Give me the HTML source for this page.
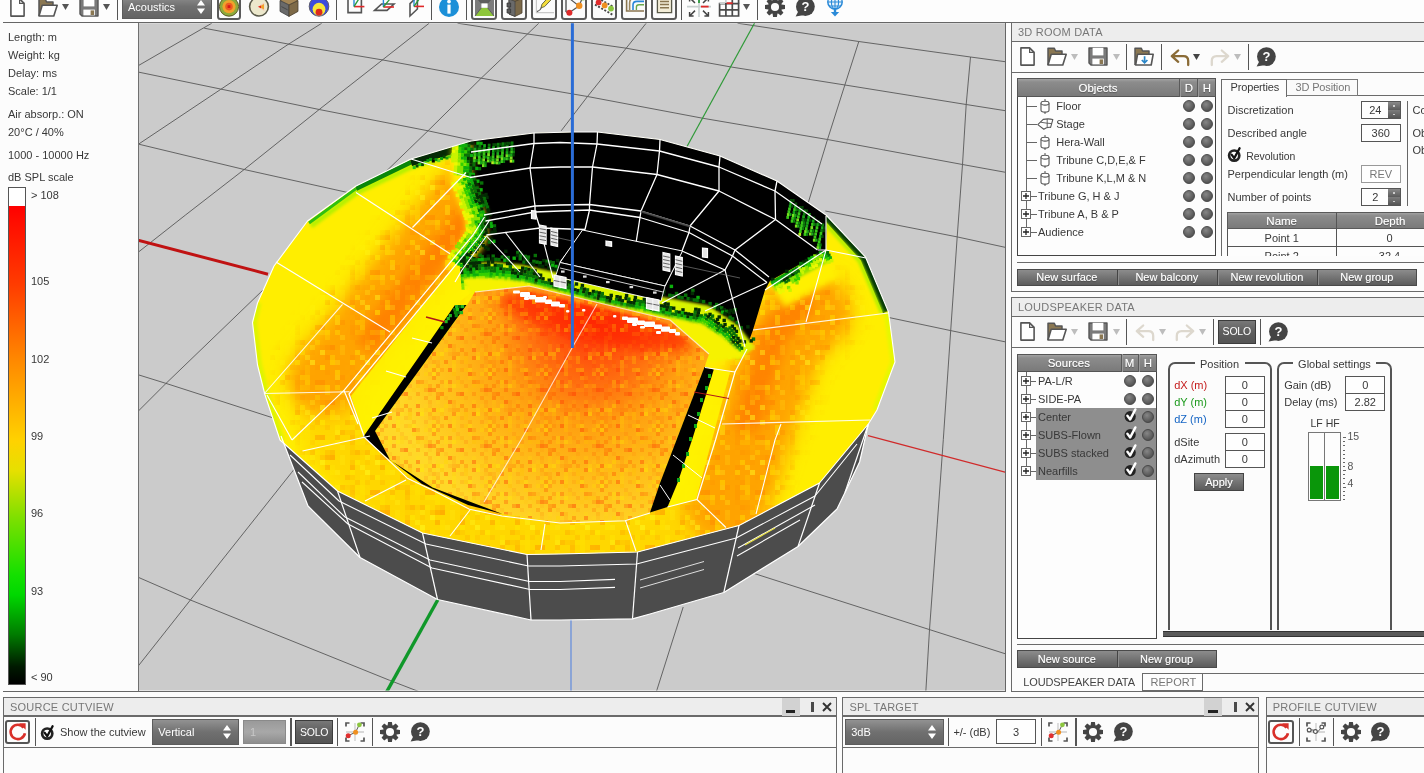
<!DOCTYPE html>
<html><head><meta charset="utf-8"><title>Acoustics</title>
<style>
html,body{margin:0;padding:0;}
body{width:1424px;height:773px;overflow:hidden;background:#fcfcfc;font-family:"Liberation Sans",sans-serif;}
#root{position:relative;width:1424px;height:773px;overflow:hidden;background:#fcfcfc;}
.t{position:absolute;white-space:nowrap;font-family:"Liberation Sans",sans-serif;}
.hd{background:linear-gradient(#a2a2a2,#8c8c8c 18%,#7a7a7a);}
.btn{background:linear-gradient(#8c8c8c,#767676 45%,#5c5c5c);}
.sh{text-shadow:0 0 1px rgba(255,255,255,.6),0 1px 1px rgba(0,0,0,.45);}
.inp{background:#fff;border:1px solid #555;box-sizing:border-box;}
svg{position:absolute;overflow:visible;}
#ui{position:absolute;left:0;top:0;width:1424px;height:773px;will-change:transform;}
</style></head>
<body>
<div id="root">
<svg style="left:0;top:0" width="1424" height="773" viewBox="0 0 1424 773"><defs>
<pattern id="nz" width="56" height="56" patternUnits="userSpaceOnUse"><rect x="0" y="8" width="4" height="4" fill="#ff3000" fill-opacity="0.47"/><rect x="0" y="16" width="4" height="4" fill="#ff7000" fill-opacity="0.18"/><rect x="0" y="32" width="4" height="4" fill="#ff3000" fill-opacity="0.47"/><rect x="0" y="44" width="4" height="4" fill="#ff3000" fill-opacity="0.35"/><rect x="0" y="52" width="4" height="4" fill="#ff3000" fill-opacity="0.34"/><rect x="4" y="8" width="4" height="4" fill="#ff7000" fill-opacity="0.22"/><rect x="4" y="12" width="4" height="4" fill="#ff5a00" fill-opacity="0.13"/><rect x="4" y="16" width="4" height="4" fill="#ff5a00" fill-opacity="0.26"/><rect x="4" y="20" width="4" height="4" fill="#ff3000" fill-opacity="0.35"/><rect x="4" y="24" width="4" height="4" fill="#ffd800" fill-opacity="0.40"/><rect x="4" y="28" width="4" height="4" fill="#ffee00" fill-opacity="0.30"/><rect x="4" y="32" width="4" height="4" fill="#ffee00" fill-opacity="0.22"/><rect x="4" y="36" width="4" height="4" fill="#ffc000" fill-opacity="0.45"/><rect x="4" y="48" width="4" height="4" fill="#ffee00" fill-opacity="0.42"/><rect x="8" y="0" width="4" height="4" fill="#ff3000" fill-opacity="0.32"/><rect x="8" y="12" width="4" height="4" fill="#ffd800" fill-opacity="0.10"/><rect x="8" y="16" width="4" height="4" fill="#ff7000" fill-opacity="0.35"/><rect x="8" y="20" width="4" height="4" fill="#ffee00" fill-opacity="0.24"/><rect x="8" y="28" width="4" height="4" fill="#ffd800" fill-opacity="0.11"/><rect x="8" y="40" width="4" height="4" fill="#ff3000" fill-opacity="0.11"/><rect x="8" y="44" width="4" height="4" fill="#ffc000" fill-opacity="0.35"/><rect x="8" y="48" width="4" height="4" fill="#ffd800" fill-opacity="0.21"/><rect x="12" y="0" width="4" height="4" fill="#ff3000" fill-opacity="0.52"/><rect x="12" y="8" width="4" height="4" fill="#ffd800" fill-opacity="0.11"/><rect x="12" y="12" width="4" height="4" fill="#ff5a00" fill-opacity="0.43"/><rect x="12" y="20" width="4" height="4" fill="#ffd800" fill-opacity="0.12"/><rect x="12" y="24" width="4" height="4" fill="#ff7000" fill-opacity="0.21"/><rect x="12" y="32" width="4" height="4" fill="#ff7000" fill-opacity="0.21"/><rect x="12" y="44" width="4" height="4" fill="#ff5a00" fill-opacity="0.15"/><rect x="16" y="4" width="4" height="4" fill="#ff7000" fill-opacity="0.17"/><rect x="16" y="16" width="4" height="4" fill="#ff7000" fill-opacity="0.35"/><rect x="16" y="20" width="4" height="4" fill="#ffc000" fill-opacity="0.48"/><rect x="16" y="24" width="4" height="4" fill="#ffc000" fill-opacity="0.40"/><rect x="16" y="32" width="4" height="4" fill="#ffc000" fill-opacity="0.46"/><rect x="16" y="48" width="4" height="4" fill="#ff3000" fill-opacity="0.17"/><rect x="16" y="52" width="4" height="4" fill="#ffd800" fill-opacity="0.16"/><rect x="20" y="28" width="4" height="4" fill="#ff7000" fill-opacity="0.26"/><rect x="20" y="32" width="4" height="4" fill="#ffee00" fill-opacity="0.36"/><rect x="20" y="36" width="4" height="4" fill="#ff3000" fill-opacity="0.48"/><rect x="20" y="40" width="4" height="4" fill="#ffd800" fill-opacity="0.31"/><rect x="20" y="52" width="4" height="4" fill="#ffc000" fill-opacity="0.20"/><rect x="24" y="0" width="4" height="4" fill="#ff5a00" fill-opacity="0.32"/><rect x="24" y="8" width="4" height="4" fill="#ffee00" fill-opacity="0.15"/><rect x="24" y="12" width="4" height="4" fill="#ff3000" fill-opacity="0.44"/><rect x="24" y="20" width="4" height="4" fill="#ff3000" fill-opacity="0.41"/><rect x="24" y="36" width="4" height="4" fill="#ff7000" fill-opacity="0.33"/><rect x="24" y="40" width="4" height="4" fill="#ffc000" fill-opacity="0.18"/><rect x="24" y="44" width="4" height="4" fill="#ff5a00" fill-opacity="0.46"/><rect x="24" y="48" width="4" height="4" fill="#ffc000" fill-opacity="0.46"/><rect x="28" y="0" width="4" height="4" fill="#ffc000" fill-opacity="0.09"/><rect x="28" y="16" width="4" height="4" fill="#ffee00" fill-opacity="0.29"/><rect x="28" y="20" width="4" height="4" fill="#ffee00" fill-opacity="0.53"/><rect x="28" y="44" width="4" height="4" fill="#ff7000" fill-opacity="0.48"/><rect x="28" y="48" width="4" height="4" fill="#ffc000" fill-opacity="0.24"/><rect x="28" y="52" width="4" height="4" fill="#ffc000" fill-opacity="0.14"/><rect x="32" y="4" width="4" height="4" fill="#ff5a00" fill-opacity="0.30"/><rect x="32" y="12" width="4" height="4" fill="#ffee00" fill-opacity="0.12"/><rect x="32" y="16" width="4" height="4" fill="#ffc000" fill-opacity="0.27"/><rect x="32" y="24" width="4" height="4" fill="#ffc000" fill-opacity="0.15"/><rect x="32" y="28" width="4" height="4" fill="#ff3000" fill-opacity="0.15"/><rect x="32" y="32" width="4" height="4" fill="#ffc000" fill-opacity="0.15"/><rect x="32" y="36" width="4" height="4" fill="#ffd800" fill-opacity="0.39"/><rect x="32" y="44" width="4" height="4" fill="#ff5a00" fill-opacity="0.09"/><rect x="32" y="48" width="4" height="4" fill="#ffc000" fill-opacity="0.39"/><rect x="32" y="52" width="4" height="4" fill="#ff5a00" fill-opacity="0.28"/><rect x="36" y="0" width="4" height="4" fill="#ff5a00" fill-opacity="0.09"/><rect x="36" y="8" width="4" height="4" fill="#ff7000" fill-opacity="0.23"/><rect x="36" y="12" width="4" height="4" fill="#ff5a00" fill-opacity="0.11"/><rect x="36" y="16" width="4" height="4" fill="#ffd800" fill-opacity="0.39"/><rect x="36" y="20" width="4" height="4" fill="#ff7000" fill-opacity="0.28"/><rect x="36" y="24" width="4" height="4" fill="#ff7000" fill-opacity="0.14"/><rect x="36" y="32" width="4" height="4" fill="#ffd800" fill-opacity="0.44"/><rect x="36" y="36" width="4" height="4" fill="#ff5a00" fill-opacity="0.16"/><rect x="36" y="40" width="4" height="4" fill="#ffc000" fill-opacity="0.14"/><rect x="36" y="48" width="4" height="4" fill="#ff7000" fill-opacity="0.34"/><rect x="36" y="52" width="4" height="4" fill="#ff3000" fill-opacity="0.50"/><rect x="40" y="16" width="4" height="4" fill="#ff3000" fill-opacity="0.44"/><rect x="40" y="20" width="4" height="4" fill="#ffd800" fill-opacity="0.23"/><rect x="40" y="24" width="4" height="4" fill="#ff7000" fill-opacity="0.32"/><rect x="40" y="28" width="4" height="4" fill="#ffd800" fill-opacity="0.32"/><rect x="40" y="32" width="4" height="4" fill="#ff7000" fill-opacity="0.52"/><rect x="40" y="36" width="4" height="4" fill="#ffee00" fill-opacity="0.51"/><rect x="40" y="40" width="4" height="4" fill="#ff5a00" fill-opacity="0.47"/><rect x="40" y="52" width="4" height="4" fill="#ff3000" fill-opacity="0.40"/><rect x="44" y="0" width="4" height="4" fill="#ff5a00" fill-opacity="0.39"/><rect x="44" y="4" width="4" height="4" fill="#ff5a00" fill-opacity="0.52"/><rect x="44" y="8" width="4" height="4" fill="#ffee00" fill-opacity="0.15"/><rect x="44" y="12" width="4" height="4" fill="#ffd800" fill-opacity="0.18"/><rect x="44" y="16" width="4" height="4" fill="#ffd800" fill-opacity="0.50"/><rect x="44" y="24" width="4" height="4" fill="#ff5a00" fill-opacity="0.16"/><rect x="44" y="28" width="4" height="4" fill="#ff7000" fill-opacity="0.27"/><rect x="44" y="32" width="4" height="4" fill="#ffee00" fill-opacity="0.23"/><rect x="44" y="36" width="4" height="4" fill="#ff3000" fill-opacity="0.24"/><rect x="44" y="40" width="4" height="4" fill="#ffc000" fill-opacity="0.09"/><rect x="44" y="48" width="4" height="4" fill="#ff7000" fill-opacity="0.53"/><rect x="48" y="0" width="4" height="4" fill="#ff5a00" fill-opacity="0.54"/><rect x="48" y="16" width="4" height="4" fill="#ffee00" fill-opacity="0.44"/><rect x="48" y="20" width="4" height="4" fill="#ffc000" fill-opacity="0.46"/><rect x="48" y="32" width="4" height="4" fill="#ff7000" fill-opacity="0.31"/><rect x="48" y="44" width="4" height="4" fill="#ff5a00" fill-opacity="0.28"/><rect x="48" y="52" width="4" height="4" fill="#ffc000" fill-opacity="0.12"/><rect x="52" y="4" width="4" height="4" fill="#ff5a00" fill-opacity="0.11"/><rect x="52" y="8" width="4" height="4" fill="#ffd800" fill-opacity="0.09"/><rect x="52" y="12" width="4" height="4" fill="#ffd800" fill-opacity="0.52"/><rect x="52" y="24" width="4" height="4" fill="#ff5a00" fill-opacity="0.52"/><rect x="52" y="28" width="4" height="4" fill="#ffee00" fill-opacity="0.10"/><rect x="52" y="44" width="4" height="4" fill="#ffee00" fill-opacity="0.29"/><rect x="52" y="48" width="4" height="4" fill="#ffee00" fill-opacity="0.24"/></pattern>
<pattern id="nz2" width="55" height="55" patternUnits="userSpaceOnUse"><rect x="0" y="10" width="5" height="5" fill="#ffa800" fill-opacity="0.59"/><rect x="0" y="15" width="5" height="5" fill="#ff8000" fill-opacity="0.57"/><rect x="0" y="25" width="5" height="5" fill="#ffe800" fill-opacity="0.42"/><rect x="0" y="30" width="5" height="5" fill="#ffe800" fill-opacity="0.58"/><rect x="5" y="0" width="5" height="5" fill="#fff000" fill-opacity="0.41"/><rect x="5" y="30" width="5" height="5" fill="#ffff20" fill-opacity="0.30"/><rect x="5" y="40" width="5" height="5" fill="#ffe800" fill-opacity="0.53"/><rect x="5" y="45" width="5" height="5" fill="#ffff20" fill-opacity="0.39"/><rect x="5" y="50" width="5" height="5" fill="#ff9000" fill-opacity="0.32"/><rect x="10" y="5" width="5" height="5" fill="#ffff20" fill-opacity="0.27"/><rect x="10" y="15" width="5" height="5" fill="#ffff20" fill-opacity="0.21"/><rect x="10" y="20" width="5" height="5" fill="#ffff20" fill-opacity="0.19"/><rect x="10" y="45" width="5" height="5" fill="#ff8000" fill-opacity="0.34"/><rect x="15" y="35" width="5" height="5" fill="#ffa800" fill-opacity="0.52"/><rect x="15" y="45" width="5" height="5" fill="#ffa800" fill-opacity="0.28"/><rect x="20" y="0" width="5" height="5" fill="#ff8000" fill-opacity="0.23"/><rect x="20" y="5" width="5" height="5" fill="#ff8000" fill-opacity="0.10"/><rect x="20" y="10" width="5" height="5" fill="#ffa800" fill-opacity="0.41"/><rect x="20" y="15" width="5" height="5" fill="#ffa800" fill-opacity="0.15"/><rect x="20" y="20" width="5" height="5" fill="#ffa800" fill-opacity="0.38"/><rect x="20" y="25" width="5" height="5" fill="#ff9000" fill-opacity="0.51"/><rect x="20" y="30" width="5" height="5" fill="#fff000" fill-opacity="0.44"/><rect x="20" y="35" width="5" height="5" fill="#ff8000" fill-opacity="0.12"/><rect x="20" y="45" width="5" height="5" fill="#ff9000" fill-opacity="0.28"/><rect x="20" y="50" width="5" height="5" fill="#ff9000" fill-opacity="0.41"/><rect x="25" y="0" width="5" height="5" fill="#fff000" fill-opacity="0.21"/><rect x="25" y="10" width="5" height="5" fill="#ff9000" fill-opacity="0.47"/><rect x="25" y="15" width="5" height="5" fill="#ffa800" fill-opacity="0.13"/><rect x="25" y="20" width="5" height="5" fill="#fff000" fill-opacity="0.46"/><rect x="25" y="40" width="5" height="5" fill="#ff8000" fill-opacity="0.20"/><rect x="25" y="45" width="5" height="5" fill="#ffe800" fill-opacity="0.34"/><rect x="30" y="0" width="5" height="5" fill="#fff000" fill-opacity="0.23"/><rect x="30" y="10" width="5" height="5" fill="#ff8000" fill-opacity="0.12"/><rect x="30" y="25" width="5" height="5" fill="#ffff20" fill-opacity="0.40"/><rect x="30" y="35" width="5" height="5" fill="#ffe800" fill-opacity="0.22"/><rect x="30" y="40" width="5" height="5" fill="#fff000" fill-opacity="0.19"/><rect x="30" y="45" width="5" height="5" fill="#fff000" fill-opacity="0.35"/><rect x="30" y="50" width="5" height="5" fill="#ffe800" fill-opacity="0.48"/><rect x="35" y="0" width="5" height="5" fill="#ffa800" fill-opacity="0.18"/><rect x="35" y="5" width="5" height="5" fill="#ffe800" fill-opacity="0.09"/><rect x="35" y="10" width="5" height="5" fill="#ffa800" fill-opacity="0.58"/><rect x="35" y="15" width="5" height="5" fill="#ffff20" fill-opacity="0.28"/><rect x="35" y="20" width="5" height="5" fill="#ff8000" fill-opacity="0.12"/><rect x="35" y="30" width="5" height="5" fill="#ffff20" fill-opacity="0.58"/><rect x="35" y="40" width="5" height="5" fill="#ffa800" fill-opacity="0.23"/><rect x="40" y="0" width="5" height="5" fill="#ffe800" fill-opacity="0.28"/><rect x="40" y="10" width="5" height="5" fill="#fff000" fill-opacity="0.31"/><rect x="40" y="35" width="5" height="5" fill="#ff9000" fill-opacity="0.25"/><rect x="40" y="50" width="5" height="5" fill="#ff8000" fill-opacity="0.45"/><rect x="45" y="0" width="5" height="5" fill="#ffff20" fill-opacity="0.21"/><rect x="45" y="15" width="5" height="5" fill="#ff9000" fill-opacity="0.27"/><rect x="45" y="20" width="5" height="5" fill="#ffff20" fill-opacity="0.52"/><rect x="45" y="35" width="5" height="5" fill="#fff000" fill-opacity="0.57"/><rect x="45" y="50" width="5" height="5" fill="#ff8000" fill-opacity="0.48"/><rect x="50" y="0" width="5" height="5" fill="#ffe800" fill-opacity="0.54"/><rect x="50" y="5" width="5" height="5" fill="#fff000" fill-opacity="0.29"/><rect x="50" y="10" width="5" height="5" fill="#ffa800" fill-opacity="0.37"/><rect x="50" y="15" width="5" height="5" fill="#ff9000" fill-opacity="0.57"/><rect x="50" y="25" width="5" height="5" fill="#ff8000" fill-opacity="0.42"/><rect x="50" y="40" width="5" height="5" fill="#ff8000" fill-opacity="0.17"/></pattern>

<radialGradient id="gfloor" gradientUnits="userSpaceOnUse" cx="0" cy="0" r="100" gradientTransform="translate(594 322) rotate(13) scale(2.1 2.2)">
 <stop offset="0" stop-color="#ff3808"/><stop offset="0.12" stop-color="#ff4a0c"/><stop offset="0.3" stop-color="#ff7210"/><stop offset="0.46" stop-color="#ff9e10"/><stop offset="0.7" stop-color="#ffbc18"/><stop offset="1" stop-color="#ffd828"/></radialGradient>
<radialGradient id="gL" gradientUnits="userSpaceOnUse" cx="0" cy="0" r="100" gradientTransform="translate(408 272) rotate(-52) scale(1.35 0.42)">
 <stop offset="0" stop-color="#ff7a00"/><stop offset="0.45" stop-color="#ff9800" stop-opacity=".85"/><stop offset="1" stop-color="#ffd000" stop-opacity="0"/></radialGradient>
<radialGradient id="gR" gradientUnits="userSpaceOnUse" cx="0" cy="0" r="100" gradientTransform="translate(800 318) rotate(58) scale(1.25 0.45)">
 <stop offset="0" stop-color="#ff7a00"/><stop offset="0.45" stop-color="#ff9800" stop-opacity=".85"/><stop offset="1" stop-color="#ffd000" stop-opacity="0"/></radialGradient>
<radialGradient id="gB" gradientUnits="userSpaceOnUse" cx="0" cy="0" r="100" gradientTransform="translate(560 505) scale(2.6 0.75)">
 <stop offset="0" stop-color="#ffb000" stop-opacity=".85"/><stop offset="0.7" stop-color="#ffc400" stop-opacity=".6"/><stop offset="1" stop-color="#ffd800" stop-opacity="0"/></radialGradient>
<filter id="bl3" filterUnits="userSpaceOnUse" x="200" y="100" width="760" height="520"><feGaussianBlur stdDeviation="3"/></filter>
<filter id="bl8" filterUnits="userSpaceOnUse" x="200" y="100" width="760" height="520"><feGaussianBlur stdDeviation="9"/></filter>
<filter id="bl5" filterUnits="userSpaceOnUse" x="200" y="100" width="760" height="520"><feGaussianBlur stdDeviation="6"/></filter>
<filter id="bl2" filterUnits="userSpaceOnUse" x="200" y="100" width="760" height="520"><feGaussianBlur stdDeviation="1.6"/></filter>
<clipPath id="cview"><rect x="138" y="23.3" width="867.3" height="667.3"/></clipPath>

<clipPath id="crim"><polygon points="574.0,132.0 597.5,132.0 660.0,139.5 720.0,156.0 777.0,181.0 826.0,215.0 865.5,257.0 888.5,312.0 895.0,362.0 877.0,410.0 868.4,424.0 819.5,483.0 739.0,525.5 637.5,552.0 560.0,554.0 527.0,554.5 422.5,533.0 337.5,491.0 280.0,440.0 265.0,395.0 257.5,365.0 252.5,322.5 257.5,303.0 274.0,266.0 307.5,221.0 356.0,186.0 411.0,159.0 471.0,141.0 534.0,133.0"/></clipPath>
<clipPath id="cfloor"><polygon points="475.0,292.0 529.0,286.0 670.0,320.0 709.0,354.0 704.5,367.0 660.0,483.0 650.0,512.5 625.0,520.0 560.0,522.5 502.5,514.0 432.5,487.5 390.0,460.0 375.0,431.0 467.0,305.0"/></clipPath>
<clipPath id="cblack"><polygon points="471.0,141.0 534.0,133.0 574.0,132.0 597.5,132.0 660.0,139.5 720.0,156.0 777.0,181.0 826.0,215.0 826.5,232.0 826.0,250.0 770.0,281.0 765.0,290.0 753.0,330.0 746.0,349.0 709.0,354.0 670.0,320.0 529.0,286.0 475.0,292.0 462.0,270.0 486.5,235.0 484.0,215.0 470.0,177.5"/></clipPath>
</defs>
<g clip-path="url(#cview)">
<rect x="138" y="23" width="868" height="668" fill="#cbcbcb"/>
<polyline points="737.5,23.2 858.8,41.5 970.5,57.0 1006.0,61.8" fill="none" stroke="#585858" stroke-width="0.9"/>
<polyline points="457.5,23.2 527.5,34.0 626.2,48.2 731.2,67.0 845.0,85.0 966.2,104.5 1006.0,110.8" fill="none" stroke="#585858" stroke-width="0.9"/>
<polyline points="204.2,28.2 288.0,44.0 383.0,60.0 481.2,78.2 587.5,96.5 702.5,118.2 827.5,139.5 962.5,164.5 1006.0,172.4" fill="none" stroke="#585858" stroke-width="0.9"/>
<polyline points="138.0,72.0 220.5,89.0 319.2,109.5 428.0,130.8 480.0,142.0" fill="none" stroke="#585858" stroke-width="0.9"/>
<polyline points="825.3,211.0 957.2,236.9 1006.0,247.5" fill="none" stroke="#585858" stroke-width="0.9"/>
<polyline points="138.0,144.0 244.2,169.5 345.5,192.0 380.0,200.0" fill="none" stroke="#585858" stroke-width="0.9"/>
<polyline points="885.0,316.7 950.7,330.6 1006.0,342.0" fill="none" stroke="#585858" stroke-width="0.9"/>
<polyline points="138.0,374.7 166.0,383.4 269.0,416.6 290.0,423.0" fill="none" stroke="#585858" stroke-width="0.9"/>
<polyline points="138.0,577.2 190.4,600.0 389.6,680.3 420.0,692.0" fill="none" stroke="#585858" stroke-width="0.9"/>
<polyline points="754.8,573.7 929.5,629.6 1006.0,654.0" fill="none" stroke="#585858" stroke-width="0.9"/>
<polyline points="138.0,65.8 211.8,23.2" fill="none" stroke="#585858" stroke-width="0.9"/>
<polyline points="138.0,144.5 220.5,89.5 288.0,44.5 321.8,23.2" fill="none" stroke="#585858" stroke-width="0.9"/>
<polyline points="138.0,252.4 185.5,215.0 244.2,169.5 319.2,109.5 383.0,59.5 429.2,23.2" fill="none" stroke="#585858" stroke-width="0.9"/>
<polyline points="138.0,411.4 166.0,383.4 260.3,292.6 388.0,169.5 428.0,130.8 481.2,78.2 527.5,34.0 538.8,23.2" fill="none" stroke="#585858" stroke-width="0.9"/>
<polyline points="138.0,666.3 190.4,600.0 291.7,472.4 330.0,424.0" fill="none" stroke="#585858" stroke-width="0.9"/>
<polyline points="561.2,130.8 587.5,96.5 626.2,48.2 646.2,23.2" fill="none" stroke="#585858" stroke-width="0.9"/>
<polyline points="858.8,41.5 845.0,84.5 827.5,139.5 806.0,210.0" fill="none" stroke="#585858" stroke-width="0.9"/>
<polyline points="683.2,607.0 657.0,689.7 656.0,693.0" fill="none" stroke="#585858" stroke-width="0.9"/>
<polyline points="970.5,57.0 966.2,104.5 962.5,164.5 957.2,236.9 950.7,330.6 943.3,439.6 937.2,524.8 929.5,629.6 925.8,692.0" fill="none" stroke="#585858" stroke-width="0.9"/>
<line x1="138" y1="240.2" x2="268" y2="274.2" stroke="#c01212" stroke-width="3"/>
<line x1="868" y1="435.6" x2="1006" y2="472.4" stroke="#d02a2a" stroke-width="1.2"/>
<line x1="754.6" y1="23" x2="687" y2="146.5" stroke="#2f9a38" stroke-width="1.2"/>
<line x1="438" y1="599.5" x2="386.6" y2="692" stroke="#10982a" stroke-width="3.4"/>
<line x1="571" y1="619" x2="571" y2="692" stroke="#7a9ad8" stroke-width="1.6"/>
<polygon points="868.4,424.0 859.6,462.0 845.0,492.5 837.0,509.0 798.0,546.5 723.8,592.5 650.0,614.0 632.5,618.8 560.0,620.0 531.0,620.0 437.5,599.5 360.0,557.5 308.0,506.0 281.0,436.0 280.0,440.0 337.5,491.0 422.5,533.0 527.0,554.5 560.0,554.0 637.5,552.0 739.0,525.5 819.5,483.0" fill="#4c4c4c"/>
<polygon points="574.0,132.0 597.5,132.0 660.0,139.5 720.0,156.0 777.0,181.0 826.0,215.0 865.5,257.0 888.5,312.0 895.0,362.0 877.0,410.0 868.4,424.0 819.5,483.0 739.0,525.5 637.5,552.0 560.0,554.0 527.0,554.5 422.5,533.0 337.5,491.0 280.0,440.0 265.0,395.0 257.5,365.0 252.5,322.5 257.5,303.0 274.0,266.0 307.5,221.0 356.0,186.0 411.0,159.0 471.0,141.0 534.0,133.0" fill="#ffee00"/>
<g clip-path="url(#crim)">
<polyline points="326.0,390.0 338.0,444.0 392.0,496.0 470.0,532.0 560.0,548.0 640.0,545.0 716.0,520.0 745.0,482.0" fill="none" stroke="#ffd400" stroke-width="66" stroke-opacity="0.85" stroke-linecap="round" stroke-linejoin="round" filter="url(#bl8)"/>
<polyline points="470.0,199.0 440.0,236.0 400.0,286.0 362.0,334.0 326.0,378.0" fill="none" stroke="#ffa000" stroke-width="74" stroke-opacity="0.95" stroke-linecap="round" stroke-linejoin="round" filter="url(#bl8)"/>
<polyline points="478.0,206.0 446.0,244.0 408.0,292.0 372.0,338.0" fill="none" stroke="#ff7c00" stroke-width="26" stroke-opacity="0.85" stroke-linecap="round" stroke-linejoin="round" filter="url(#bl5)"/>
<polyline points="812.0,312.0 786.0,336.0 764.0,395.0 745.0,455.0 726.0,505.0" fill="none" stroke="#ffa000" stroke-width="80" stroke-opacity="0.95" stroke-linecap="round" stroke-linejoin="round" filter="url(#bl8)"/>
<polyline points="800.0,306.0 775.0,332.0 762.0,372.0 748.0,420.0" fill="none" stroke="#ff7c00" stroke-width="28" stroke-opacity="0.8" stroke-linecap="round" stroke-linejoin="round" filter="url(#bl5)"/>
<mask id="mring" maskUnits="userSpaceOnUse" x="240" y="120" width="670" height="450"><rect x="240" y="120" width="670" height="450" fill="#000"/><polyline points="326.0,390.0 338.0,444.0 392.0,496.0 470.0,532.0 560.0,548.0 640.0,545.0 716.0,520.0 745.0,482.0" fill="none" stroke="#fff" stroke-width="74" stroke-opacity="1" stroke-linecap="round" stroke-linejoin="round" filter="url(#bl8)"/><polyline points="470.0,199.0 440.0,236.0 400.0,286.0 362.0,334.0 326.0,378.0" fill="none" stroke="#fff" stroke-width="98" stroke-opacity="1" stroke-linecap="round" stroke-linejoin="round" filter="url(#bl8)"/><polyline points="812.0,312.0 786.0,336.0 764.0,395.0 745.0,455.0 726.0,505.0" fill="none" stroke="#fff" stroke-width="96" stroke-opacity="1" stroke-linecap="round" stroke-linejoin="round" filter="url(#bl8)"/></mask>
<rect x="240" y="120" width="670" height="450" fill="url(#nz2)" mask="url(#mring)" opacity=".8"/>
<polygon points="483.0,219.0 489.0,222.0 351.0,396.0 364.0,436.0 455.0,305.0 472.0,292.0 462.0,270.0" fill="#fff200" opacity=".92"/>
<polygon points="713.8,369.5 730.0,372.0 696.0,500.0 667.5,507.0 677.5,483.0 692.0,440.0" fill="#fff200" opacity=".95"/>
<polyline points="471.0,149.0 411.0,167.0 356.0,193.0 311.0,226.0" fill="none" stroke="#b4f000" stroke-width="5" filter="url(#bl2)"/>
<polyline points="356.0,188.5 309.0,223.0" fill="none" stroke="#30c010" stroke-width="3"/>
<polyline points="411.0,162.0 356.0,188.5" fill="none" stroke="#0a860a" stroke-width="5"/>
<polyline points="472.0,144.5 411.0,162.5" fill="none" stroke="#042a04" stroke-width="7.5"/>
<rect x="470.0" y="146.2" width="3" height="3" fill="#064806"/>
<rect x="467.3" y="148.9" width="3" height="3" fill="#064806"/>
<rect x="464.5" y="150.5" width="3" height="3" fill="#064806"/>
<rect x="461.8" y="151.2" width="3" height="3" fill="#58d820"/>
<rect x="459.1" y="149.5" width="3" height="3" fill="#58d820"/>
<rect x="456.4" y="150.5" width="3" height="3" fill="#0c9c0c"/>
<rect x="453.6" y="150.5" width="3" height="3" fill="#58d820"/>
<rect x="450.9" y="152.9" width="3" height="3" fill="#28c418"/>
<rect x="448.2" y="155.2" width="3" height="3" fill="#28c418"/>
<rect x="445.5" y="156.5" width="3" height="3" fill="#0c9c0c"/>
<rect x="442.7" y="155.4" width="3" height="3" fill="#064806"/>
<rect x="440.0" y="157.0" width="3" height="3" fill="#0c9c0c"/>
<rect x="437.3" y="159.1" width="3" height="3" fill="#58d820"/>
<rect x="434.5" y="158.1" width="3" height="3" fill="#0c9c0c"/>
<rect x="431.8" y="159.5" width="3" height="3" fill="#000"/>
<rect x="429.1" y="157.9" width="3" height="3" fill="#0c9c0c"/>
<rect x="426.4" y="159.1" width="3" height="3" fill="#0c9c0c"/>
<rect x="423.6" y="161.2" width="3" height="3" fill="#58d820"/>
<rect x="420.9" y="163.1" width="3" height="3" fill="#064806"/>
<rect x="418.2" y="163.0" width="3" height="3" fill="#28c418"/>
<rect x="415.5" y="164.5" width="3" height="3" fill="#064806"/>
<rect x="412.7" y="166.1" width="3" height="3" fill="#28c418"/>
<polyline points="826.0,217.0 863.5,258.5 886.0,312.0" fill="none" stroke="#063a06" stroke-width="6.5"/>
<polyline points="822.0,220.0 859.5,261.0 882.0,313.0" fill="none" stroke="#a8f000" stroke-width="3.4" filter="url(#bl2)"/>
<polyline points="259.0,303.0 254.5,322.5 259.5,365.0 267.0,395.0 282.0,440.0" fill="none" stroke="#dcf400" stroke-width="5" filter="url(#bl2)"/>
<polyline points="886.5,312.0 893.0,362.0 875.0,410.0" fill="none" stroke="#e4f800" stroke-width="5" filter="url(#bl2)"/>
</g>
<polygon points="471.0,141.0 534.0,133.0 574.0,132.0 597.5,132.0 660.0,139.5 720.0,156.0 777.0,181.0 826.0,215.0 826.5,232.0 826.0,250.0 770.0,281.0 765.0,290.0 753.0,330.0 746.0,349.0 709.0,354.0 670.0,320.0 529.0,286.0 475.0,292.0 462.0,270.0 486.5,235.0 484.0,215.0 470.0,177.5" fill="#000"/>
<g clip-path="url(#crim)">
<polyline points="462.0,270.0 492.0,268.0 522.0,271.0 553.0,278.0 600.0,290.0 662.0,303.0 705.0,311.0 730.0,328.0 746.0,349.0" fill="none" stroke="#d8f400" stroke-width="22" filter="url(#bl2)" stroke-linejoin="round" transform="translate(0 5)"/>
<polyline points="463.0,144.0 461.0,178.5 475.0,216.0 477.5,237.0 453.0,271.0" fill="none" stroke="#fff000" stroke-width="20" filter="url(#bl3)" stroke-linejoin="round"/>
<polyline points="835.0,266.0 807.0,281.0 779.0,297.0" fill="none" stroke="#fff000" stroke-width="24" filter="url(#bl3)" stroke-linejoin="round"/>
<polyline points="829.5,256.0 801.5,271.0 773.5,287.0" fill="none" stroke="#8ce000" stroke-width="9" filter="url(#bl2)"/>
<polyline points="827.2,252.4 799.2,267.4 771.2,283.4" fill="none" stroke="#0ca00c" stroke-width="4.5"/>
<rect x="479.3" y="141.8" width="3.4" height="3.4" fill="#0cb00c"/><rect x="476.3" y="141.6" width="3.4" height="3.4" fill="#0cb00c"/><rect x="470.3" y="141.3" width="3.4" height="3.4" fill="#042c04"/><rect x="467.3" y="141.1" width="3.4" height="3.4" fill="#042c04"/><rect x="464.3" y="141.0" width="3.4" height="3.4" fill="#087008"/><rect x="461.3" y="140.8" width="3.4" height="3.4" fill="#34d000"/><rect x="458.3" y="140.6" width="3.4" height="3.4" fill="#34d000"/><rect x="455.3" y="140.4" width="3.4" height="3.4" fill="#c8f400"/><rect x="452.3" y="140.3" width="3.4" height="3.4" fill="#c8f400"/><rect x="476.1" y="144.8" width="3.4" height="3.4" fill="#042c04"/><rect x="467.1" y="144.3" width="3.4" height="3.4" fill="#087008"/><rect x="464.1" y="144.1" width="3.4" height="3.4" fill="#0cb00c"/><rect x="461.1" y="143.9" width="3.4" height="3.4" fill="#0cb00c"/><rect x="458.1" y="143.7" width="3.4" height="3.4" fill="#0cb00c"/><rect x="455.1" y="143.6" width="3.4" height="3.4" fill="#c8f400"/><rect x="452.1" y="143.4" width="3.4" height="3.4" fill="#c8f400"/><rect x="475.9" y="147.9" width="3.4" height="3.4" fill="#0cb00c"/><rect x="469.9" y="147.6" width="3.4" height="3.4" fill="#087008"/><rect x="466.9" y="147.4" width="3.4" height="3.4" fill="#0cb00c"/><rect x="463.9" y="147.2" width="3.4" height="3.4" fill="#087008"/><rect x="461.0" y="147.1" width="3.4" height="3.4" fill="#0cb00c"/><rect x="458.0" y="146.9" width="3.4" height="3.4" fill="#34d000"/><rect x="455.0" y="146.7" width="3.4" height="3.4" fill="#ecf800"/><rect x="452.0" y="146.5" width="3.4" height="3.4" fill="#c8f400"/><rect x="475.7" y="151.1" width="3.4" height="3.4" fill="#0cb00c"/><rect x="469.8" y="150.7" width="3.4" height="3.4" fill="#042c04"/><rect x="466.8" y="150.5" width="3.4" height="3.4" fill="#087008"/><rect x="463.8" y="150.4" width="3.4" height="3.4" fill="#34d000"/><rect x="460.8" y="150.2" width="3.4" height="3.4" fill="#0cb00c"/><rect x="457.8" y="150.0" width="3.4" height="3.4" fill="#34d000"/><rect x="454.8" y="149.8" width="3.4" height="3.4" fill="#c8f400"/><rect x="451.8" y="149.7" width="3.4" height="3.4" fill="#ecf800"/><rect x="475.6" y="154.2" width="3.4" height="3.4" fill="#042c04"/><rect x="472.6" y="154.0" width="3.4" height="3.4" fill="#042c04"/><rect x="469.6" y="153.8" width="3.4" height="3.4" fill="#0cb00c"/><rect x="466.6" y="153.7" width="3.4" height="3.4" fill="#087008"/><rect x="463.6" y="153.5" width="3.4" height="3.4" fill="#087008"/><rect x="460.6" y="153.3" width="3.4" height="3.4" fill="#34d000"/><rect x="457.6" y="153.2" width="3.4" height="3.4" fill="#86e400"/><rect x="454.6" y="153.0" width="3.4" height="3.4" fill="#c8f400"/><rect x="451.6" y="152.8" width="3.4" height="3.4" fill="#c8f400"/><rect x="478.4" y="157.5" width="3.4" height="3.4" fill="#087008"/><rect x="469.4" y="157.0" width="3.4" height="3.4" fill="#042c04"/><rect x="466.4" y="156.8" width="3.4" height="3.4" fill="#042c04"/><rect x="463.4" y="156.6" width="3.4" height="3.4" fill="#0cb00c"/><rect x="460.4" y="156.5" width="3.4" height="3.4" fill="#0cb00c"/><rect x="457.4" y="156.3" width="3.4" height="3.4" fill="#86e400"/><rect x="454.4" y="156.1" width="3.4" height="3.4" fill="#c8f400"/><rect x="451.4" y="155.9" width="3.4" height="3.4" fill="#c8f400"/><rect x="478.2" y="160.6" width="3.4" height="3.4" fill="#0cb00c"/><rect x="472.2" y="160.3" width="3.4" height="3.4" fill="#087008"/><rect x="469.2" y="160.1" width="3.4" height="3.4" fill="#042c04"/><rect x="466.2" y="159.9" width="3.4" height="3.4" fill="#087008"/><rect x="463.2" y="159.8" width="3.4" height="3.4" fill="#34d000"/><rect x="460.2" y="159.6" width="3.4" height="3.4" fill="#86e400"/><rect x="457.2" y="159.4" width="3.4" height="3.4" fill="#86e400"/><rect x="454.2" y="159.3" width="3.4" height="3.4" fill="#c8f400"/><rect x="451.2" y="159.1" width="3.4" height="3.4" fill="#c8f400"/><rect x="472.0" y="163.4" width="3.4" height="3.4" fill="#087008"/><rect x="469.0" y="163.3" width="3.4" height="3.4" fill="#042c04"/><rect x="466.0" y="163.1" width="3.4" height="3.4" fill="#34d000"/><rect x="463.0" y="162.9" width="3.4" height="3.4" fill="#86e400"/><rect x="460.0" y="162.7" width="3.4" height="3.4" fill="#34d000"/><rect x="457.0" y="162.6" width="3.4" height="3.4" fill="#c8f400"/><rect x="454.1" y="162.4" width="3.4" height="3.4" fill="#ecf800"/><rect x="477.8" y="166.9" width="3.4" height="3.4" fill="#087008"/><rect x="474.8" y="166.7" width="3.4" height="3.4" fill="#0cb00c"/><rect x="471.8" y="166.6" width="3.4" height="3.4" fill="#042c04"/><rect x="468.8" y="166.4" width="3.4" height="3.4" fill="#087008"/><rect x="465.9" y="166.2" width="3.4" height="3.4" fill="#0cb00c"/><rect x="462.9" y="166.0" width="3.4" height="3.4" fill="#0cb00c"/><rect x="459.9" y="165.9" width="3.4" height="3.4" fill="#86e400"/><rect x="456.9" y="165.7" width="3.4" height="3.4" fill="#86e400"/><rect x="453.9" y="165.5" width="3.4" height="3.4" fill="#c8f400"/><rect x="468.7" y="169.5" width="3.4" height="3.4" fill="#087008"/><rect x="465.7" y="169.4" width="3.4" height="3.4" fill="#0cb00c"/><rect x="462.7" y="169.2" width="3.4" height="3.4" fill="#0cb00c"/><rect x="459.7" y="169.0" width="3.4" height="3.4" fill="#86e400"/><rect x="456.7" y="168.8" width="3.4" height="3.4" fill="#86e400"/><rect x="453.7" y="168.7" width="3.4" height="3.4" fill="#c8f400"/><rect x="471.5" y="172.8" width="3.4" height="3.4" fill="#0cb00c"/><rect x="468.5" y="172.7" width="3.4" height="3.4" fill="#0cb00c"/><rect x="465.5" y="172.5" width="3.4" height="3.4" fill="#087008"/><rect x="462.5" y="172.3" width="3.4" height="3.4" fill="#34d000"/><rect x="459.5" y="172.1" width="3.4" height="3.4" fill="#86e400"/><rect x="456.5" y="172.0" width="3.4" height="3.4" fill="#86e400"/><rect x="453.5" y="171.8" width="3.4" height="3.4" fill="#c8f400"/><rect x="471.1" y="174.8" width="3.4" height="3.4" fill="#042c04"/><rect x="468.3" y="175.8" width="3.4" height="3.4" fill="#0cb00c"/><rect x="465.5" y="176.8" width="3.4" height="3.4" fill="#34d000"/><rect x="462.7" y="177.9" width="3.4" height="3.4" fill="#0cb00c"/><rect x="459.9" y="178.9" width="3.4" height="3.4" fill="#86e400"/><rect x="457.1" y="180.0" width="3.4" height="3.4" fill="#86e400"/><rect x="454.2" y="181.0" width="3.4" height="3.4" fill="#ecf800"/><rect x="451.4" y="182.1" width="3.4" height="3.4" fill="#ecf800"/><rect x="472.2" y="177.6" width="3.4" height="3.4" fill="#087008"/><rect x="469.4" y="178.7" width="3.4" height="3.4" fill="#0cb00c"/><rect x="466.6" y="179.7" width="3.4" height="3.4" fill="#0cb00c"/><rect x="463.8" y="180.8" width="3.4" height="3.4" fill="#86e400"/><rect x="460.9" y="181.8" width="3.4" height="3.4" fill="#34d000"/><rect x="458.1" y="182.9" width="3.4" height="3.4" fill="#c8f400"/><rect x="455.3" y="183.9" width="3.4" height="3.4" fill="#ecf800"/><rect x="452.5" y="185.0" width="3.4" height="3.4" fill="#ecf800"/><rect x="476.1" y="179.5" width="3.4" height="3.4" fill="#0cb00c"/><rect x="473.3" y="180.5" width="3.4" height="3.4" fill="#042c04"/><rect x="470.5" y="181.6" width="3.4" height="3.4" fill="#0cb00c"/><rect x="467.6" y="182.6" width="3.4" height="3.4" fill="#087008"/><rect x="464.8" y="183.7" width="3.4" height="3.4" fill="#0cb00c"/><rect x="462.0" y="184.7" width="3.4" height="3.4" fill="#c8f400"/><rect x="459.2" y="185.8" width="3.4" height="3.4" fill="#ecf800"/><rect x="453.6" y="187.9" width="3.4" height="3.4" fill="#ecf800"/><rect x="480.0" y="181.3" width="3.4" height="3.4" fill="#087008"/><rect x="474.3" y="183.4" width="3.4" height="3.4" fill="#042c04"/><rect x="471.5" y="184.5" width="3.4" height="3.4" fill="#087008"/><rect x="468.7" y="185.5" width="3.4" height="3.4" fill="#0cb00c"/><rect x="465.9" y="186.6" width="3.4" height="3.4" fill="#0cb00c"/><rect x="463.1" y="187.6" width="3.4" height="3.4" fill="#34d000"/><rect x="460.3" y="188.7" width="3.4" height="3.4" fill="#c8f400"/><rect x="457.5" y="189.7" width="3.4" height="3.4" fill="#c8f400"/><rect x="475.4" y="186.3" width="3.4" height="3.4" fill="#087008"/><rect x="472.6" y="187.3" width="3.4" height="3.4" fill="#087008"/><rect x="469.8" y="188.4" width="3.4" height="3.4" fill="#087008"/><rect x="467.0" y="189.4" width="3.4" height="3.4" fill="#34d000"/><rect x="464.2" y="190.5" width="3.4" height="3.4" fill="#34d000"/><rect x="461.4" y="191.5" width="3.4" height="3.4" fill="#86e400"/><rect x="458.6" y="192.6" width="3.4" height="3.4" fill="#c8f400"/><rect x="455.7" y="193.6" width="3.4" height="3.4" fill="#ecf800"/><rect x="479.3" y="188.1" width="3.4" height="3.4" fill="#0cb00c"/><rect x="476.5" y="189.2" width="3.4" height="3.4" fill="#042c04"/><rect x="473.7" y="190.2" width="3.4" height="3.4" fill="#087008"/><rect x="470.9" y="191.3" width="3.4" height="3.4" fill="#087008"/><rect x="468.1" y="192.3" width="3.4" height="3.4" fill="#0cb00c"/><rect x="465.3" y="193.4" width="3.4" height="3.4" fill="#34d000"/><rect x="462.4" y="194.4" width="3.4" height="3.4" fill="#c8f400"/><rect x="459.6" y="195.5" width="3.4" height="3.4" fill="#86e400"/><rect x="477.6" y="192.1" width="3.4" height="3.4" fill="#087008"/><rect x="474.8" y="193.1" width="3.4" height="3.4" fill="#042c04"/><rect x="472.0" y="194.2" width="3.4" height="3.4" fill="#0cb00c"/><rect x="469.1" y="195.2" width="3.4" height="3.4" fill="#0cb00c"/><rect x="466.3" y="196.3" width="3.4" height="3.4" fill="#86e400"/><rect x="463.5" y="197.3" width="3.4" height="3.4" fill="#86e400"/><rect x="460.7" y="198.4" width="3.4" height="3.4" fill="#c8f400"/><rect x="484.3" y="192.8" width="3.4" height="3.4" fill="#042c04"/><rect x="481.5" y="193.9" width="3.4" height="3.4" fill="#042c04"/><rect x="478.6" y="194.9" width="3.4" height="3.4" fill="#042c04"/><rect x="475.8" y="196.0" width="3.4" height="3.4" fill="#042c04"/><rect x="473.0" y="197.0" width="3.4" height="3.4" fill="#087008"/><rect x="470.2" y="198.1" width="3.4" height="3.4" fill="#0cb00c"/><rect x="467.4" y="199.1" width="3.4" height="3.4" fill="#34d000"/><rect x="464.6" y="200.2" width="3.4" height="3.4" fill="#86e400"/><rect x="461.8" y="201.2" width="3.4" height="3.4" fill="#c8f400"/><rect x="459.0" y="202.3" width="3.4" height="3.4" fill="#ecf800"/><rect x="485.3" y="195.7" width="3.4" height="3.4" fill="#042c04"/><rect x="482.5" y="196.8" width="3.4" height="3.4" fill="#087008"/><rect x="479.7" y="197.8" width="3.4" height="3.4" fill="#042c04"/><rect x="476.9" y="198.9" width="3.4" height="3.4" fill="#087008"/><rect x="474.1" y="199.9" width="3.4" height="3.4" fill="#042c04"/><rect x="471.3" y="201.0" width="3.4" height="3.4" fill="#0cb00c"/><rect x="468.5" y="202.0" width="3.4" height="3.4" fill="#34d000"/><rect x="465.7" y="203.1" width="3.4" height="3.4" fill="#86e400"/><rect x="462.9" y="204.1" width="3.4" height="3.4" fill="#c8f400"/><rect x="460.1" y="205.2" width="3.4" height="3.4" fill="#c8f400"/><rect x="483.6" y="199.7" width="3.4" height="3.4" fill="#087008"/><rect x="480.8" y="200.7" width="3.4" height="3.4" fill="#042c04"/><rect x="478.0" y="201.8" width="3.4" height="3.4" fill="#042c04"/><rect x="475.2" y="202.8" width="3.4" height="3.4" fill="#0cb00c"/><rect x="472.4" y="203.9" width="3.4" height="3.4" fill="#34d000"/><rect x="469.6" y="204.9" width="3.4" height="3.4" fill="#0cb00c"/><rect x="466.8" y="206.0" width="3.4" height="3.4" fill="#86e400"/><rect x="463.9" y="207.0" width="3.4" height="3.4" fill="#c8f400"/><rect x="484.7" y="202.5" width="3.4" height="3.4" fill="#087008"/><rect x="481.9" y="203.6" width="3.4" height="3.4" fill="#087008"/><rect x="479.1" y="204.6" width="3.4" height="3.4" fill="#0cb00c"/><rect x="476.3" y="205.7" width="3.4" height="3.4" fill="#34d000"/><rect x="473.4" y="206.7" width="3.4" height="3.4" fill="#86e400"/><rect x="470.6" y="207.8" width="3.4" height="3.4" fill="#86e400"/><rect x="467.8" y="208.8" width="3.4" height="3.4" fill="#c8f400"/><rect x="465.0" y="209.9" width="3.4" height="3.4" fill="#c8f400"/><rect x="462.2" y="210.9" width="3.4" height="3.4" fill="#ecf800"/><rect x="485.8" y="205.4" width="3.4" height="3.4" fill="#087008"/><rect x="480.1" y="207.5" width="3.4" height="3.4" fill="#042c04"/><rect x="477.3" y="208.6" width="3.4" height="3.4" fill="#087008"/><rect x="474.5" y="209.6" width="3.4" height="3.4" fill="#86e400"/><rect x="471.7" y="210.7" width="3.4" height="3.4" fill="#34d000"/><rect x="468.9" y="211.7" width="3.4" height="3.4" fill="#86e400"/><rect x="466.1" y="212.8" width="3.4" height="3.4" fill="#ecf800"/><rect x="463.3" y="213.8" width="3.4" height="3.4" fill="#ecf800"/><rect x="486.8" y="208.3" width="3.4" height="3.4" fill="#042c04"/><rect x="481.2" y="210.4" width="3.4" height="3.4" fill="#0cb00c"/><rect x="478.4" y="211.5" width="3.4" height="3.4" fill="#0cb00c"/><rect x="475.6" y="212.5" width="3.4" height="3.4" fill="#86e400"/><rect x="472.8" y="213.6" width="3.4" height="3.4" fill="#34d000"/><rect x="470.0" y="214.6" width="3.4" height="3.4" fill="#c8f400"/><rect x="464.4" y="216.7" width="3.4" height="3.4" fill="#ecf800"/><rect x="488.3" y="212.6" width="3.4" height="3.4" fill="#042c04"/><rect x="485.3" y="212.9" width="3.4" height="3.4" fill="#042c04"/><rect x="482.3" y="213.3" width="3.4" height="3.4" fill="#0cb00c"/><rect x="479.3" y="213.7" width="3.4" height="3.4" fill="#34d000"/><rect x="476.3" y="214.0" width="3.4" height="3.4" fill="#0cb00c"/><rect x="473.4" y="214.4" width="3.4" height="3.4" fill="#86e400"/><rect x="470.4" y="214.7" width="3.4" height="3.4" fill="#ecf800"/><rect x="467.4" y="215.1" width="3.4" height="3.4" fill="#ecf800"/><rect x="485.6" y="215.9" width="3.4" height="3.4" fill="#042c04"/><rect x="482.7" y="216.3" width="3.4" height="3.4" fill="#087008"/><rect x="479.7" y="216.7" width="3.4" height="3.4" fill="#0cb00c"/><rect x="476.7" y="217.0" width="3.4" height="3.4" fill="#86e400"/><rect x="473.7" y="217.4" width="3.4" height="3.4" fill="#86e400"/><rect x="470.7" y="217.7" width="3.4" height="3.4" fill="#86e400"/><rect x="467.8" y="218.1" width="3.4" height="3.4" fill="#c8f400"/><rect x="486.0" y="218.9" width="3.4" height="3.4" fill="#042c04"/><rect x="483.0" y="219.3" width="3.4" height="3.4" fill="#087008"/><rect x="480.0" y="219.7" width="3.4" height="3.4" fill="#087008"/><rect x="477.1" y="220.0" width="3.4" height="3.4" fill="#34d000"/><rect x="474.1" y="220.4" width="3.4" height="3.4" fill="#0cb00c"/><rect x="471.1" y="220.7" width="3.4" height="3.4" fill="#86e400"/><rect x="468.1" y="221.1" width="3.4" height="3.4" fill="#ecf800"/><rect x="489.3" y="221.6" width="3.4" height="3.4" fill="#0cb00c"/><rect x="486.4" y="221.9" width="3.4" height="3.4" fill="#042c04"/><rect x="483.4" y="222.3" width="3.4" height="3.4" fill="#042c04"/><rect x="480.4" y="222.7" width="3.4" height="3.4" fill="#087008"/><rect x="477.4" y="223.0" width="3.4" height="3.4" fill="#087008"/><rect x="474.4" y="223.4" width="3.4" height="3.4" fill="#34d000"/><rect x="471.5" y="223.7" width="3.4" height="3.4" fill="#86e400"/><rect x="468.5" y="224.1" width="3.4" height="3.4" fill="#86e400"/><rect x="465.5" y="224.4" width="3.4" height="3.4" fill="#c8f400"/><rect x="492.7" y="224.2" width="3.4" height="3.4" fill="#087008"/><rect x="489.7" y="224.6" width="3.4" height="3.4" fill="#0cb00c"/><rect x="486.7" y="224.9" width="3.4" height="3.4" fill="#042c04"/><rect x="483.7" y="225.3" width="3.4" height="3.4" fill="#087008"/><rect x="480.7" y="225.7" width="3.4" height="3.4" fill="#087008"/><rect x="477.8" y="226.0" width="3.4" height="3.4" fill="#0cb00c"/><rect x="474.8" y="226.4" width="3.4" height="3.4" fill="#34d000"/><rect x="471.8" y="226.7" width="3.4" height="3.4" fill="#c8f400"/><rect x="468.8" y="227.1" width="3.4" height="3.4" fill="#86e400"/><rect x="465.9" y="227.4" width="3.4" height="3.4" fill="#ecf800"/><rect x="493.0" y="227.2" width="3.4" height="3.4" fill="#042c04"/><rect x="484.1" y="228.3" width="3.4" height="3.4" fill="#042c04"/><rect x="481.1" y="228.7" width="3.4" height="3.4" fill="#087008"/><rect x="478.1" y="229.0" width="3.4" height="3.4" fill="#86e400"/><rect x="475.1" y="229.4" width="3.4" height="3.4" fill="#86e400"/><rect x="472.2" y="229.7" width="3.4" height="3.4" fill="#86e400"/><rect x="469.2" y="230.1" width="3.4" height="3.4" fill="#ecf800"/><rect x="493.4" y="230.2" width="3.4" height="3.4" fill="#042c04"/><rect x="490.4" y="230.6" width="3.4" height="3.4" fill="#042c04"/><rect x="484.4" y="231.3" width="3.4" height="3.4" fill="#042c04"/><rect x="481.5" y="231.7" width="3.4" height="3.4" fill="#0cb00c"/><rect x="478.5" y="232.0" width="3.4" height="3.4" fill="#087008"/><rect x="475.5" y="232.4" width="3.4" height="3.4" fill="#34d000"/><rect x="472.5" y="232.7" width="3.4" height="3.4" fill="#86e400"/><rect x="469.5" y="233.1" width="3.4" height="3.4" fill="#86e400"/><rect x="466.6" y="233.4" width="3.4" height="3.4" fill="#86e400"/><rect x="492.1" y="239.6" width="3.4" height="3.4" fill="#0cb00c"/><rect x="489.7" y="237.8" width="3.4" height="3.4" fill="#042c04"/><rect x="482.4" y="232.5" width="3.4" height="3.4" fill="#042c04"/><rect x="479.9" y="230.8" width="3.4" height="3.4" fill="#0cb00c"/><rect x="477.5" y="229.0" width="3.4" height="3.4" fill="#0cb00c"/><rect x="475.1" y="227.3" width="3.4" height="3.4" fill="#86e400"/><rect x="472.6" y="225.5" width="3.4" height="3.4" fill="#c8f400"/><rect x="470.2" y="223.8" width="3.4" height="3.4" fill="#86e400"/><rect x="487.8" y="240.4" width="3.4" height="3.4" fill="#087008"/><rect x="482.9" y="236.9" width="3.4" height="3.4" fill="#0cb00c"/><rect x="480.5" y="235.2" width="3.4" height="3.4" fill="#087008"/><rect x="478.0" y="233.4" width="3.4" height="3.4" fill="#34d000"/><rect x="475.6" y="231.7" width="3.4" height="3.4" fill="#34d000"/><rect x="473.2" y="229.9" width="3.4" height="3.4" fill="#c8f400"/><rect x="470.7" y="228.1" width="3.4" height="3.4" fill="#c8f400"/><rect x="468.3" y="226.4" width="3.4" height="3.4" fill="#c8f400"/><rect x="481.0" y="239.5" width="3.4" height="3.4" fill="#042c04"/><rect x="478.6" y="237.8" width="3.4" height="3.4" fill="#0cb00c"/><rect x="476.2" y="236.0" width="3.4" height="3.4" fill="#0cb00c"/><rect x="473.7" y="234.3" width="3.4" height="3.4" fill="#0cb00c"/><rect x="471.3" y="232.5" width="3.4" height="3.4" fill="#86e400"/><rect x="468.9" y="230.8" width="3.4" height="3.4" fill="#ecf800"/><rect x="466.4" y="229.0" width="3.4" height="3.4" fill="#ecf800"/><rect x="486.4" y="247.4" width="3.4" height="3.4" fill="#042c04"/><rect x="484.0" y="245.7" width="3.4" height="3.4" fill="#042c04"/><rect x="481.6" y="243.9" width="3.4" height="3.4" fill="#042c04"/><rect x="479.1" y="242.1" width="3.4" height="3.4" fill="#042c04"/><rect x="476.7" y="240.4" width="3.4" height="3.4" fill="#087008"/><rect x="474.3" y="238.6" width="3.4" height="3.4" fill="#0cb00c"/><rect x="471.8" y="236.9" width="3.4" height="3.4" fill="#34d000"/><rect x="469.4" y="235.1" width="3.4" height="3.4" fill="#86e400"/><rect x="467.0" y="233.4" width="3.4" height="3.4" fill="#86e400"/><rect x="464.5" y="231.6" width="3.4" height="3.4" fill="#c8f400"/><rect x="477.3" y="244.8" width="3.4" height="3.4" fill="#087008"/><rect x="474.8" y="243.0" width="3.4" height="3.4" fill="#0cb00c"/><rect x="472.4" y="241.3" width="3.4" height="3.4" fill="#0cb00c"/><rect x="470.0" y="239.5" width="3.4" height="3.4" fill="#34d000"/><rect x="467.5" y="237.7" width="3.4" height="3.4" fill="#34d000"/><rect x="465.1" y="236.0" width="3.4" height="3.4" fill="#86e400"/><rect x="462.7" y="234.2" width="3.4" height="3.4" fill="#ecf800"/><rect x="475.4" y="247.4" width="3.4" height="3.4" fill="#042c04"/><rect x="472.9" y="245.6" width="3.4" height="3.4" fill="#087008"/><rect x="470.5" y="243.9" width="3.4" height="3.4" fill="#0cb00c"/><rect x="468.1" y="242.1" width="3.4" height="3.4" fill="#0cb00c"/><rect x="465.6" y="240.4" width="3.4" height="3.4" fill="#86e400"/><rect x="463.2" y="238.6" width="3.4" height="3.4" fill="#34d000"/><rect x="460.8" y="236.9" width="3.4" height="3.4" fill="#c8f400"/><rect x="478.4" y="253.5" width="3.4" height="3.4" fill="#087008"/><rect x="473.5" y="250.0" width="3.4" height="3.4" fill="#042c04"/><rect x="471.1" y="248.2" width="3.4" height="3.4" fill="#0cb00c"/><rect x="468.6" y="246.5" width="3.4" height="3.4" fill="#0cb00c"/><rect x="466.2" y="244.7" width="3.4" height="3.4" fill="#0cb00c"/><rect x="463.8" y="243.0" width="3.4" height="3.4" fill="#86e400"/><rect x="461.3" y="241.2" width="3.4" height="3.4" fill="#86e400"/><rect x="458.9" y="239.5" width="3.4" height="3.4" fill="#ecf800"/><rect x="469.2" y="250.9" width="3.4" height="3.4" fill="#042c04"/><rect x="466.7" y="249.1" width="3.4" height="3.4" fill="#0cb00c"/><rect x="464.3" y="247.3" width="3.4" height="3.4" fill="#0cb00c"/><rect x="461.9" y="245.6" width="3.4" height="3.4" fill="#86e400"/><rect x="459.4" y="243.8" width="3.4" height="3.4" fill="#86e400"/><rect x="457.0" y="242.1" width="3.4" height="3.4" fill="#86e400"/><rect x="472.2" y="257.0" width="3.4" height="3.4" fill="#042c04"/><rect x="469.7" y="255.2" width="3.4" height="3.4" fill="#087008"/><rect x="467.3" y="253.5" width="3.4" height="3.4" fill="#042c04"/><rect x="464.9" y="251.7" width="3.4" height="3.4" fill="#087008"/><rect x="462.4" y="250.0" width="3.4" height="3.4" fill="#34d000"/><rect x="460.0" y="248.2" width="3.4" height="3.4" fill="#34d000"/><rect x="457.6" y="246.5" width="3.4" height="3.4" fill="#86e400"/><rect x="455.1" y="244.7" width="3.4" height="3.4" fill="#86e400"/><rect x="472.7" y="261.3" width="3.4" height="3.4" fill="#042c04"/><rect x="470.3" y="259.6" width="3.4" height="3.4" fill="#087008"/><rect x="467.8" y="257.8" width="3.4" height="3.4" fill="#042c04"/><rect x="465.4" y="256.1" width="3.4" height="3.4" fill="#0cb00c"/><rect x="463.0" y="254.3" width="3.4" height="3.4" fill="#34d000"/><rect x="460.5" y="252.6" width="3.4" height="3.4" fill="#0cb00c"/><rect x="458.1" y="250.8" width="3.4" height="3.4" fill="#c8f400"/><rect x="455.7" y="249.1" width="3.4" height="3.4" fill="#c8f400"/><rect x="473.3" y="265.7" width="3.4" height="3.4" fill="#042c04"/><rect x="468.4" y="262.2" width="3.4" height="3.4" fill="#042c04"/><rect x="466.0" y="260.5" width="3.4" height="3.4" fill="#087008"/><rect x="463.5" y="258.7" width="3.4" height="3.4" fill="#0cb00c"/><rect x="461.1" y="256.9" width="3.4" height="3.4" fill="#0cb00c"/><rect x="458.7" y="255.2" width="3.4" height="3.4" fill="#0cb00c"/><rect x="456.2" y="253.4" width="3.4" height="3.4" fill="#34d000"/><rect x="453.8" y="251.7" width="3.4" height="3.4" fill="#86e400"/><rect x="451.4" y="249.9" width="3.4" height="3.4" fill="#c8f400"/><rect x="464.1" y="263.1" width="3.4" height="3.4" fill="#087008"/><rect x="461.6" y="261.3" width="3.4" height="3.4" fill="#0cb00c"/><rect x="459.2" y="259.6" width="3.4" height="3.4" fill="#0cb00c"/><rect x="456.8" y="257.8" width="3.4" height="3.4" fill="#34d000"/><rect x="454.3" y="256.1" width="3.4" height="3.4" fill="#c8f400"/><rect x="451.9" y="254.3" width="3.4" height="3.4" fill="#ecf800"/><rect x="449.5" y="252.5" width="3.4" height="3.4" fill="#ecf800"/><rect x="467.1" y="269.2" width="3.4" height="3.4" fill="#042c04"/><rect x="462.2" y="265.7" width="3.4" height="3.4" fill="#042c04"/><rect x="459.8" y="263.9" width="3.4" height="3.4" fill="#0cb00c"/><rect x="457.3" y="262.2" width="3.4" height="3.4" fill="#0cb00c"/><rect x="454.9" y="260.4" width="3.4" height="3.4" fill="#0cb00c"/><rect x="452.4" y="258.7" width="3.4" height="3.4" fill="#34d000"/><rect x="450.0" y="256.9" width="3.4" height="3.4" fill="#c8f400"/><rect x="447.6" y="255.2" width="3.4" height="3.4" fill="#ecf800"/>
<rect x="825.7" y="250.9" width="3.4" height="3.4" fill="#087008"/><rect x="827.1" y="253.6" width="3.4" height="3.4" fill="#087008"/><rect x="828.5" y="256.2" width="3.4" height="3.4" fill="#0cb00c"/><rect x="830.0" y="258.9" width="3.4" height="3.4" fill="#c8f400"/><rect x="822.9" y="252.4" width="3.4" height="3.4" fill="#0cb00c"/><rect x="824.3" y="255.1" width="3.4" height="3.4" fill="#0cb00c"/><rect x="825.7" y="257.7" width="3.4" height="3.4" fill="#34d000"/><rect x="827.2" y="260.4" width="3.4" height="3.4" fill="#c8f400"/><rect x="818.7" y="251.3" width="3.4" height="3.4" fill="#0cb00c"/><rect x="820.1" y="253.9" width="3.4" height="3.4" fill="#86e400"/><rect x="821.5" y="256.6" width="3.4" height="3.4" fill="#34d000"/><rect x="822.9" y="259.2" width="3.4" height="3.4" fill="#c8f400"/><rect x="815.9" y="252.8" width="3.4" height="3.4" fill="#042c04"/><rect x="817.3" y="255.4" width="3.4" height="3.4" fill="#86e400"/><rect x="818.7" y="258.1" width="3.4" height="3.4" fill="#ecf800"/><rect x="813.1" y="254.3" width="3.4" height="3.4" fill="#86e400"/><rect x="814.5" y="256.9" width="3.4" height="3.4" fill="#86e400"/><rect x="815.9" y="259.6" width="3.4" height="3.4" fill="#c8f400"/><rect x="810.3" y="255.8" width="3.4" height="3.4" fill="#0cb00c"/><rect x="811.7" y="258.4" width="3.4" height="3.4" fill="#86e400"/><rect x="813.1" y="261.1" width="3.4" height="3.4" fill="#c8f400"/><rect x="814.5" y="263.7" width="3.4" height="3.4" fill="#ecf800"/><rect x="807.5" y="257.3" width="3.4" height="3.4" fill="#0cb00c"/><rect x="808.9" y="259.9" width="3.4" height="3.4" fill="#0cb00c"/><rect x="810.3" y="262.6" width="3.4" height="3.4" fill="#c8f400"/><rect x="811.7" y="265.2" width="3.4" height="3.4" fill="#ecf800"/><rect x="804.7" y="258.8" width="3.4" height="3.4" fill="#042c04"/><rect x="806.1" y="261.4" width="3.4" height="3.4" fill="#34d000"/><rect x="807.5" y="264.1" width="3.4" height="3.4" fill="#34d000"/><rect x="808.9" y="266.7" width="3.4" height="3.4" fill="#c8f400"/><rect x="801.9" y="260.3" width="3.4" height="3.4" fill="#042c04"/><rect x="803.3" y="262.9" width="3.4" height="3.4" fill="#0cb00c"/><rect x="804.7" y="265.6" width="3.4" height="3.4" fill="#86e400"/><rect x="799.1" y="261.8" width="3.4" height="3.4" fill="#087008"/><rect x="800.5" y="264.4" width="3.4" height="3.4" fill="#087008"/><rect x="801.9" y="267.1" width="3.4" height="3.4" fill="#c8f400"/><rect x="797.8" y="265.9" width="3.4" height="3.4" fill="#86e400"/><rect x="799.3" y="268.5" width="3.4" height="3.4" fill="#c8f400"/><rect x="800.8" y="271.1" width="3.4" height="3.4" fill="#c8f400"/><rect x="795.0" y="267.5" width="3.4" height="3.4" fill="#087008"/><rect x="796.5" y="270.1" width="3.4" height="3.4" fill="#087008"/><rect x="798.0" y="272.7" width="3.4" height="3.4" fill="#86e400"/><rect x="792.2" y="269.1" width="3.4" height="3.4" fill="#087008"/><rect x="793.7" y="271.7" width="3.4" height="3.4" fill="#087008"/><rect x="795.2" y="274.3" width="3.4" height="3.4" fill="#34d000"/><rect x="796.7" y="276.9" width="3.4" height="3.4" fill="#34d000"/><rect x="790.9" y="273.3" width="3.4" height="3.4" fill="#042c04"/><rect x="792.4" y="275.9" width="3.4" height="3.4" fill="#86e400"/><rect x="793.9" y="278.5" width="3.4" height="3.4" fill="#34d000"/><rect x="795.3" y="281.1" width="3.4" height="3.4" fill="#86e400"/><rect x="785.1" y="269.7" width="3.4" height="3.4" fill="#042c04"/><rect x="788.1" y="274.9" width="3.4" height="3.4" fill="#087008"/><rect x="789.6" y="277.5" width="3.4" height="3.4" fill="#86e400"/><rect x="791.1" y="280.1" width="3.4" height="3.4" fill="#86e400"/><rect x="785.3" y="276.5" width="3.4" height="3.4" fill="#042c04"/><rect x="786.8" y="279.1" width="3.4" height="3.4" fill="#087008"/><rect x="788.3" y="281.7" width="3.4" height="3.4" fill="#ecf800"/><rect x="782.5" y="278.1" width="3.4" height="3.4" fill="#042c04"/><rect x="784.0" y="280.7" width="3.4" height="3.4" fill="#087008"/><rect x="785.5" y="283.3" width="3.4" height="3.4" fill="#ecf800"/><rect x="786.9" y="285.9" width="3.4" height="3.4" fill="#86e400"/><rect x="788.4" y="288.5" width="3.4" height="3.4" fill="#c8f400"/><rect x="778.2" y="277.1" width="3.4" height="3.4" fill="#0cb00c"/><rect x="779.7" y="279.7" width="3.4" height="3.4" fill="#087008"/><rect x="781.2" y="282.3" width="3.4" height="3.4" fill="#c8f400"/><rect x="782.7" y="284.9" width="3.4" height="3.4" fill="#ecf800"/><rect x="776.9" y="281.3" width="3.4" height="3.4" fill="#34d000"/><rect x="778.4" y="283.9" width="3.4" height="3.4" fill="#c8f400"/><rect x="781.3" y="289.1" width="3.4" height="3.4" fill="#ecf800"/><rect x="771.1" y="277.7" width="3.4" height="3.4" fill="#042c04"/><rect x="772.6" y="280.3" width="3.4" height="3.4" fill="#0cb00c"/><rect x="774.1" y="282.9" width="3.4" height="3.4" fill="#34d000"/><rect x="775.6" y="285.5" width="3.4" height="3.4" fill="#c8f400"/><rect x="777.1" y="288.1" width="3.4" height="3.4" fill="#ecf800"/><rect x="778.5" y="290.7" width="3.4" height="3.4" fill="#ecf800"/>
<rect x="459.5" y="256.3" width="3.4" height="3.4" fill="#087008"/><rect x="459.7" y="259.3" width="3.4" height="3.4" fill="#042c04"/><rect x="460.3" y="268.3" width="3.4" height="3.4" fill="#042c04"/><rect x="460.5" y="271.3" width="3.4" height="3.4" fill="#042c04"/><rect x="460.7" y="274.3" width="3.4" height="3.4" fill="#0cb00c"/><rect x="460.9" y="277.3" width="3.4" height="3.4" fill="#34d000"/><rect x="461.1" y="280.3" width="3.4" height="3.4" fill="#0cb00c"/><rect x="461.3" y="283.3" width="3.4" height="3.4" fill="#86e400"/><rect x="461.5" y="286.3" width="3.4" height="3.4" fill="#86e400"/><rect x="462.3" y="253.1" width="3.4" height="3.4" fill="#0cb00c"/><rect x="462.5" y="256.1" width="3.4" height="3.4" fill="#042c04"/><rect x="462.7" y="259.1" width="3.4" height="3.4" fill="#042c04"/><rect x="462.9" y="262.1" width="3.4" height="3.4" fill="#042c04"/><rect x="463.3" y="268.1" width="3.4" height="3.4" fill="#0cb00c"/><rect x="463.5" y="271.1" width="3.4" height="3.4" fill="#0cb00c"/><rect x="463.7" y="274.1" width="3.4" height="3.4" fill="#34d000"/><rect x="463.9" y="277.1" width="3.4" height="3.4" fill="#0cb00c"/><rect x="464.1" y="280.1" width="3.4" height="3.4" fill="#c8f400"/><rect x="464.3" y="283.1" width="3.4" height="3.4" fill="#c8f400"/><rect x="464.5" y="286.1" width="3.4" height="3.4" fill="#ecf800"/><rect x="465.3" y="252.9" width="3.4" height="3.4" fill="#042c04"/><rect x="465.7" y="258.9" width="3.4" height="3.4" fill="#087008"/><rect x="466.1" y="264.9" width="3.4" height="3.4" fill="#042c04"/><rect x="466.3" y="267.9" width="3.4" height="3.4" fill="#087008"/><rect x="466.5" y="270.9" width="3.4" height="3.4" fill="#0cb00c"/><rect x="466.7" y="273.9" width="3.4" height="3.4" fill="#0cb00c"/><rect x="466.9" y="276.9" width="3.4" height="3.4" fill="#34d000"/><rect x="467.1" y="279.9" width="3.4" height="3.4" fill="#86e400"/><rect x="467.3" y="282.9" width="3.4" height="3.4" fill="#c8f400"/><rect x="468.9" y="261.7" width="3.4" height="3.4" fill="#042c04"/><rect x="469.1" y="264.7" width="3.4" height="3.4" fill="#087008"/><rect x="469.3" y="267.7" width="3.4" height="3.4" fill="#042c04"/><rect x="469.5" y="270.7" width="3.4" height="3.4" fill="#087008"/><rect x="469.7" y="273.7" width="3.4" height="3.4" fill="#34d000"/><rect x="469.9" y="276.7" width="3.4" height="3.4" fill="#86e400"/><rect x="470.1" y="279.7" width="3.4" height="3.4" fill="#86e400"/><rect x="470.3" y="282.7" width="3.4" height="3.4" fill="#ecf800"/><rect x="470.5" y="285.7" width="3.4" height="3.4" fill="#c8f400"/><rect x="471.7" y="258.5" width="3.4" height="3.4" fill="#087008"/><rect x="471.9" y="261.5" width="3.4" height="3.4" fill="#042c04"/><rect x="472.1" y="264.5" width="3.4" height="3.4" fill="#042c04"/><rect x="472.3" y="267.5" width="3.4" height="3.4" fill="#0cb00c"/><rect x="472.5" y="270.5" width="3.4" height="3.4" fill="#0cb00c"/><rect x="472.7" y="273.5" width="3.4" height="3.4" fill="#0cb00c"/><rect x="472.9" y="276.5" width="3.4" height="3.4" fill="#34d000"/><rect x="473.1" y="279.5" width="3.4" height="3.4" fill="#86e400"/><rect x="473.3" y="282.5" width="3.4" height="3.4" fill="#86e400"/><rect x="473.5" y="285.5" width="3.4" height="3.4" fill="#c8f400"/><rect x="474.7" y="258.3" width="3.4" height="3.4" fill="#087008"/><rect x="474.9" y="261.3" width="3.4" height="3.4" fill="#042c04"/><rect x="475.1" y="264.3" width="3.4" height="3.4" fill="#042c04"/><rect x="475.3" y="267.3" width="3.4" height="3.4" fill="#042c04"/><rect x="475.5" y="270.3" width="3.4" height="3.4" fill="#34d000"/><rect x="475.7" y="273.3" width="3.4" height="3.4" fill="#0cb00c"/><rect x="475.9" y="276.3" width="3.4" height="3.4" fill="#86e400"/><rect x="476.1" y="279.3" width="3.4" height="3.4" fill="#c8f400"/><rect x="476.3" y="282.3" width="3.4" height="3.4" fill="#86e400"/><rect x="476.5" y="285.3" width="3.4" height="3.4" fill="#ecf800"/><rect x="477.7" y="258.1" width="3.4" height="3.4" fill="#0cb00c"/><rect x="477.9" y="261.1" width="3.4" height="3.4" fill="#042c04"/><rect x="478.1" y="264.1" width="3.4" height="3.4" fill="#087008"/><rect x="478.3" y="267.1" width="3.4" height="3.4" fill="#087008"/><rect x="478.5" y="270.1" width="3.4" height="3.4" fill="#0cb00c"/><rect x="478.7" y="273.1" width="3.4" height="3.4" fill="#34d000"/><rect x="478.9" y="276.1" width="3.4" height="3.4" fill="#86e400"/><rect x="479.1" y="279.1" width="3.4" height="3.4" fill="#86e400"/><rect x="479.3" y="282.1" width="3.4" height="3.4" fill="#c8f400"/><rect x="479.5" y="285.1" width="3.4" height="3.4" fill="#c8f400"/><rect x="480.5" y="254.9" width="3.4" height="3.4" fill="#087008"/><rect x="480.7" y="257.9" width="3.4" height="3.4" fill="#0cb00c"/><rect x="481.1" y="263.9" width="3.4" height="3.4" fill="#087008"/><rect x="481.3" y="266.9" width="3.4" height="3.4" fill="#0cb00c"/><rect x="481.5" y="269.9" width="3.4" height="3.4" fill="#0cb00c"/><rect x="481.7" y="272.9" width="3.4" height="3.4" fill="#34d000"/><rect x="481.9" y="275.9" width="3.4" height="3.4" fill="#86e400"/><rect x="482.1" y="278.9" width="3.4" height="3.4" fill="#86e400"/><rect x="482.3" y="281.9" width="3.4" height="3.4" fill="#c8f400"/><rect x="482.5" y="284.9" width="3.4" height="3.4" fill="#c8f400"/><rect x="483.7" y="257.7" width="3.4" height="3.4" fill="#087008"/><rect x="484.1" y="263.7" width="3.4" height="3.4" fill="#042c04"/><rect x="484.3" y="266.7" width="3.4" height="3.4" fill="#087008"/><rect x="484.5" y="269.7" width="3.4" height="3.4" fill="#0cb00c"/><rect x="484.7" y="272.7" width="3.4" height="3.4" fill="#34d000"/><rect x="484.9" y="275.7" width="3.4" height="3.4" fill="#34d000"/><rect x="485.1" y="278.7" width="3.4" height="3.4" fill="#86e400"/><rect x="485.3" y="281.7" width="3.4" height="3.4" fill="#c8f400"/><rect x="486.5" y="254.5" width="3.4" height="3.4" fill="#042c04"/><rect x="486.7" y="257.5" width="3.4" height="3.4" fill="#087008"/><rect x="486.9" y="260.5" width="3.4" height="3.4" fill="#042c04"/><rect x="487.1" y="263.5" width="3.4" height="3.4" fill="#042c04"/><rect x="487.3" y="266.5" width="3.4" height="3.4" fill="#087008"/><rect x="487.5" y="269.5" width="3.4" height="3.4" fill="#0cb00c"/><rect x="487.7" y="272.5" width="3.4" height="3.4" fill="#34d000"/><rect x="487.9" y="275.5" width="3.4" height="3.4" fill="#34d000"/><rect x="488.1" y="278.5" width="3.4" height="3.4" fill="#c8f400"/><rect x="488.3" y="281.5" width="3.4" height="3.4" fill="#c8f400"/><rect x="488.5" y="284.5" width="3.4" height="3.4" fill="#ecf800"/><rect x="491.5" y="254.4" width="3.4" height="3.4" fill="#087008"/><rect x="491.2" y="257.3" width="3.4" height="3.4" fill="#042c04"/><rect x="490.9" y="260.3" width="3.4" height="3.4" fill="#042c04"/><rect x="490.3" y="266.3" width="3.4" height="3.4" fill="#087008"/><rect x="490.0" y="269.3" width="3.4" height="3.4" fill="#087008"/><rect x="489.7" y="272.3" width="3.4" height="3.4" fill="#0cb00c"/><rect x="489.4" y="275.3" width="3.4" height="3.4" fill="#0cb00c"/><rect x="489.1" y="278.2" width="3.4" height="3.4" fill="#86e400"/><rect x="488.8" y="281.2" width="3.4" height="3.4" fill="#86e400"/><rect x="488.5" y="284.2" width="3.4" height="3.4" fill="#c8f400"/><rect x="494.2" y="257.6" width="3.4" height="3.4" fill="#087008"/><rect x="493.6" y="263.6" width="3.4" height="3.4" fill="#042c04"/><rect x="493.3" y="266.6" width="3.4" height="3.4" fill="#087008"/><rect x="493.0" y="269.6" width="3.4" height="3.4" fill="#087008"/><rect x="492.7" y="272.6" width="3.4" height="3.4" fill="#34d000"/><rect x="492.4" y="275.6" width="3.4" height="3.4" fill="#34d000"/><rect x="492.1" y="278.5" width="3.4" height="3.4" fill="#34d000"/><rect x="491.8" y="281.5" width="3.4" height="3.4" fill="#86e400"/><rect x="491.5" y="284.5" width="3.4" height="3.4" fill="#c8f400"/><rect x="497.2" y="257.9" width="3.4" height="3.4" fill="#087008"/><rect x="496.6" y="263.9" width="3.4" height="3.4" fill="#087008"/><rect x="496.3" y="266.9" width="3.4" height="3.4" fill="#0cb00c"/><rect x="496.0" y="269.9" width="3.4" height="3.4" fill="#0cb00c"/><rect x="495.7" y="272.9" width="3.4" height="3.4" fill="#0cb00c"/><rect x="495.4" y="275.9" width="3.4" height="3.4" fill="#86e400"/><rect x="495.1" y="278.8" width="3.4" height="3.4" fill="#34d000"/><rect x="494.8" y="281.8" width="3.4" height="3.4" fill="#86e400"/><rect x="494.5" y="284.8" width="3.4" height="3.4" fill="#ecf800"/><rect x="500.5" y="255.3" width="3.4" height="3.4" fill="#087008"/><rect x="499.6" y="264.2" width="3.4" height="3.4" fill="#087008"/><rect x="499.3" y="267.2" width="3.4" height="3.4" fill="#042c04"/><rect x="499.0" y="270.2" width="3.4" height="3.4" fill="#0cb00c"/><rect x="498.7" y="273.2" width="3.4" height="3.4" fill="#34d000"/><rect x="498.4" y="276.2" width="3.4" height="3.4" fill="#34d000"/><rect x="498.1" y="279.1" width="3.4" height="3.4" fill="#86e400"/><rect x="497.8" y="282.1" width="3.4" height="3.4" fill="#86e400"/><rect x="504.1" y="249.6" width="3.4" height="3.4" fill="#042c04"/><rect x="503.5" y="255.6" width="3.4" height="3.4" fill="#042c04"/><rect x="503.2" y="258.5" width="3.4" height="3.4" fill="#0cb00c"/><rect x="502.3" y="267.5" width="3.4" height="3.4" fill="#087008"/><rect x="502.0" y="270.5" width="3.4" height="3.4" fill="#087008"/><rect x="501.7" y="273.5" width="3.4" height="3.4" fill="#0cb00c"/><rect x="501.4" y="276.5" width="3.4" height="3.4" fill="#86e400"/><rect x="501.1" y="279.4" width="3.4" height="3.4" fill="#86e400"/><rect x="500.8" y="282.4" width="3.4" height="3.4" fill="#86e400"/><rect x="500.5" y="285.4" width="3.4" height="3.4" fill="#ecf800"/><rect x="506.5" y="255.9" width="3.4" height="3.4" fill="#087008"/><rect x="506.2" y="258.8" width="3.4" height="3.4" fill="#087008"/><rect x="505.9" y="261.8" width="3.4" height="3.4" fill="#042c04"/><rect x="505.3" y="267.8" width="3.4" height="3.4" fill="#087008"/><rect x="505.0" y="270.8" width="3.4" height="3.4" fill="#0cb00c"/><rect x="504.7" y="273.8" width="3.4" height="3.4" fill="#34d000"/><rect x="504.4" y="276.8" width="3.4" height="3.4" fill="#34d000"/><rect x="504.1" y="279.7" width="3.4" height="3.4" fill="#34d000"/><rect x="503.8" y="282.7" width="3.4" height="3.4" fill="#c8f400"/><rect x="503.5" y="285.7" width="3.4" height="3.4" fill="#ecf800"/><rect x="508.9" y="262.1" width="3.4" height="3.4" fill="#042c04"/><rect x="508.6" y="265.1" width="3.4" height="3.4" fill="#087008"/><rect x="508.3" y="268.1" width="3.4" height="3.4" fill="#087008"/><rect x="508.0" y="271.1" width="3.4" height="3.4" fill="#0cb00c"/><rect x="507.7" y="274.1" width="3.4" height="3.4" fill="#34d000"/><rect x="507.4" y="277.1" width="3.4" height="3.4" fill="#86e400"/><rect x="507.1" y="280.0" width="3.4" height="3.4" fill="#86e400"/><rect x="506.8" y="283.0" width="3.4" height="3.4" fill="#c8f400"/><rect x="506.5" y="286.0" width="3.4" height="3.4" fill="#c8f400"/><rect x="512.5" y="256.5" width="3.4" height="3.4" fill="#0cb00c"/><rect x="511.3" y="268.4" width="3.4" height="3.4" fill="#042c04"/><rect x="511.0" y="271.4" width="3.4" height="3.4" fill="#042c04"/><rect x="510.7" y="274.4" width="3.4" height="3.4" fill="#0cb00c"/><rect x="510.4" y="277.4" width="3.4" height="3.4" fill="#0cb00c"/><rect x="510.1" y="280.3" width="3.4" height="3.4" fill="#34d000"/><rect x="509.8" y="283.3" width="3.4" height="3.4" fill="#34d000"/><rect x="509.5" y="286.3" width="3.4" height="3.4" fill="#ecf800"/><rect x="516.1" y="250.8" width="3.4" height="3.4" fill="#087008"/><rect x="515.8" y="253.8" width="3.4" height="3.4" fill="#042c04"/><rect x="514.3" y="268.7" width="3.4" height="3.4" fill="#087008"/><rect x="514.0" y="271.7" width="3.4" height="3.4" fill="#042c04"/><rect x="513.7" y="274.7" width="3.4" height="3.4" fill="#0cb00c"/><rect x="513.4" y="277.7" width="3.4" height="3.4" fill="#0cb00c"/><rect x="513.1" y="280.6" width="3.4" height="3.4" fill="#0cb00c"/><rect x="512.8" y="283.6" width="3.4" height="3.4" fill="#86e400"/><rect x="512.5" y="286.6" width="3.4" height="3.4" fill="#86e400"/><rect x="519.1" y="251.1" width="3.4" height="3.4" fill="#042c04"/><rect x="518.8" y="254.1" width="3.4" height="3.4" fill="#087008"/><rect x="518.5" y="257.1" width="3.4" height="3.4" fill="#087008"/><rect x="517.3" y="269.0" width="3.4" height="3.4" fill="#042c04"/><rect x="517.0" y="272.0" width="3.4" height="3.4" fill="#087008"/><rect x="516.7" y="275.0" width="3.4" height="3.4" fill="#042c04"/><rect x="516.4" y="278.0" width="3.4" height="3.4" fill="#0cb00c"/><rect x="516.1" y="280.9" width="3.4" height="3.4" fill="#34d000"/><rect x="515.8" y="283.9" width="3.4" height="3.4" fill="#86e400"/><rect x="515.5" y="286.9" width="3.4" height="3.4" fill="#86e400"/><rect x="523.6" y="254.7" width="3.4" height="3.4" fill="#087008"/><rect x="522.9" y="257.6" width="3.4" height="3.4" fill="#042c04"/><rect x="522.3" y="260.5" width="3.4" height="3.4" fill="#087008"/><rect x="521.0" y="266.4" width="3.4" height="3.4" fill="#042c04"/><rect x="520.3" y="269.3" width="3.4" height="3.4" fill="#042c04"/><rect x="519.6" y="272.2" width="3.4" height="3.4" fill="#042c04"/><rect x="519.0" y="275.2" width="3.4" height="3.4" fill="#0cb00c"/><rect x="518.3" y="278.1" width="3.4" height="3.4" fill="#0cb00c"/><rect x="517.7" y="281.0" width="3.4" height="3.4" fill="#0cb00c"/><rect x="517.0" y="283.9" width="3.4" height="3.4" fill="#86e400"/><rect x="516.3" y="286.9" width="3.4" height="3.4" fill="#86e400"/><rect x="526.7" y="255.4" width="3.4" height="3.4" fill="#087008"/><rect x="526.0" y="258.3" width="3.4" height="3.4" fill="#087008"/><rect x="525.4" y="261.2" width="3.4" height="3.4" fill="#042c04"/><rect x="524.1" y="267.1" width="3.4" height="3.4" fill="#087008"/><rect x="523.4" y="270.0" width="3.4" height="3.4" fill="#042c04"/><rect x="522.7" y="272.9" width="3.4" height="3.4" fill="#087008"/><rect x="522.1" y="275.9" width="3.4" height="3.4" fill="#0cb00c"/><rect x="521.4" y="278.8" width="3.4" height="3.4" fill="#34d000"/><rect x="520.8" y="281.7" width="3.4" height="3.4" fill="#86e400"/><rect x="520.1" y="284.6" width="3.4" height="3.4" fill="#86e400"/><rect x="519.4" y="287.6" width="3.4" height="3.4" fill="#ecf800"/><rect x="528.5" y="261.9" width="3.4" height="3.4" fill="#042c04"/><rect x="527.2" y="267.8" width="3.4" height="3.4" fill="#042c04"/><rect x="526.5" y="270.7" width="3.4" height="3.4" fill="#087008"/><rect x="525.8" y="273.6" width="3.4" height="3.4" fill="#087008"/><rect x="525.2" y="276.6" width="3.4" height="3.4" fill="#087008"/><rect x="524.5" y="279.5" width="3.4" height="3.4" fill="#0cb00c"/><rect x="523.9" y="282.4" width="3.4" height="3.4" fill="#34d000"/><rect x="523.2" y="285.3" width="3.4" height="3.4" fill="#86e400"/><rect x="522.5" y="288.3" width="3.4" height="3.4" fill="#ecf800"/><rect x="533.6" y="253.8" width="3.4" height="3.4" fill="#087008"/><rect x="532.2" y="259.7" width="3.4" height="3.4" fill="#087008"/><rect x="531.6" y="262.6" width="3.4" height="3.4" fill="#042c04"/><rect x="530.3" y="268.5" width="3.4" height="3.4" fill="#087008"/><rect x="529.6" y="271.4" width="3.4" height="3.4" fill="#087008"/><rect x="528.9" y="274.3" width="3.4" height="3.4" fill="#087008"/><rect x="528.3" y="277.3" width="3.4" height="3.4" fill="#0cb00c"/><rect x="527.6" y="280.2" width="3.4" height="3.4" fill="#0cb00c"/><rect x="527.0" y="283.1" width="3.4" height="3.4" fill="#c8f400"/><rect x="526.3" y="286.0" width="3.4" height="3.4" fill="#c8f400"/><rect x="525.6" y="289.0" width="3.4" height="3.4" fill="#ecf800"/><rect x="535.3" y="260.4" width="3.4" height="3.4" fill="#087008"/><rect x="533.4" y="269.2" width="3.4" height="3.4" fill="#042c04"/><rect x="532.7" y="272.1" width="3.4" height="3.4" fill="#042c04"/><rect x="532.0" y="275.0" width="3.4" height="3.4" fill="#087008"/><rect x="531.4" y="278.0" width="3.4" height="3.4" fill="#0cb00c"/><rect x="530.7" y="280.9" width="3.4" height="3.4" fill="#0cb00c"/><rect x="530.1" y="283.8" width="3.4" height="3.4" fill="#34d000"/><rect x="529.4" y="286.7" width="3.4" height="3.4" fill="#34d000"/><rect x="528.7" y="289.7" width="3.4" height="3.4" fill="#86e400"/><rect x="538.4" y="261.1" width="3.4" height="3.4" fill="#087008"/><rect x="537.8" y="264.0" width="3.4" height="3.4" fill="#042c04"/><rect x="535.8" y="272.8" width="3.4" height="3.4" fill="#042c04"/><rect x="535.1" y="275.7" width="3.4" height="3.4" fill="#087008"/><rect x="534.5" y="278.7" width="3.4" height="3.4" fill="#042c04"/><rect x="533.8" y="281.6" width="3.4" height="3.4" fill="#087008"/><rect x="533.2" y="284.5" width="3.4" height="3.4" fill="#34d000"/><rect x="532.5" y="287.4" width="3.4" height="3.4" fill="#34d000"/><rect x="531.8" y="290.4" width="3.4" height="3.4" fill="#86e400"/><rect x="542.2" y="258.9" width="3.4" height="3.4" fill="#042c04"/><rect x="540.9" y="264.7" width="3.4" height="3.4" fill="#042c04"/><rect x="538.9" y="273.5" width="3.4" height="3.4" fill="#042c04"/><rect x="538.2" y="276.4" width="3.4" height="3.4" fill="#042c04"/><rect x="537.6" y="279.4" width="3.4" height="3.4" fill="#0cb00c"/><rect x="536.9" y="282.3" width="3.4" height="3.4" fill="#0cb00c"/><rect x="536.3" y="285.2" width="3.4" height="3.4" fill="#34d000"/><rect x="535.6" y="288.1" width="3.4" height="3.4" fill="#c8f400"/><rect x="534.9" y="291.1" width="3.4" height="3.4" fill="#c8f400"/><rect x="545.3" y="259.6" width="3.4" height="3.4" fill="#087008"/><rect x="544.6" y="262.5" width="3.4" height="3.4" fill="#042c04"/><rect x="541.3" y="277.1" width="3.4" height="3.4" fill="#042c04"/><rect x="540.7" y="280.1" width="3.4" height="3.4" fill="#087008"/><rect x="540.0" y="283.0" width="3.4" height="3.4" fill="#0cb00c"/><rect x="539.4" y="285.9" width="3.4" height="3.4" fill="#34d000"/><rect x="538.7" y="288.8" width="3.4" height="3.4" fill="#86e400"/><rect x="538.0" y="291.8" width="3.4" height="3.4" fill="#c8f400"/><rect x="548.4" y="260.3" width="3.4" height="3.4" fill="#087008"/><rect x="547.1" y="266.1" width="3.4" height="3.4" fill="#042c04"/><rect x="543.8" y="280.8" width="3.4" height="3.4" fill="#087008"/><rect x="543.1" y="283.7" width="3.4" height="3.4" fill="#0cb00c"/><rect x="542.5" y="286.6" width="3.4" height="3.4" fill="#0cb00c"/><rect x="541.8" y="289.5" width="3.4" height="3.4" fill="#0cb00c"/><rect x="541.1" y="292.5" width="3.4" height="3.4" fill="#86e400"/><rect x="551.5" y="261.0" width="3.4" height="3.4" fill="#087008"/><rect x="550.8" y="263.9" width="3.4" height="3.4" fill="#0cb00c"/><rect x="550.2" y="266.8" width="3.4" height="3.4" fill="#042c04"/><rect x="547.5" y="278.5" width="3.4" height="3.4" fill="#042c04"/><rect x="546.9" y="281.5" width="3.4" height="3.4" fill="#087008"/><rect x="546.2" y="284.4" width="3.4" height="3.4" fill="#0cb00c"/><rect x="545.6" y="287.3" width="3.4" height="3.4" fill="#0cb00c"/><rect x="544.9" y="290.2" width="3.4" height="3.4" fill="#0cb00c"/><rect x="544.2" y="293.2" width="3.4" height="3.4" fill="#86e400"/><rect x="555.8" y="258.9" width="3.4" height="3.4" fill="#042c04"/><rect x="554.3" y="264.7" width="3.4" height="3.4" fill="#0cb00c"/><rect x="553.5" y="267.6" width="3.4" height="3.4" fill="#042c04"/><rect x="549.8" y="282.1" width="3.4" height="3.4" fill="#042c04"/><rect x="549.1" y="285.0" width="3.4" height="3.4" fill="#0cb00c"/><rect x="548.3" y="287.9" width="3.4" height="3.4" fill="#087008"/><rect x="547.6" y="290.8" width="3.4" height="3.4" fill="#34d000"/><rect x="546.8" y="293.7" width="3.4" height="3.4" fill="#34d000"/><rect x="557.9" y="262.5" width="3.4" height="3.4" fill="#042c04"/><rect x="556.5" y="268.3" width="3.4" height="3.4" fill="#087008"/><rect x="553.5" y="280.0" width="3.4" height="3.4" fill="#042c04"/><rect x="552.8" y="282.9" width="3.4" height="3.4" fill="#042c04"/><rect x="552.0" y="285.8" width="3.4" height="3.4" fill="#087008"/><rect x="551.3" y="288.7" width="3.4" height="3.4" fill="#0cb00c"/><rect x="550.5" y="291.6" width="3.4" height="3.4" fill="#34d000"/><rect x="549.8" y="294.5" width="3.4" height="3.4" fill="#c8f400"/><rect x="560.1" y="266.2" width="3.4" height="3.4" fill="#042c04"/><rect x="559.4" y="269.1" width="3.4" height="3.4" fill="#087008"/><rect x="555.7" y="283.6" width="3.4" height="3.4" fill="#087008"/><rect x="554.9" y="286.5" width="3.4" height="3.4" fill="#087008"/><rect x="554.2" y="289.4" width="3.4" height="3.4" fill="#0cb00c"/><rect x="553.5" y="292.3" width="3.4" height="3.4" fill="#34d000"/><rect x="552.7" y="295.2" width="3.4" height="3.4" fill="#86e400"/><rect x="562.3" y="269.8" width="3.4" height="3.4" fill="#042c04"/><rect x="558.6" y="284.4" width="3.4" height="3.4" fill="#087008"/><rect x="557.9" y="287.3" width="3.4" height="3.4" fill="#0cb00c"/><rect x="557.1" y="290.2" width="3.4" height="3.4" fill="#087008"/><rect x="556.4" y="293.1" width="3.4" height="3.4" fill="#34d000"/><rect x="555.7" y="296.0" width="3.4" height="3.4" fill="#34d000"/><rect x="565.3" y="270.6" width="3.4" height="3.4" fill="#087008"/><rect x="562.3" y="282.2" width="3.4" height="3.4" fill="#042c04"/><rect x="561.6" y="285.1" width="3.4" height="3.4" fill="#087008"/><rect x="560.8" y="288.0" width="3.4" height="3.4" fill="#0cb00c"/><rect x="560.1" y="290.9" width="3.4" height="3.4" fill="#34d000"/><rect x="559.3" y="293.8" width="3.4" height="3.4" fill="#34d000"/><rect x="558.6" y="296.7" width="3.4" height="3.4" fill="#86e400"/><rect x="569.7" y="265.5" width="3.4" height="3.4" fill="#087008"/><rect x="568.2" y="271.3" width="3.4" height="3.4" fill="#087008"/><rect x="566.0" y="280.1" width="3.4" height="3.4" fill="#042c04"/><rect x="565.2" y="283.0" width="3.4" height="3.4" fill="#042c04"/><rect x="564.5" y="285.9" width="3.4" height="3.4" fill="#087008"/><rect x="563.8" y="288.8" width="3.4" height="3.4" fill="#0cb00c"/><rect x="563.0" y="291.7" width="3.4" height="3.4" fill="#0cb00c"/><rect x="562.3" y="294.6" width="3.4" height="3.4" fill="#86e400"/><rect x="561.5" y="297.5" width="3.4" height="3.4" fill="#34d000"/><rect x="573.4" y="263.4" width="3.4" height="3.4" fill="#042c04"/><rect x="568.9" y="280.8" width="3.4" height="3.4" fill="#042c04"/><rect x="568.2" y="283.7" width="3.4" height="3.4" fill="#087008"/><rect x="567.4" y="286.6" width="3.4" height="3.4" fill="#087008"/><rect x="566.7" y="289.5" width="3.4" height="3.4" fill="#34d000"/><rect x="566.0" y="292.4" width="3.4" height="3.4" fill="#34d000"/><rect x="565.2" y="295.3" width="3.4" height="3.4" fill="#34d000"/><rect x="564.5" y="298.2" width="3.4" height="3.4" fill="#34d000"/><rect x="571.1" y="284.5" width="3.4" height="3.4" fill="#087008"/><rect x="570.4" y="287.4" width="3.4" height="3.4" fill="#042c04"/><rect x="569.6" y="290.3" width="3.4" height="3.4" fill="#087008"/><rect x="568.9" y="293.2" width="3.4" height="3.4" fill="#0cb00c"/><rect x="568.2" y="296.1" width="3.4" height="3.4" fill="#86e400"/><rect x="567.4" y="299.0" width="3.4" height="3.4" fill="#c8f400"/><rect x="578.5" y="267.8" width="3.4" height="3.4" fill="#0cb00c"/><rect x="577.0" y="273.6" width="3.4" height="3.4" fill="#042c04"/><rect x="574.8" y="282.3" width="3.4" height="3.4" fill="#042c04"/><rect x="573.3" y="288.1" width="3.4" height="3.4" fill="#042c04"/><rect x="572.6" y="291.0" width="3.4" height="3.4" fill="#0cb00c"/><rect x="571.8" y="293.9" width="3.4" height="3.4" fill="#34d000"/><rect x="571.1" y="296.8" width="3.4" height="3.4" fill="#0cb00c"/><rect x="570.3" y="299.7" width="3.4" height="3.4" fill="#34d000"/><rect x="581.4" y="268.5" width="3.4" height="3.4" fill="#0cb00c"/><rect x="580.0" y="274.3" width="3.4" height="3.4" fill="#087008"/><rect x="576.3" y="288.9" width="3.4" height="3.4" fill="#042c04"/><rect x="575.5" y="291.8" width="3.4" height="3.4" fill="#087008"/><rect x="574.8" y="294.7" width="3.4" height="3.4" fill="#34d000"/><rect x="574.0" y="297.6" width="3.4" height="3.4" fill="#86e400"/><rect x="573.3" y="300.5" width="3.4" height="3.4" fill="#86e400"/><rect x="585.1" y="266.4" width="3.4" height="3.4" fill="#042c04"/><rect x="582.9" y="275.1" width="3.4" height="3.4" fill="#087008"/><rect x="580.7" y="283.8" width="3.4" height="3.4" fill="#042c04"/><rect x="579.9" y="286.7" width="3.4" height="3.4" fill="#087008"/><rect x="579.2" y="289.6" width="3.4" height="3.4" fill="#0cb00c"/><rect x="578.4" y="292.5" width="3.4" height="3.4" fill="#0cb00c"/><rect x="577.7" y="295.4" width="3.4" height="3.4" fill="#34d000"/><rect x="577.0" y="298.3" width="3.4" height="3.4" fill="#0cb00c"/><rect x="576.2" y="301.2" width="3.4" height="3.4" fill="#34d000"/><rect x="586.6" y="272.9" width="3.4" height="3.4" fill="#087008"/><rect x="585.8" y="275.8" width="3.4" height="3.4" fill="#042c04"/><rect x="582.9" y="287.5" width="3.4" height="3.4" fill="#042c04"/><rect x="582.1" y="290.4" width="3.4" height="3.4" fill="#042c04"/><rect x="581.4" y="293.3" width="3.4" height="3.4" fill="#0cb00c"/><rect x="580.6" y="296.2" width="3.4" height="3.4" fill="#34d000"/><rect x="579.9" y="299.1" width="3.4" height="3.4" fill="#0cb00c"/><rect x="579.2" y="302.0" width="3.4" height="3.4" fill="#86e400"/><rect x="591.0" y="267.9" width="3.4" height="3.4" fill="#087008"/><rect x="589.5" y="273.7" width="3.4" height="3.4" fill="#042c04"/><rect x="588.8" y="276.6" width="3.4" height="3.4" fill="#042c04"/><rect x="585.8" y="288.2" width="3.4" height="3.4" fill="#087008"/><rect x="585.1" y="291.1" width="3.4" height="3.4" fill="#087008"/><rect x="584.3" y="294.0" width="3.4" height="3.4" fill="#087008"/><rect x="583.6" y="296.9" width="3.4" height="3.4" fill="#0cb00c"/><rect x="582.8" y="299.8" width="3.4" height="3.4" fill="#34d000"/><rect x="582.1" y="302.7" width="3.4" height="3.4" fill="#86e400"/><rect x="593.9" y="268.6" width="3.4" height="3.4" fill="#087008"/><rect x="593.2" y="271.5" width="3.4" height="3.4" fill="#087008"/><rect x="592.5" y="274.4" width="3.4" height="3.4" fill="#087008"/><rect x="588.0" y="291.9" width="3.4" height="3.4" fill="#042c04"/><rect x="587.3" y="294.8" width="3.4" height="3.4" fill="#087008"/><rect x="586.5" y="297.7" width="3.4" height="3.4" fill="#0cb00c"/><rect x="585.8" y="300.6" width="3.4" height="3.4" fill="#34d000"/><rect x="585.0" y="303.5" width="3.4" height="3.4" fill="#34d000"/><rect x="596.1" y="272.3" width="3.4" height="3.4" fill="#087008"/><rect x="594.7" y="278.1" width="3.4" height="3.4" fill="#042c04"/><rect x="591.7" y="289.7" width="3.4" height="3.4" fill="#042c04"/><rect x="590.9" y="292.6" width="3.4" height="3.4" fill="#087008"/><rect x="590.2" y="295.5" width="3.4" height="3.4" fill="#0cb00c"/><rect x="589.5" y="298.4" width="3.4" height="3.4" fill="#0cb00c"/><rect x="588.7" y="301.3" width="3.4" height="3.4" fill="#0cb00c"/><rect x="588.0" y="304.2" width="3.4" height="3.4" fill="#34d000"/><rect x="594.6" y="290.5" width="3.4" height="3.4" fill="#087008"/><rect x="593.9" y="293.4" width="3.4" height="3.4" fill="#0cb00c"/><rect x="593.1" y="296.3" width="3.4" height="3.4" fill="#087008"/><rect x="592.4" y="299.2" width="3.4" height="3.4" fill="#0cb00c"/><rect x="591.7" y="302.1" width="3.4" height="3.4" fill="#34d000"/><rect x="590.9" y="305.0" width="3.4" height="3.4" fill="#86e400"/><rect x="602.0" y="270.7" width="3.4" height="3.4" fill="#042c04"/><rect x="601.4" y="273.6" width="3.4" height="3.4" fill="#087008"/><rect x="597.7" y="291.2" width="3.4" height="3.4" fill="#042c04"/><rect x="597.1" y="294.2" width="3.4" height="3.4" fill="#042c04"/><rect x="596.5" y="297.1" width="3.4" height="3.4" fill="#042c04"/><rect x="595.8" y="300.0" width="3.4" height="3.4" fill="#0cb00c"/><rect x="595.2" y="303.0" width="3.4" height="3.4" fill="#34d000"/><rect x="594.6" y="305.9" width="3.4" height="3.4" fill="#34d000"/><rect x="604.9" y="271.3" width="3.4" height="3.4" fill="#087008"/><rect x="604.3" y="274.2" width="3.4" height="3.4" fill="#087008"/><rect x="603.1" y="280.1" width="3.4" height="3.4" fill="#042c04"/><rect x="600.6" y="291.9" width="3.4" height="3.4" fill="#087008"/><rect x="600.0" y="294.8" width="3.4" height="3.4" fill="#087008"/><rect x="599.4" y="297.7" width="3.4" height="3.4" fill="#0cb00c"/><rect x="598.8" y="300.7" width="3.4" height="3.4" fill="#34d000"/><rect x="598.2" y="303.6" width="3.4" height="3.4" fill="#86e400"/><rect x="597.6" y="306.5" width="3.4" height="3.4" fill="#34d000"/><rect x="606.7" y="277.8" width="3.4" height="3.4" fill="#042c04"/><rect x="606.1" y="280.7" width="3.4" height="3.4" fill="#0cb00c"/><rect x="603.0" y="295.4" width="3.4" height="3.4" fill="#087008"/><rect x="602.4" y="298.3" width="3.4" height="3.4" fill="#0cb00c"/><rect x="601.7" y="301.3" width="3.4" height="3.4" fill="#34d000"/><rect x="601.1" y="304.2" width="3.4" height="3.4" fill="#34d000"/><rect x="600.5" y="307.2" width="3.4" height="3.4" fill="#34d000"/><rect x="609.0" y="281.3" width="3.4" height="3.4" fill="#042c04"/><rect x="605.9" y="296.0" width="3.4" height="3.4" fill="#042c04"/><rect x="605.3" y="299.0" width="3.4" height="3.4" fill="#087008"/><rect x="604.7" y="301.9" width="3.4" height="3.4" fill="#087008"/><rect x="604.1" y="304.8" width="3.4" height="3.4" fill="#34d000"/><rect x="603.5" y="307.8" width="3.4" height="3.4" fill="#86e400"/><rect x="613.2" y="276.1" width="3.4" height="3.4" fill="#0cb00c"/><rect x="612.0" y="282.0" width="3.4" height="3.4" fill="#087008"/><rect x="609.5" y="293.7" width="3.4" height="3.4" fill="#042c04"/><rect x="608.9" y="296.6" width="3.4" height="3.4" fill="#042c04"/><rect x="608.3" y="299.6" width="3.4" height="3.4" fill="#042c04"/><rect x="607.6" y="302.5" width="3.4" height="3.4" fill="#087008"/><rect x="607.0" y="305.5" width="3.4" height="3.4" fill="#0cb00c"/><rect x="606.4" y="308.4" width="3.4" height="3.4" fill="#34d000"/><rect x="614.9" y="282.6" width="3.4" height="3.4" fill="#0cb00c"/><rect x="611.2" y="300.2" width="3.4" height="3.4" fill="#0cb00c"/><rect x="610.6" y="303.1" width="3.4" height="3.4" fill="#0cb00c"/><rect x="610.0" y="306.1" width="3.4" height="3.4" fill="#86e400"/><rect x="609.4" y="309.0" width="3.4" height="3.4" fill="#34d000"/><rect x="617.9" y="283.2" width="3.4" height="3.4" fill="#0cb00c"/><rect x="615.4" y="295.0" width="3.4" height="3.4" fill="#042c04"/><rect x="614.8" y="297.9" width="3.4" height="3.4" fill="#087008"/><rect x="614.2" y="300.8" width="3.4" height="3.4" fill="#0cb00c"/><rect x="613.6" y="303.8" width="3.4" height="3.4" fill="#087008"/><rect x="612.9" y="306.7" width="3.4" height="3.4" fill="#34d000"/><rect x="612.3" y="309.6" width="3.4" height="3.4" fill="#86e400"/><rect x="622.0" y="278.0" width="3.4" height="3.4" fill="#087008"/><rect x="620.8" y="283.8" width="3.4" height="3.4" fill="#042c04"/><rect x="618.4" y="295.6" width="3.4" height="3.4" fill="#042c04"/><rect x="617.7" y="298.5" width="3.4" height="3.4" fill="#042c04"/><rect x="617.1" y="301.4" width="3.4" height="3.4" fill="#0cb00c"/><rect x="616.5" y="304.4" width="3.4" height="3.4" fill="#0cb00c"/><rect x="615.9" y="307.3" width="3.4" height="3.4" fill="#34d000"/><rect x="615.3" y="310.3" width="3.4" height="3.4" fill="#86e400"/><rect x="624.4" y="281.5" width="3.4" height="3.4" fill="#042c04"/><rect x="623.8" y="284.4" width="3.4" height="3.4" fill="#087008"/><rect x="620.7" y="299.1" width="3.4" height="3.4" fill="#042c04"/><rect x="620.1" y="302.1" width="3.4" height="3.4" fill="#087008"/><rect x="619.5" y="305.0" width="3.4" height="3.4" fill="#087008"/><rect x="618.8" y="307.9" width="3.4" height="3.4" fill="#0cb00c"/><rect x="618.2" y="310.9" width="3.4" height="3.4" fill="#86e400"/><rect x="627.3" y="282.1" width="3.4" height="3.4" fill="#042c04"/><rect x="626.7" y="285.1" width="3.4" height="3.4" fill="#042c04"/><rect x="624.9" y="293.9" width="3.4" height="3.4" fill="#042c04"/><rect x="624.3" y="296.8" width="3.4" height="3.4" fill="#042c04"/><rect x="623.0" y="302.7" width="3.4" height="3.4" fill="#0cb00c"/><rect x="622.4" y="305.6" width="3.4" height="3.4" fill="#0cb00c"/><rect x="621.8" y="308.6" width="3.4" height="3.4" fill="#34d000"/><rect x="621.2" y="311.5" width="3.4" height="3.4" fill="#86e400"/><rect x="630.9" y="279.8" width="3.4" height="3.4" fill="#087008"/><rect x="629.7" y="285.7" width="3.4" height="3.4" fill="#042c04"/><rect x="627.2" y="297.4" width="3.4" height="3.4" fill="#087008"/><rect x="626.6" y="300.4" width="3.4" height="3.4" fill="#042c04"/><rect x="626.0" y="303.3" width="3.4" height="3.4" fill="#087008"/><rect x="625.4" y="306.2" width="3.4" height="3.4" fill="#087008"/><rect x="624.7" y="309.2" width="3.4" height="3.4" fill="#34d000"/><rect x="624.1" y="312.1" width="3.4" height="3.4" fill="#c8f400"/><rect x="633.2" y="283.4" width="3.4" height="3.4" fill="#042c04"/><rect x="632.6" y="286.3" width="3.4" height="3.4" fill="#0cb00c"/><rect x="629.5" y="301.0" width="3.4" height="3.4" fill="#042c04"/><rect x="628.9" y="303.9" width="3.4" height="3.4" fill="#087008"/><rect x="628.3" y="306.9" width="3.4" height="3.4" fill="#0cb00c"/><rect x="627.7" y="309.8" width="3.4" height="3.4" fill="#86e400"/><rect x="627.1" y="312.7" width="3.4" height="3.4" fill="#34d000"/><rect x="637.4" y="278.1" width="3.4" height="3.4" fill="#042c04"/><rect x="635.6" y="286.9" width="3.4" height="3.4" fill="#087008"/><rect x="633.7" y="295.7" width="3.4" height="3.4" fill="#042c04"/><rect x="633.1" y="298.7" width="3.4" height="3.4" fill="#042c04"/><rect x="632.5" y="301.6" width="3.4" height="3.4" fill="#042c04"/><rect x="631.9" y="304.5" width="3.4" height="3.4" fill="#087008"/><rect x="631.3" y="307.5" width="3.4" height="3.4" fill="#34d000"/><rect x="630.7" y="310.4" width="3.4" height="3.4" fill="#34d000"/><rect x="630.0" y="313.3" width="3.4" height="3.4" fill="#86e400"/><rect x="638.5" y="287.5" width="3.4" height="3.4" fill="#042c04"/><rect x="636.1" y="299.3" width="3.4" height="3.4" fill="#087008"/><rect x="635.4" y="302.2" width="3.4" height="3.4" fill="#0cb00c"/><rect x="634.8" y="305.2" width="3.4" height="3.4" fill="#0cb00c"/><rect x="634.2" y="308.1" width="3.4" height="3.4" fill="#0cb00c"/><rect x="633.6" y="311.0" width="3.4" height="3.4" fill="#86e400"/><rect x="633.0" y="314.0" width="3.4" height="3.4" fill="#c8f400"/><rect x="642.7" y="282.3" width="3.4" height="3.4" fill="#0cb00c"/><rect x="639.0" y="299.9" width="3.4" height="3.4" fill="#087008"/><rect x="638.4" y="302.8" width="3.4" height="3.4" fill="#087008"/><rect x="637.8" y="305.8" width="3.4" height="3.4" fill="#0cb00c"/><rect x="637.2" y="308.7" width="3.4" height="3.4" fill="#34d000"/><rect x="636.6" y="311.6" width="3.4" height="3.4" fill="#c8f400"/><rect x="635.9" y="314.6" width="3.4" height="3.4" fill="#86e400"/><rect x="644.4" y="288.8" width="3.4" height="3.4" fill="#0cb00c"/><rect x="642.6" y="297.6" width="3.4" height="3.4" fill="#042c04"/><rect x="642.0" y="300.5" width="3.4" height="3.4" fill="#087008"/><rect x="641.4" y="303.5" width="3.4" height="3.4" fill="#0cb00c"/><rect x="640.7" y="306.4" width="3.4" height="3.4" fill="#34d000"/><rect x="640.1" y="309.3" width="3.4" height="3.4" fill="#86e400"/><rect x="639.5" y="312.3" width="3.4" height="3.4" fill="#34d000"/><rect x="638.9" y="315.2" width="3.4" height="3.4" fill="#c8f400"/><rect x="648.6" y="283.5" width="3.4" height="3.4" fill="#0cb00c"/><rect x="647.4" y="289.4" width="3.4" height="3.4" fill="#042c04"/><rect x="645.5" y="298.2" width="3.4" height="3.4" fill="#042c04"/><rect x="644.9" y="301.1" width="3.4" height="3.4" fill="#042c04"/><rect x="644.3" y="304.1" width="3.4" height="3.4" fill="#087008"/><rect x="643.7" y="307.0" width="3.4" height="3.4" fill="#0cb00c"/><rect x="643.1" y="309.9" width="3.4" height="3.4" fill="#0cb00c"/><rect x="642.5" y="312.9" width="3.4" height="3.4" fill="#34d000"/><rect x="641.8" y="315.8" width="3.4" height="3.4" fill="#34d000"/><rect x="650.3" y="290.0" width="3.4" height="3.4" fill="#087008"/><rect x="648.5" y="298.8" width="3.4" height="3.4" fill="#042c04"/><rect x="647.9" y="301.8" width="3.4" height="3.4" fill="#042c04"/><rect x="647.3" y="304.7" width="3.4" height="3.4" fill="#042c04"/><rect x="646.6" y="307.6" width="3.4" height="3.4" fill="#0cb00c"/><rect x="646.0" y="310.6" width="3.4" height="3.4" fill="#34d000"/><rect x="645.4" y="313.5" width="3.4" height="3.4" fill="#34d000"/><rect x="644.8" y="316.4" width="3.4" height="3.4" fill="#86e400"/><rect x="653.3" y="290.6" width="3.4" height="3.4" fill="#087008"/><rect x="651.4" y="299.4" width="3.4" height="3.4" fill="#042c04"/><rect x="650.8" y="302.4" width="3.4" height="3.4" fill="#087008"/><rect x="650.2" y="305.3" width="3.4" height="3.4" fill="#087008"/><rect x="649.6" y="308.3" width="3.4" height="3.4" fill="#087008"/><rect x="649.0" y="311.2" width="3.4" height="3.4" fill="#34d000"/><rect x="648.4" y="314.1" width="3.4" height="3.4" fill="#86e400"/><rect x="647.7" y="317.1" width="3.4" height="3.4" fill="#34d000"/><rect x="658.1" y="282.4" width="3.4" height="3.4" fill="#087008"/><rect x="657.5" y="285.4" width="3.4" height="3.4" fill="#087008"/><rect x="654.4" y="300.1" width="3.4" height="3.4" fill="#042c04"/><rect x="653.8" y="303.0" width="3.4" height="3.4" fill="#042c04"/><rect x="653.2" y="305.9" width="3.4" height="3.4" fill="#087008"/><rect x="652.5" y="308.9" width="3.4" height="3.4" fill="#087008"/><rect x="651.9" y="311.8" width="3.4" height="3.4" fill="#0cb00c"/><rect x="651.3" y="314.7" width="3.4" height="3.4" fill="#34d000"/><rect x="650.7" y="317.7" width="3.4" height="3.4" fill="#34d000"/><rect x="656.7" y="303.6" width="3.4" height="3.4" fill="#042c04"/><rect x="656.1" y="306.6" width="3.4" height="3.4" fill="#087008"/><rect x="655.5" y="309.5" width="3.4" height="3.4" fill="#0cb00c"/><rect x="654.9" y="312.4" width="3.4" height="3.4" fill="#0cb00c"/><rect x="654.3" y="315.4" width="3.4" height="3.4" fill="#0cb00c"/><rect x="653.7" y="318.3" width="3.4" height="3.4" fill="#34d000"/><rect x="662.5" y="289.5" width="3.4" height="3.4" fill="#042c04"/><rect x="661.9" y="292.5" width="3.4" height="3.4" fill="#042c04"/><rect x="659.8" y="304.2" width="3.4" height="3.4" fill="#042c04"/><rect x="659.2" y="307.2" width="3.4" height="3.4" fill="#087008"/><rect x="658.7" y="310.1" width="3.4" height="3.4" fill="#0cb00c"/><rect x="658.1" y="313.1" width="3.4" height="3.4" fill="#0cb00c"/><rect x="657.6" y="316.0" width="3.4" height="3.4" fill="#34d000"/><rect x="657.0" y="319.0" width="3.4" height="3.4" fill="#86e400"/><rect x="663.4" y="301.9" width="3.4" height="3.4" fill="#042c04"/><rect x="662.8" y="304.8" width="3.4" height="3.4" fill="#042c04"/><rect x="662.3" y="307.8" width="3.4" height="3.4" fill="#0cb00c"/><rect x="661.7" y="310.7" width="3.4" height="3.4" fill="#087008"/><rect x="661.2" y="313.7" width="3.4" height="3.4" fill="#0cb00c"/><rect x="660.6" y="316.6" width="3.4" height="3.4" fill="#34d000"/><rect x="660.1" y="319.6" width="3.4" height="3.4" fill="#c8f400"/><rect x="669.7" y="284.7" width="3.4" height="3.4" fill="#0cb00c"/><rect x="668.1" y="293.6" width="3.4" height="3.4" fill="#087008"/><rect x="666.4" y="302.4" width="3.4" height="3.4" fill="#042c04"/><rect x="665.9" y="305.4" width="3.4" height="3.4" fill="#042c04"/><rect x="665.3" y="308.3" width="3.4" height="3.4" fill="#042c04"/><rect x="664.8" y="311.3" width="3.4" height="3.4" fill="#0cb00c"/><rect x="664.2" y="314.2" width="3.4" height="3.4" fill="#087008"/><rect x="663.7" y="317.2" width="3.4" height="3.4" fill="#34d000"/><rect x="663.2" y="320.1" width="3.4" height="3.4" fill="#34d000"/><rect x="671.2" y="294.2" width="3.4" height="3.4" fill="#087008"/><rect x="669.0" y="306.0" width="3.4" height="3.4" fill="#087008"/><rect x="668.4" y="308.9" width="3.4" height="3.4" fill="#087008"/><rect x="667.9" y="311.9" width="3.4" height="3.4" fill="#0cb00c"/><rect x="667.3" y="314.8" width="3.4" height="3.4" fill="#087008"/><rect x="666.8" y="317.8" width="3.4" height="3.4" fill="#34d000"/><rect x="666.2" y="320.7" width="3.4" height="3.4" fill="#86e400"/><rect x="674.8" y="291.8" width="3.4" height="3.4" fill="#087008"/><rect x="672.0" y="306.5" width="3.4" height="3.4" fill="#042c04"/><rect x="670.9" y="312.4" width="3.4" height="3.4" fill="#087008"/><rect x="670.4" y="315.4" width="3.4" height="3.4" fill="#0cb00c"/><rect x="669.8" y="318.3" width="3.4" height="3.4" fill="#0cb00c"/><rect x="669.3" y="321.3" width="3.4" height="3.4" fill="#86e400"/><rect x="677.3" y="295.3" width="3.4" height="3.4" fill="#087008"/><rect x="674.6" y="310.1" width="3.4" height="3.4" fill="#087008"/><rect x="674.0" y="313.0" width="3.4" height="3.4" fill="#087008"/><rect x="673.5" y="316.0" width="3.4" height="3.4" fill="#34d000"/><rect x="672.9" y="318.9" width="3.4" height="3.4" fill="#0cb00c"/><rect x="672.4" y="321.9" width="3.4" height="3.4" fill="#34d000"/><rect x="680.4" y="295.9" width="3.4" height="3.4" fill="#087008"/><rect x="677.6" y="310.6" width="3.4" height="3.4" fill="#042c04"/><rect x="677.1" y="313.6" width="3.4" height="3.4" fill="#0cb00c"/><rect x="676.5" y="316.5" width="3.4" height="3.4" fill="#0cb00c"/><rect x="676.0" y="319.5" width="3.4" height="3.4" fill="#86e400"/><rect x="675.4" y="322.4" width="3.4" height="3.4" fill="#86e400"/><rect x="684.0" y="293.5" width="3.4" height="3.4" fill="#087008"/><rect x="681.3" y="308.2" width="3.4" height="3.4" fill="#042c04"/><rect x="680.7" y="311.2" width="3.4" height="3.4" fill="#0cb00c"/><rect x="680.2" y="314.1" width="3.4" height="3.4" fill="#087008"/><rect x="679.6" y="317.1" width="3.4" height="3.4" fill="#34d000"/><rect x="679.1" y="320.0" width="3.4" height="3.4" fill="#34d000"/><rect x="678.5" y="323.0" width="3.4" height="3.4" fill="#86e400"/><rect x="686.5" y="297.0" width="3.4" height="3.4" fill="#087008"/><rect x="683.8" y="311.8" width="3.4" height="3.4" fill="#042c04"/><rect x="683.2" y="314.7" width="3.4" height="3.4" fill="#0cb00c"/><rect x="682.7" y="317.7" width="3.4" height="3.4" fill="#34d000"/><rect x="682.1" y="320.6" width="3.4" height="3.4" fill="#34d000"/><rect x="681.6" y="323.6" width="3.4" height="3.4" fill="#34d000"/><rect x="691.2" y="288.7" width="3.4" height="3.4" fill="#087008"/><rect x="690.7" y="291.7" width="3.4" height="3.4" fill="#042c04"/><rect x="689.6" y="297.6" width="3.4" height="3.4" fill="#042c04"/><rect x="686.8" y="312.3" width="3.4" height="3.4" fill="#042c04"/><rect x="686.3" y="315.3" width="3.4" height="3.4" fill="#042c04"/><rect x="685.7" y="318.2" width="3.4" height="3.4" fill="#0cb00c"/><rect x="685.2" y="321.2" width="3.4" height="3.4" fill="#34d000"/><rect x="684.7" y="324.1" width="3.4" height="3.4" fill="#34d000"/><rect x="692.7" y="298.2" width="3.4" height="3.4" fill="#087008"/><rect x="689.9" y="312.9" width="3.4" height="3.4" fill="#042c04"/><rect x="689.4" y="315.9" width="3.4" height="3.4" fill="#0cb00c"/><rect x="688.8" y="318.8" width="3.4" height="3.4" fill="#0cb00c"/><rect x="688.3" y="321.8" width="3.4" height="3.4" fill="#0cb00c"/><rect x="687.7" y="324.7" width="3.4" height="3.4" fill="#34d000"/><rect x="696.3" y="295.8" width="3.4" height="3.4" fill="#0cb00c"/><rect x="695.7" y="298.7" width="3.4" height="3.4" fill="#087008"/><rect x="694.1" y="307.6" width="3.4" height="3.4" fill="#042c04"/><rect x="693.5" y="310.5" width="3.4" height="3.4" fill="#087008"/><rect x="693.0" y="313.5" width="3.4" height="3.4" fill="#087008"/><rect x="692.4" y="316.4" width="3.4" height="3.4" fill="#087008"/><rect x="691.9" y="319.4" width="3.4" height="3.4" fill="#34d000"/><rect x="691.3" y="322.3" width="3.4" height="3.4" fill="#0cb00c"/><rect x="690.8" y="325.3" width="3.4" height="3.4" fill="#c8f400"/><rect x="698.8" y="299.3" width="3.4" height="3.4" fill="#042c04"/><rect x="697.2" y="308.2" width="3.4" height="3.4" fill="#042c04"/><rect x="696.6" y="311.1" width="3.4" height="3.4" fill="#042c04"/><rect x="696.1" y="314.1" width="3.4" height="3.4" fill="#042c04"/><rect x="695.5" y="317.0" width="3.4" height="3.4" fill="#087008"/><rect x="695.0" y="320.0" width="3.4" height="3.4" fill="#0cb00c"/><rect x="694.4" y="322.9" width="3.4" height="3.4" fill="#34d000"/><rect x="693.9" y="325.9" width="3.4" height="3.4" fill="#34d000"/><rect x="701.9" y="299.9" width="3.4" height="3.4" fill="#087008"/><rect x="699.1" y="314.6" width="3.4" height="3.4" fill="#087008"/><rect x="698.6" y="317.6" width="3.4" height="3.4" fill="#0cb00c"/><rect x="698.0" y="320.5" width="3.4" height="3.4" fill="#0cb00c"/><rect x="697.5" y="323.5" width="3.4" height="3.4" fill="#86e400"/><rect x="696.9" y="326.4" width="3.4" height="3.4" fill="#86e400"/><rect x="708.4" y="301.9" width="3.4" height="3.4" fill="#087008"/><rect x="699.9" y="314.3" width="3.4" height="3.4" fill="#087008"/><rect x="698.2" y="316.7" width="3.4" height="3.4" fill="#0cb00c"/><rect x="696.6" y="319.2" width="3.4" height="3.4" fill="#34d000"/><rect x="694.9" y="321.7" width="3.4" height="3.4" fill="#34d000"/><rect x="693.2" y="324.2" width="3.4" height="3.4" fill="#c8f400"/><rect x="704.1" y="313.5" width="3.4" height="3.4" fill="#087008"/><rect x="702.4" y="316.0" width="3.4" height="3.4" fill="#0cb00c"/><rect x="700.7" y="318.4" width="3.4" height="3.4" fill="#34d000"/><rect x="699.1" y="320.9" width="3.4" height="3.4" fill="#34d000"/><rect x="697.4" y="323.4" width="3.4" height="3.4" fill="#86e400"/><rect x="695.7" y="325.9" width="3.4" height="3.4" fill="#86e400"/><rect x="715.0" y="302.8" width="3.4" height="3.4" fill="#087008"/><rect x="713.4" y="305.3" width="3.4" height="3.4" fill="#0cb00c"/><rect x="708.3" y="312.7" width="3.4" height="3.4" fill="#042c04"/><rect x="706.6" y="315.2" width="3.4" height="3.4" fill="#042c04"/><rect x="704.9" y="317.7" width="3.4" height="3.4" fill="#087008"/><rect x="703.2" y="320.1" width="3.4" height="3.4" fill="#34d000"/><rect x="701.6" y="322.6" width="3.4" height="3.4" fill="#34d000"/><rect x="699.9" y="325.1" width="3.4" height="3.4" fill="#34d000"/><rect x="698.2" y="327.6" width="3.4" height="3.4" fill="#86e400"/><rect x="717.5" y="304.5" width="3.4" height="3.4" fill="#042c04"/><rect x="715.9" y="307.0" width="3.4" height="3.4" fill="#042c04"/><rect x="710.8" y="314.4" width="3.4" height="3.4" fill="#087008"/><rect x="709.1" y="316.9" width="3.4" height="3.4" fill="#087008"/><rect x="707.4" y="319.4" width="3.4" height="3.4" fill="#0cb00c"/><rect x="705.7" y="321.8" width="3.4" height="3.4" fill="#34d000"/><rect x="704.1" y="324.3" width="3.4" height="3.4" fill="#34d000"/><rect x="702.4" y="326.8" width="3.4" height="3.4" fill="#86e400"/><rect x="700.7" y="329.3" width="3.4" height="3.4" fill="#ecf800"/><rect x="720.0" y="306.2" width="3.4" height="3.4" fill="#087008"/><rect x="711.6" y="318.6" width="3.4" height="3.4" fill="#087008"/><rect x="709.9" y="321.1" width="3.4" height="3.4" fill="#0cb00c"/><rect x="708.2" y="323.5" width="3.4" height="3.4" fill="#0cb00c"/><rect x="706.6" y="326.0" width="3.4" height="3.4" fill="#0cb00c"/><rect x="704.9" y="328.5" width="3.4" height="3.4" fill="#34d000"/><rect x="703.2" y="331.0" width="3.4" height="3.4" fill="#34d000"/><rect x="722.5" y="307.9" width="3.4" height="3.4" fill="#042c04"/><rect x="720.9" y="310.4" width="3.4" height="3.4" fill="#0cb00c"/><rect x="717.5" y="315.3" width="3.4" height="3.4" fill="#042c04"/><rect x="715.8" y="317.8" width="3.4" height="3.4" fill="#042c04"/><rect x="714.1" y="320.3" width="3.4" height="3.4" fill="#042c04"/><rect x="712.4" y="322.8" width="3.4" height="3.4" fill="#0cb00c"/><rect x="710.7" y="325.2" width="3.4" height="3.4" fill="#0cb00c"/><rect x="709.1" y="327.7" width="3.4" height="3.4" fill="#34d000"/><rect x="707.4" y="330.2" width="3.4" height="3.4" fill="#34d000"/><rect x="705.7" y="332.7" width="3.4" height="3.4" fill="#ecf800"/><rect x="725.0" y="309.6" width="3.4" height="3.4" fill="#087008"/><rect x="723.4" y="312.1" width="3.4" height="3.4" fill="#042c04"/><rect x="716.6" y="322.0" width="3.4" height="3.4" fill="#042c04"/><rect x="714.9" y="324.5" width="3.4" height="3.4" fill="#087008"/><rect x="713.2" y="326.9" width="3.4" height="3.4" fill="#34d000"/><rect x="711.6" y="329.4" width="3.4" height="3.4" fill="#34d000"/><rect x="709.9" y="331.9" width="3.4" height="3.4" fill="#c8f400"/><rect x="708.2" y="334.4" width="3.4" height="3.4" fill="#34d000"/><rect x="729.2" y="308.8" width="3.4" height="3.4" fill="#042c04"/><rect x="727.5" y="311.3" width="3.4" height="3.4" fill="#042c04"/><rect x="722.5" y="318.7" width="3.4" height="3.4" fill="#042c04"/><rect x="719.1" y="323.7" width="3.4" height="3.4" fill="#087008"/><rect x="717.4" y="326.2" width="3.4" height="3.4" fill="#087008"/><rect x="715.7" y="328.6" width="3.4" height="3.4" fill="#087008"/><rect x="714.1" y="331.1" width="3.4" height="3.4" fill="#0cb00c"/><rect x="712.4" y="333.6" width="3.4" height="3.4" fill="#c8f400"/><rect x="710.7" y="336.1" width="3.4" height="3.4" fill="#c8f400"/><rect x="733.4" y="308.0" width="3.4" height="3.4" fill="#087008"/><rect x="731.7" y="310.5" width="3.4" height="3.4" fill="#042c04"/><rect x="728.4" y="315.5" width="3.4" height="3.4" fill="#087008"/><rect x="723.3" y="322.9" width="3.4" height="3.4" fill="#042c04"/><rect x="721.6" y="325.4" width="3.4" height="3.4" fill="#042c04"/><rect x="719.9" y="327.9" width="3.4" height="3.4" fill="#0cb00c"/><rect x="718.2" y="330.3" width="3.4" height="3.4" fill="#0cb00c"/><rect x="716.6" y="332.8" width="3.4" height="3.4" fill="#34d000"/><rect x="714.9" y="335.3" width="3.4" height="3.4" fill="#86e400"/><rect x="713.2" y="337.8" width="3.4" height="3.4" fill="#86e400"/><rect x="730.9" y="317.2" width="3.4" height="3.4" fill="#087008"/><rect x="724.1" y="327.1" width="3.4" height="3.4" fill="#087008"/><rect x="722.4" y="329.6" width="3.4" height="3.4" fill="#087008"/><rect x="720.7" y="332.0" width="3.4" height="3.4" fill="#34d000"/><rect x="719.1" y="334.5" width="3.4" height="3.4" fill="#34d000"/><rect x="717.4" y="337.0" width="3.4" height="3.4" fill="#86e400"/><rect x="715.7" y="339.5" width="3.4" height="3.4" fill="#c8f400"/><rect x="735.5" y="320.8" width="3.4" height="3.4" fill="#087008"/><rect x="730.7" y="324.5" width="3.4" height="3.4" fill="#042c04"/><rect x="728.3" y="326.3" width="3.4" height="3.4" fill="#087008"/><rect x="725.9" y="328.1" width="3.4" height="3.4" fill="#087008"/><rect x="723.5" y="329.9" width="3.4" height="3.4" fill="#087008"/><rect x="721.1" y="331.8" width="3.4" height="3.4" fill="#0cb00c"/><rect x="718.8" y="333.6" width="3.4" height="3.4" fill="#86e400"/><rect x="716.4" y="335.4" width="3.4" height="3.4" fill="#86e400"/><rect x="714.0" y="337.2" width="3.4" height="3.4" fill="#86e400"/><rect x="732.7" y="327.1" width="3.4" height="3.4" fill="#042c04"/><rect x="730.3" y="328.9" width="3.4" height="3.4" fill="#087008"/><rect x="727.9" y="330.7" width="3.4" height="3.4" fill="#087008"/><rect x="725.5" y="332.6" width="3.4" height="3.4" fill="#0cb00c"/><rect x="723.1" y="334.4" width="3.4" height="3.4" fill="#0cb00c"/><rect x="720.8" y="336.2" width="3.4" height="3.4" fill="#86e400"/><rect x="718.4" y="338.0" width="3.4" height="3.4" fill="#86e400"/><rect x="716.0" y="339.8" width="3.4" height="3.4" fill="#ecf800"/><rect x="739.5" y="326.1" width="3.4" height="3.4" fill="#087008"/><rect x="734.7" y="329.7" width="3.4" height="3.4" fill="#042c04"/><rect x="732.3" y="331.6" width="3.4" height="3.4" fill="#087008"/><rect x="729.9" y="333.4" width="3.4" height="3.4" fill="#087008"/><rect x="727.5" y="335.2" width="3.4" height="3.4" fill="#0cb00c"/><rect x="725.1" y="337.0" width="3.4" height="3.4" fill="#34d000"/><rect x="722.8" y="338.8" width="3.4" height="3.4" fill="#34d000"/><rect x="720.4" y="340.6" width="3.4" height="3.4" fill="#c8f400"/><rect x="718.0" y="342.5" width="3.4" height="3.4" fill="#c8f400"/><rect x="746.2" y="325.1" width="3.4" height="3.4" fill="#042c04"/><rect x="734.3" y="334.2" width="3.4" height="3.4" fill="#087008"/><rect x="731.9" y="336.0" width="3.4" height="3.4" fill="#042c04"/><rect x="729.5" y="337.8" width="3.4" height="3.4" fill="#087008"/><rect x="727.1" y="339.6" width="3.4" height="3.4" fill="#0cb00c"/><rect x="724.8" y="341.4" width="3.4" height="3.4" fill="#34d000"/><rect x="722.4" y="343.3" width="3.4" height="3.4" fill="#86e400"/><rect x="720.0" y="345.1" width="3.4" height="3.4" fill="#86e400"/><rect x="736.3" y="336.8" width="3.4" height="3.4" fill="#042c04"/><rect x="733.9" y="338.6" width="3.4" height="3.4" fill="#087008"/><rect x="731.5" y="340.4" width="3.4" height="3.4" fill="#042c04"/><rect x="729.1" y="342.3" width="3.4" height="3.4" fill="#087008"/><rect x="726.8" y="344.1" width="3.4" height="3.4" fill="#0cb00c"/><rect x="724.4" y="345.9" width="3.4" height="3.4" fill="#86e400"/><rect x="722.0" y="347.7" width="3.4" height="3.4" fill="#c8f400"/><rect x="738.3" y="339.4" width="3.4" height="3.4" fill="#042c04"/><rect x="735.9" y="341.2" width="3.4" height="3.4" fill="#042c04"/><rect x="733.5" y="343.1" width="3.4" height="3.4" fill="#087008"/><rect x="731.1" y="344.9" width="3.4" height="3.4" fill="#0cb00c"/><rect x="728.8" y="346.7" width="3.4" height="3.4" fill="#34d000"/><rect x="726.4" y="348.5" width="3.4" height="3.4" fill="#86e400"/><rect x="724.0" y="350.3" width="3.4" height="3.4" fill="#c8f400"/><rect x="742.7" y="340.2" width="3.4" height="3.4" fill="#042c04"/><rect x="737.9" y="343.9" width="3.4" height="3.4" fill="#087008"/><rect x="735.5" y="345.7" width="3.4" height="3.4" fill="#087008"/><rect x="733.1" y="347.5" width="3.4" height="3.4" fill="#0cb00c"/><rect x="730.8" y="349.3" width="3.4" height="3.4" fill="#0cb00c"/><rect x="728.4" y="351.1" width="3.4" height="3.4" fill="#86e400"/><rect x="726.0" y="353.0" width="3.4" height="3.4" fill="#86e400"/><rect x="751.8" y="337.4" width="3.4" height="3.4" fill="#087008"/><rect x="749.5" y="339.2" width="3.4" height="3.4" fill="#042c04"/><rect x="739.9" y="346.5" width="3.4" height="3.4" fill="#087008"/><rect x="737.5" y="348.3" width="3.4" height="3.4" fill="#0cb00c"/><rect x="735.1" y="350.1" width="3.4" height="3.4" fill="#86e400"/><rect x="732.8" y="351.9" width="3.4" height="3.4" fill="#86e400"/><rect x="730.4" y="353.8" width="3.4" height="3.4" fill="#c8f400"/><rect x="728.0" y="355.6" width="3.4" height="3.4" fill="#ecf800"/>
<polygon points="462.0,272.0 492.0,272.0 522.0,275.0 553.0,283.0 600.0,296.0 662.0,309.0 703.0,318.0 727.0,334.0 746.0,351.0 709.0,356.0 670.0,322.0 529.0,288.0 475.0,294.0" fill="#f6f200" filter="url(#bl2)" transform="translate(0 6)"/>
<rect x="474.0" y="145.0" width="2.7" height="3" fill="#064a06"/><rect x="473.8" y="147.8" width="2.7" height="3" fill="#18a818"/><rect x="476.2" y="147.8" width="2.2" height="3" fill="#064a06"/><rect x="473.7" y="150.6" width="2.7" height="3" fill="#18a818"/><rect x="476.1" y="150.6" width="2.2" height="3" fill="#064a06"/><rect x="473.5" y="153.4" width="2.7" height="3" fill="#38c818"/><rect x="475.9" y="153.4" width="2.2" height="3" fill="#0c7c0c"/><rect x="473.3" y="156.3" width="2.7" height="3" fill="#78e020"/><rect x="473.2" y="159.1" width="2.7" height="3" fill="#38c818"/><rect x="475.6" y="159.1" width="2.2" height="3" fill="#0c7c0c"/><rect x="478.6" y="144.6" width="2.7" height="3" fill="#0c7c0c"/><rect x="478.4" y="147.4" width="2.7" height="3" fill="#0c7c0c"/><rect x="480.8" y="147.4" width="2.2" height="3" fill="#064a06"/><rect x="478.3" y="150.2" width="2.7" height="3" fill="#38c818"/><rect x="480.7" y="150.2" width="2.2" height="3" fill="#0c7c0c"/><rect x="478.1" y="153.0" width="2.7" height="3" fill="#18a818"/><rect x="480.5" y="153.0" width="2.2" height="3" fill="#064a06"/><rect x="477.9" y="155.8" width="2.7" height="3" fill="#38c818"/><rect x="477.8" y="158.6" width="2.7" height="3" fill="#38c818"/><rect x="480.2" y="158.6" width="2.2" height="3" fill="#0c7c0c"/><rect x="477.6" y="161.4" width="2.7" height="3" fill="#78e020"/><rect x="480.0" y="161.4" width="2.2" height="3" fill="#18a818"/><rect x="483.2" y="144.1" width="2.7" height="3" fill="#18a818"/><rect x="483.0" y="147.0" width="2.7" height="3" fill="#0c7c0c"/><rect x="482.9" y="149.8" width="2.7" height="3" fill="#38c818"/><rect x="485.3" y="149.8" width="2.2" height="3" fill="#0c7c0c"/><rect x="482.7" y="152.7" width="2.7" height="3" fill="#38c818"/><rect x="482.5" y="155.5" width="2.7" height="3" fill="#38c818"/><rect x="484.9" y="155.5" width="2.2" height="3" fill="#0c7c0c"/><rect x="482.3" y="158.4" width="2.7" height="3" fill="#78e020"/><rect x="482.2" y="161.2" width="2.7" height="3" fill="#38c818"/><rect x="484.6" y="161.2" width="2.2" height="3" fill="#0c7c0c"/><rect x="482.0" y="164.1" width="2.7" height="3" fill="#78e020"/><rect x="484.4" y="164.1" width="2.2" height="3" fill="#18a818"/><rect x="487.8" y="143.7" width="2.7" height="3" fill="#0c7c0c"/><rect x="487.6" y="146.8" width="2.7" height="3" fill="#18a818"/><rect x="487.4" y="150.0" width="2.7" height="3" fill="#38c818"/><rect x="487.2" y="153.1" width="2.7" height="3" fill="#78e020"/><rect x="487.0" y="156.3" width="2.7" height="3" fill="#38c818"/><rect x="489.4" y="156.3" width="2.2" height="3" fill="#0c7c0c"/><rect x="486.9" y="159.4" width="2.7" height="3" fill="#78e020"/><rect x="489.3" y="159.4" width="2.2" height="3" fill="#18a818"/><rect x="492.4" y="143.2" width="2.7" height="3" fill="#064a06"/><rect x="494.8" y="143.2" width="2.2" height="3" fill="#064a06"/><rect x="492.2" y="146.2" width="2.7" height="3" fill="#18a818"/><rect x="492.0" y="149.2" width="2.7" height="3" fill="#18a818"/><rect x="494.4" y="149.2" width="2.2" height="3" fill="#064a06"/><rect x="491.9" y="152.2" width="2.7" height="3" fill="#18a818"/><rect x="491.7" y="155.2" width="2.7" height="3" fill="#38c818"/><rect x="491.5" y="158.2" width="2.7" height="3" fill="#38c818"/><rect x="493.9" y="158.2" width="2.2" height="3" fill="#0c7c0c"/><rect x="491.3" y="161.2" width="2.7" height="3" fill="#b8f020"/><rect x="493.7" y="161.2" width="2.2" height="3" fill="#38c818"/><rect x="497.0" y="142.8" width="2.7" height="3" fill="#0c7c0c"/><rect x="499.4" y="142.8" width="2.2" height="3" fill="#064a06"/><rect x="496.8" y="145.9" width="2.7" height="3" fill="#0c7c0c"/><rect x="496.6" y="149.0" width="2.7" height="3" fill="#0c7c0c"/><rect x="499.0" y="149.0" width="2.2" height="3" fill="#064a06"/><rect x="496.4" y="152.1" width="2.7" height="3" fill="#18a818"/><rect x="496.3" y="155.2" width="2.7" height="3" fill="#78e020"/><rect x="498.7" y="155.2" width="2.2" height="3" fill="#18a818"/><rect x="496.1" y="158.3" width="2.7" height="3" fill="#78e020"/><rect x="495.9" y="161.4" width="2.7" height="3" fill="#78e020"/><rect x="498.3" y="161.4" width="2.2" height="3" fill="#18a818"/><rect x="501.6" y="142.3" width="2.7" height="3" fill="#0c7c0c"/><rect x="504.0" y="142.3" width="2.2" height="3" fill="#064a06"/><rect x="501.4" y="145.3" width="2.7" height="3" fill="#0c7c0c"/><rect x="503.8" y="145.3" width="2.2" height="3" fill="#064a06"/><rect x="501.2" y="148.2" width="2.7" height="3" fill="#18a818"/><rect x="501.1" y="151.2" width="2.7" height="3" fill="#38c818"/><rect x="500.9" y="154.1" width="2.7" height="3" fill="#38c818"/><rect x="500.7" y="157.1" width="2.7" height="3" fill="#78e020"/><rect x="503.1" y="157.1" width="2.2" height="3" fill="#18a818"/><rect x="500.5" y="160.0" width="2.7" height="3" fill="#38c818"/><rect x="502.9" y="160.0" width="2.2" height="3" fill="#0c7c0c"/><rect x="506.2" y="141.8" width="2.7" height="3" fill="#064a06"/><rect x="508.6" y="141.8" width="2.2" height="3" fill="#064a06"/><rect x="506.0" y="144.9" width="2.7" height="3" fill="#0c7c0c"/><rect x="505.8" y="148.0" width="2.7" height="3" fill="#0c7c0c"/><rect x="505.6" y="151.1" width="2.7" height="3" fill="#18a818"/><rect x="508.0" y="151.1" width="2.2" height="3" fill="#064a06"/><rect x="505.5" y="154.2" width="2.7" height="3" fill="#78e020"/><rect x="507.9" y="154.2" width="2.2" height="3" fill="#18a818"/><rect x="505.3" y="157.3" width="2.7" height="3" fill="#38c818"/><rect x="507.7" y="157.3" width="2.2" height="3" fill="#0c7c0c"/><rect x="510.8" y="141.4" width="2.7" height="3" fill="#0c7c0c"/><rect x="510.6" y="144.4" width="2.7" height="3" fill="#0c7c0c"/><rect x="510.4" y="147.5" width="2.7" height="3" fill="#18a818"/><rect x="512.8" y="147.5" width="2.2" height="3" fill="#064a06"/><rect x="510.3" y="150.5" width="2.7" height="3" fill="#38c818"/><rect x="512.7" y="150.5" width="2.2" height="3" fill="#0c7c0c"/><rect x="510.1" y="153.5" width="2.7" height="3" fill="#18a818"/><rect x="512.5" y="153.5" width="2.2" height="3" fill="#064a06"/><rect x="509.9" y="156.5" width="2.7" height="3" fill="#78e020"/><rect x="509.7" y="159.6" width="2.7" height="3" fill="#b8f020"/><rect x="512.1" y="159.6" width="2.2" height="3" fill="#38c818"/>
<rect x="790.0" y="199.0" width="2.7" height="3" fill="#064a06"/><rect x="792.4" y="199.0" width="2.2" height="3" fill="#064a06"/><rect x="789.4" y="201.8" width="2.7" height="3" fill="#18a818"/><rect x="788.8" y="204.6" width="2.7" height="3" fill="#18a818"/><rect x="791.2" y="204.6" width="2.2" height="3" fill="#064a06"/><rect x="788.1" y="207.5" width="2.7" height="3" fill="#38c818"/><rect x="787.5" y="210.3" width="2.7" height="3" fill="#38c818"/><rect x="786.9" y="213.1" width="2.7" height="3" fill="#78e020"/><rect x="789.3" y="213.1" width="2.2" height="3" fill="#18a818"/><rect x="786.3" y="215.9" width="2.7" height="3" fill="#38c818"/><rect x="794.5" y="202.5" width="2.7" height="3" fill="#064a06"/><rect x="793.9" y="205.4" width="2.7" height="3" fill="#18a818"/><rect x="793.2" y="208.2" width="2.7" height="3" fill="#38c818"/><rect x="795.6" y="208.2" width="2.2" height="3" fill="#0c7c0c"/><rect x="792.6" y="211.1" width="2.7" height="3" fill="#18a818"/><rect x="795.0" y="211.1" width="2.2" height="3" fill="#064a06"/><rect x="792.0" y="214.0" width="2.7" height="3" fill="#78e020"/><rect x="794.4" y="214.0" width="2.2" height="3" fill="#18a818"/><rect x="791.3" y="216.9" width="2.7" height="3" fill="#38c818"/><rect x="793.7" y="216.9" width="2.2" height="3" fill="#0c7c0c"/><rect x="790.7" y="219.7" width="2.7" height="3" fill="#38c818"/><rect x="793.1" y="219.7" width="2.2" height="3" fill="#0c7c0c"/><rect x="799.0" y="206.0" width="2.7" height="3" fill="#064a06"/><rect x="801.4" y="206.0" width="2.2" height="3" fill="#064a06"/><rect x="798.3" y="209.1" width="2.7" height="3" fill="#18a818"/><rect x="800.7" y="209.1" width="2.2" height="3" fill="#064a06"/><rect x="797.6" y="212.2" width="2.7" height="3" fill="#38c818"/><rect x="797.0" y="215.3" width="2.7" height="3" fill="#38c818"/><rect x="796.3" y="218.4" width="2.7" height="3" fill="#78e020"/><rect x="795.6" y="221.5" width="2.7" height="3" fill="#38c818"/><rect x="798.0" y="221.5" width="2.2" height="3" fill="#0c7c0c"/><rect x="794.9" y="224.6" width="2.7" height="3" fill="#78e020"/><rect x="797.3" y="224.6" width="2.2" height="3" fill="#18a818"/><rect x="803.5" y="209.5" width="2.7" height="3" fill="#0c7c0c"/><rect x="805.9" y="209.5" width="2.2" height="3" fill="#064a06"/><rect x="802.9" y="212.4" width="2.7" height="3" fill="#0c7c0c"/><rect x="802.2" y="215.3" width="2.7" height="3" fill="#18a818"/><rect x="801.6" y="218.3" width="2.7" height="3" fill="#0c7c0c"/><rect x="804.0" y="218.3" width="2.2" height="3" fill="#064a06"/><rect x="800.9" y="221.2" width="2.7" height="3" fill="#38c818"/><rect x="803.3" y="221.2" width="2.2" height="3" fill="#0c7c0c"/><rect x="800.3" y="224.1" width="2.7" height="3" fill="#38c818"/><rect x="802.7" y="224.1" width="2.2" height="3" fill="#0c7c0c"/><rect x="799.6" y="227.0" width="2.7" height="3" fill="#38c818"/><rect x="802.0" y="227.0" width="2.2" height="3" fill="#0c7c0c"/><rect x="799.0" y="230.0" width="2.7" height="3" fill="#38c818"/><rect x="798.4" y="232.9" width="2.7" height="3" fill="#b8f020"/><rect x="808.0" y="213.0" width="2.7" height="3" fill="#18a818"/><rect x="807.4" y="215.8" width="2.7" height="3" fill="#18a818"/><rect x="806.7" y="218.7" width="2.7" height="3" fill="#18a818"/><rect x="809.1" y="218.7" width="2.2" height="3" fill="#064a06"/><rect x="806.1" y="221.5" width="2.7" height="3" fill="#18a818"/><rect x="805.5" y="224.4" width="2.7" height="3" fill="#18a818"/><rect x="804.9" y="227.2" width="2.7" height="3" fill="#38c818"/><rect x="804.2" y="230.1" width="2.7" height="3" fill="#78e020"/><rect x="806.6" y="230.1" width="2.2" height="3" fill="#18a818"/><rect x="803.6" y="232.9" width="2.7" height="3" fill="#38c818"/><rect x="806.0" y="232.9" width="2.2" height="3" fill="#0c7c0c"/><rect x="812.5" y="216.5" width="2.7" height="3" fill="#064a06"/><rect x="811.8" y="219.7" width="2.7" height="3" fill="#18a818"/><rect x="811.1" y="222.9" width="2.7" height="3" fill="#38c818"/><rect x="813.5" y="222.9" width="2.2" height="3" fill="#0c7c0c"/><rect x="810.4" y="226.1" width="2.7" height="3" fill="#78e020"/><rect x="809.7" y="229.3" width="2.7" height="3" fill="#38c818"/><rect x="812.1" y="229.3" width="2.2" height="3" fill="#0c7c0c"/><rect x="809.0" y="232.5" width="2.7" height="3" fill="#78e020"/><rect x="811.4" y="232.5" width="2.2" height="3" fill="#18a818"/><rect x="817.0" y="220.0" width="2.7" height="3" fill="#064a06"/><rect x="816.3" y="223.1" width="2.7" height="3" fill="#18a818"/><rect x="818.7" y="223.1" width="2.2" height="3" fill="#064a06"/><rect x="815.6" y="226.2" width="2.7" height="3" fill="#38c818"/><rect x="814.9" y="229.4" width="2.7" height="3" fill="#38c818"/><rect x="814.3" y="232.5" width="2.7" height="3" fill="#38c818"/><rect x="813.6" y="235.6" width="2.7" height="3" fill="#38c818"/><rect x="812.9" y="238.7" width="2.7" height="3" fill="#78e020"/><rect x="815.3" y="238.7" width="2.2" height="3" fill="#18a818"/><rect x="821.5" y="223.5" width="2.7" height="3" fill="#0c7c0c"/><rect x="820.9" y="226.3" width="2.7" height="3" fill="#18a818"/><rect x="823.3" y="226.3" width="2.2" height="3" fill="#064a06"/><rect x="820.3" y="229.2" width="2.7" height="3" fill="#0c7c0c"/><rect x="822.7" y="229.2" width="2.2" height="3" fill="#064a06"/><rect x="819.6" y="232.0" width="2.7" height="3" fill="#38c818"/><rect x="819.0" y="234.9" width="2.7" height="3" fill="#18a818"/><rect x="821.4" y="234.9" width="2.2" height="3" fill="#064a06"/><rect x="818.4" y="237.7" width="2.7" height="3" fill="#38c818"/><rect x="817.8" y="240.5" width="2.7" height="3" fill="#38c818"/><rect x="817.1" y="243.4" width="2.7" height="3" fill="#38c818"/><rect x="819.5" y="243.4" width="2.2" height="3" fill="#0c7c0c"/><rect x="816.5" y="246.2" width="2.7" height="3" fill="#78e020"/><rect x="818.9" y="246.2" width="2.2" height="3" fill="#18a818"/>
</g>
<polygon points="475.0,292.0 529.0,286.0 670.0,320.0 709.0,354.0 704.5,367.0 660.0,483.0 650.0,512.5 625.0,520.0 560.0,522.5 502.5,514.0 432.5,487.5 390.0,460.0 375.0,431.0 467.0,305.0" fill="url(#gfloor)"/>
<g clip-path="url(#cfloor)">
<ellipse cx="596" cy="322" rx="100" ry="20" transform="rotate(13 596 322)" fill="#ff2400" opacity=".7" filter="url(#bl5)"/>
<polyline points="475.0,292.0 529.0,286.0 670.0,320.0 709.0,354.0" fill="none" stroke="#ff9a18" stroke-width="9" opacity=".9" filter="url(#bl2)"/>
<rect x="370" y="280" width="345" height="250" fill="url(#nz)" opacity=".8"/>
</g>
<polygon points="455.0,305.0 466.5,305.0 375.0,431.0 390.0,460.0 432.5,487.5 502.5,514.0 468.0,505.0 422.0,484.0 385.0,456.0 363.5,436.5" fill="#000"/>
<rect x="455.0" y="305.0" width="3.2" height="3.2" fill="#22b422"/>
<rect x="458.0" y="305.0" width="3.2" height="3.2" fill="#0c6c0c"/>
<rect x="461.0" y="305.0" width="3.2" height="3.2" fill="#22b422"/>
<rect x="452.9" y="308.0" width="3.2" height="3.2" fill="#0c6c0c"/>
<rect x="455.9" y="308.0" width="3.2" height="3.2" fill="#16c416"/>
<rect x="453.8" y="311.0" width="3.2" height="3.2" fill="#0a8a0a"/>
<rect x="456.8" y="311.0" width="3.2" height="3.2" fill="#0c6c0c"/>
<rect x="459.8" y="311.0" width="3.2" height="3.2" fill="#22b422"/>
<rect x="448.7" y="314.0" width="3.2" height="3.2" fill="#22b422"/>
<rect x="454.7" y="314.0" width="3.2" height="3.2" fill="#0a8a0a"/>
<rect x="446.6" y="317.0" width="3.2" height="3.2" fill="#22b422"/>
<rect x="444.5" y="320.0" width="3.2" height="3.2" fill="#22b422"/>
<rect x="440.3" y="326.0" width="3.2" height="3.2" fill="#0a8a0a"/>
<polygon points="704.5,367.0 713.8,369.5 692.0,440.0 677.5,483.0 667.5,507.0 650.0,512.5 660.0,483.0" fill="#000"/>
<rect x="708" y="374" width="3" height="4" fill="#10a818"/>
<rect x="705" y="386" width="3" height="4" fill="#10a818"/>
<rect x="700" y="398" width="3" height="4" fill="#10a818"/>
<rect x="697" y="412" width="3" height="4" fill="#10a818"/>
<rect x="694" y="424" width="3" height="4" fill="#10a818"/>
<rect x="689" y="437" width="3" height="4" fill="#10a818"/>
<rect x="686" y="452" width="3" height="4" fill="#10a818"/>
<rect x="682" y="464" width="3" height="4" fill="#10a818"/>
<rect x="677" y="478" width="3" height="4" fill="#10a818"/>
<rect x="513" y="290.5" width="7" height="3" rx="1" fill="#fff"/>
<rect x="520" y="292" width="10" height="5" rx="1" fill="#fff"/>
<rect x="529" y="295" width="7" height="4.4" rx="1" fill="#fff"/>
<rect x="535" y="297" width="11" height="5.4" rx="1" fill="#fff"/>
<rect x="545" y="299.5" width="7" height="4.4" rx="1" fill="#fff"/>
<rect x="551" y="301.5" width="9" height="5" rx="1" fill="#fff"/>
<rect x="559" y="304" width="6" height="3.6" rx="1" fill="#fff"/>
<rect x="543" y="296" width="4" height="2.4" rx="1" fill="#fff"/>
<rect x="566" y="310" width="3.4" height="2.4" rx="1" fill="#fff"/>
<rect x="582" y="309" width="3.4" height="2.4" rx="1" fill="#fff"/>
<rect x="524" y="297" width="5" height="3" rx="1" fill="#fff"/>
<rect x="622" y="316.5" width="6" height="3.6" rx="1" fill="#fff"/>
<rect x="627" y="317.5" width="11" height="5.4" rx="1" fill="#fff"/>
<rect x="637" y="320.5" width="8" height="4.6" rx="1" fill="#fff"/>
<rect x="644" y="321.5" width="11" height="5.6" rx="1" fill="#fff"/>
<rect x="654" y="324.5" width="8" height="4.6" rx="1" fill="#fff"/>
<rect x="661" y="326.5" width="9" height="5.2" rx="1" fill="#fff"/>
<rect x="669" y="329" width="7" height="4" rx="1" fill="#fff"/>
<rect x="675" y="332" width="5" height="3.4" rx="1" fill="#fff"/>
<rect x="640" y="326" width="5" height="2.6" rx="1" fill="#fff"/>
<rect x="613" y="315" width="3.4" height="2.4" rx="1" fill="#fff"/>
<rect x="656" y="331" width="5" height="3" rx="1" fill="#fff"/>
<rect x="632" y="323" width="5" height="3" rx="1" fill="#fff"/>
<polyline points="574.0,132.0 597.5,132.0 660.0,139.5 720.0,156.0 777.0,181.0 826.0,215.0 865.5,257.0 888.5,312.0 895.0,362.0 877.0,410.0 868.4,424.0 819.5,483.0 739.0,525.5 637.5,552.0 560.0,554.0 527.0,554.5 422.5,533.0 337.5,491.0 280.0,440.0 265.0,395.0 257.5,365.0 252.5,322.5 257.5,303.0 274.0,266.0 307.5,221.0 356.0,186.0 411.0,159.0 471.0,141.0 534.0,133.0 574.0,132.0" fill="none" stroke="#fff" stroke-width="1.1" stroke-opacity="1" stroke-linejoin="round"/>
<polyline points="868.4,424.0 859.6,462.0 845.0,492.5 837.0,509.0 798.0,546.5 723.8,592.5 650.0,614.0 632.5,618.8 560.0,620.0 531.0,620.0 437.5,599.5 360.0,557.5 308.0,506.0 281.0,436.0" fill="none" stroke="#fff" stroke-width="1.2" stroke-opacity="1" stroke-linejoin="round"/>
<polyline points="337.5,491.0 360.0,557.5" fill="none" stroke="#fff" stroke-width="1.2" stroke-opacity="1" stroke-linejoin="round"/>
<polyline points="422.5,533.0 437.5,599.5" fill="none" stroke="#fff" stroke-width="1.2" stroke-opacity="1" stroke-linejoin="round"/>
<polyline points="527.0,554.5 531.0,620.0" fill="none" stroke="#fff" stroke-width="1.2" stroke-opacity="1" stroke-linejoin="round"/>
<polyline points="637.5,552.0 632.5,618.8" fill="none" stroke="#fff" stroke-width="1.2" stroke-opacity="1" stroke-linejoin="round"/>
<polyline points="739.0,525.5 723.8,592.5" fill="none" stroke="#fff" stroke-width="1.2" stroke-opacity="1" stroke-linejoin="round"/>
<polyline points="819.5,483.0 798.0,546.5" fill="none" stroke="#fff" stroke-width="1.2" stroke-opacity="1" stroke-linejoin="round"/>
<polyline points="868.0,425.0 845.0,492.5" fill="none" stroke="#fff" stroke-width="1.2" stroke-opacity="1" stroke-linejoin="round"/>
<polyline points="290.0,455.0 339.0,501.0 426.0,544.0 528.5,566.0" fill="none" stroke="#fff" stroke-width="1.1" stroke-opacity="1" stroke-linejoin="round"/>
<polyline points="298.0,472.0 345.0,517.0 430.0,560.0 529.5,581.5 560.0,581.5 615.0,579.4" fill="none" stroke="#fff" stroke-width="1.1" stroke-opacity="1" stroke-linejoin="round"/>
<polyline points="302.0,482.0 348.0,524.0 432.0,568.0 530.0,589.5 560.0,589.5 615.0,587.4" fill="none" stroke="#fff" stroke-width="1.1" stroke-opacity="1" stroke-linejoin="round"/>
<polyline points="528.5,566.0 560.0,566.0 636.6,564.0 736.2,538.0 815.0,496.0 857.0,444.0" fill="none" stroke="#fff" stroke-width="1.1" stroke-opacity="1" stroke-linejoin="round"/>
<polyline points="640.0,580.0 704.0,561.5" fill="none" stroke="#eee" stroke-width="0.9" stroke-opacity="1" stroke-linejoin="round"/>
<polyline points="640.0,588.0 704.0,569.5" fill="none" stroke="#eee" stroke-width="0.9" stroke-opacity="1" stroke-linejoin="round"/>
<polyline points="738.0,548.0 815.0,505.0" fill="none" stroke="#fff" stroke-width="1.1" stroke-opacity="1" stroke-linejoin="round"/>
<polyline points="737.0,556.0 800.0,520.0" fill="none" stroke="#fff" stroke-width="1.1" stroke-opacity="1" stroke-linejoin="round"/>
<polyline points="745.0,545.0 775.0,528.0" fill="none" stroke="#e8e040" stroke-width="1.2" stroke-opacity="1" stroke-linejoin="round"/>
<polyline points="356.0,192.5 450.0,253.8" fill="none" stroke="#fff" stroke-width="1.2" stroke-opacity="1" stroke-linejoin="round"/>
<polyline points="412.5,227.5 466.0,172.5" fill="none" stroke="#fff" stroke-width="1.2" stroke-opacity="1" stroke-linejoin="round"/>
<polyline points="276.0,262.0 390.0,332.0" fill="none" stroke="#fff" stroke-width="1.2" stroke-opacity="1" stroke-linejoin="round"/>
<polyline points="411.0,159.0 471.0,177.5" fill="none" stroke="#fff" stroke-width="1.2" stroke-opacity="1" stroke-linejoin="round"/>
<polyline points="267.0,395.0 292.0,440.0" fill="none" stroke="#fff" stroke-width="1.1" stroke-opacity="1" stroke-linejoin="round"/>
<polyline points="264.0,393.5 349.5,391.7" fill="none" stroke="#fff" stroke-width="1.1" stroke-opacity="0.9" stroke-linejoin="round"/>
<polyline points="292.0,440.0 344.0,390.4" fill="none" stroke="#fff" stroke-width="1.1" stroke-opacity="1" stroke-linejoin="round"/>
<polyline points="264.0,394.0 342.5,304.4" fill="none" stroke="#fff" stroke-width="1.1" stroke-opacity="0.9" stroke-linejoin="round"/>
<polyline points="484.5,217.0 473.0,235.0 344.0,390.4 358.0,424.0" fill="none" stroke="#fff" stroke-width="1.2" stroke-opacity="1" stroke-linejoin="round"/>
<polyline points="489.0,221.0 478.0,238.0 349.0,394.0 364.0,436.0" fill="none" stroke="#fff" stroke-width="1.2" stroke-opacity="1" stroke-linejoin="round"/>
<polyline points="486.5,236.0 462.0,270.0 455.0,282.0" fill="none" stroke="#fff" stroke-width="1.2" stroke-opacity="1" stroke-linejoin="round"/>
<polyline points="302.5,451.0 370.0,436.0" fill="none" stroke="#fff" stroke-width="1.1" stroke-opacity="1" stroke-linejoin="round"/>
<polyline points="365.0,501.0 406.0,480.0" fill="none" stroke="#fff" stroke-width="1.1" stroke-opacity="1" stroke-linejoin="round"/>
<polyline points="450.0,536.0 470.0,510.0" fill="none" stroke="#fff" stroke-width="1.1" stroke-opacity="1" stroke-linejoin="round"/>
<polyline points="541.0,550.0 545.0,524.0" fill="none" stroke="#fff" stroke-width="1.1" stroke-opacity="1" stroke-linejoin="round"/>
<polyline points="432.0,343.0 412.0,338.0" fill="none" stroke="#fff" stroke-width="1.1" stroke-opacity="1" stroke-linejoin="round"/>
<polyline points="406.0,377.0 386.0,371.0" fill="none" stroke="#fff" stroke-width="1.1" stroke-opacity="1" stroke-linejoin="round"/>
<polyline points="372.0,418.0 392.0,412.0" fill="none" stroke="#fff" stroke-width="1.1" stroke-opacity="1" stroke-linejoin="round"/>
<polyline points="636.0,551.0 625.5,520.5" fill="none" stroke="#fff" stroke-width="1.1" stroke-opacity="1" stroke-linejoin="round"/>
<polyline points="726.0,527.5 697.0,499.5" fill="none" stroke="#fff" stroke-width="1.1" stroke-opacity="1" stroke-linejoin="round"/>
<polyline points="697.0,499.5 715.5,440.0 735.0,372.0 747.0,349.0" fill="none" stroke="#fff" stroke-width="1.2" stroke-opacity="1" stroke-linejoin="round"/>
<polyline points="756.0,514.0 775.0,440.0 781.0,424.0" fill="none" stroke="#fff" stroke-width="1.1" stroke-opacity="1" stroke-linejoin="round"/>
<polyline points="722.0,424.0 870.0,420.0" fill="none" stroke="#fff" stroke-width="1.1" stroke-opacity="0.9" stroke-linejoin="round"/>
<polyline points="697.0,499.5 667.5,507.0" fill="none" stroke="#fff" stroke-width="1.1" stroke-opacity="1" stroke-linejoin="round"/>
<polyline points="753.0,330.0 888.0,313.0" fill="none" stroke="#fff" stroke-width="1.1" stroke-opacity="0.9" stroke-linejoin="round"/>
<polyline points="806.0,322.0 826.0,250.0 826.0,216.0" fill="none" stroke="#fff" stroke-width="1.1" stroke-opacity="1" stroke-linejoin="round"/>
<polyline points="826.0,250.0 866.0,258.0" fill="none" stroke="#fff" stroke-width="1.1" stroke-opacity="1" stroke-linejoin="round"/>
<polyline points="765.0,290.0 826.0,250.0" fill="none" stroke="#fff" stroke-width="1.2" stroke-opacity="1" stroke-linejoin="round"/>
<polyline points="818.0,250.0 826.0,250.0" fill="none" stroke="#fff" stroke-width="1.2" stroke-opacity="1" stroke-linejoin="round"/>
<polyline points="705.0,367.5 735.0,372.0" fill="none" stroke="#fff" stroke-width="1.1" stroke-opacity="1" stroke-linejoin="round"/>
<polyline points="688.0,415.0 715.0,428.0" fill="none" stroke="#fff" stroke-width="1.0" stroke-opacity="1" stroke-linejoin="round"/>
<polyline points="673.0,455.0 702.0,478.0" fill="none" stroke="#fff" stroke-width="1.0" stroke-opacity="1" stroke-linejoin="round"/>
<polyline points="660.0,485.0 670.0,500.0" fill="none" stroke="#fff" stroke-width="1.0" stroke-opacity="1" stroke-linejoin="round"/>
<polyline points="363.5,436.5 385.4,457.2 407.3,478.2 434.2,491.0 469.5,509.3 502.0,516.0 560.0,523.0 625.0,520.8 650.0,513.0" fill="none" stroke="#fff" stroke-width="1.1" stroke-opacity="1" stroke-linejoin="round"/>
<polyline points="572.0,348.0 521.0,440.0 484.0,502.0" fill="none" stroke="#fff" stroke-width="1.1" stroke-opacity="0.75" stroke-linejoin="round"/>
<polyline points="572.0,348.0 597.0,304.0" fill="none" stroke="#fff" stroke-width="1.1" stroke-opacity="0.75" stroke-linejoin="round"/>
<polyline points="585.0,330.0 540.0,420.0 520.0,470.0" fill="none" stroke="#fff" stroke-width="1.0" stroke-opacity="0.0" stroke-linejoin="round"/>
<polyline points="475.0,292.0 529.0,286.0 670.0,320.0 709.0,354.0" fill="none" stroke="#fff" stroke-width="1.1" stroke-opacity="0.7" stroke-linejoin="round"/>
<polyline points="471.0,152.0 534.0,143.5 560.0,142.5 597.0,144.0 659.5,151.0 719.0,167.0 775.0,191.0 822.0,224.0" fill="none" stroke="#fff" stroke-width="1.3" stroke-opacity="1" stroke-linejoin="round"/>
<polyline points="470.0,177.5 530.0,168.0 560.0,167.0 592.5,167.0 657.0,174.5 719.0,191.0 775.5,219.5 817.5,250.0" fill="none" stroke="#fff" stroke-width="1.3" stroke-opacity="1" stroke-linejoin="round"/>
<polyline points="484.0,215.0 535.0,206.0 560.0,205.0 589.5,204.5 641.0,211.0 690.0,226.0 735.0,250.0 769.0,277.0" fill="none" stroke="#fff" stroke-width="1.3" stroke-opacity="1" stroke-linejoin="round"/>
<polyline points="485.5,221.0 535.0,212.0 560.0,211.0 589.5,210.0 640.0,217.5 689.0,232.5 732.5,256.0 767.0,282.5" fill="none" stroke="#fff" stroke-width="1.3" stroke-opacity="1" stroke-linejoin="round"/>
<polyline points="534.0,133.0 534.0,143.5 530.0,168.0" fill="none" stroke="#fff" stroke-width="1.3" stroke-opacity="1" stroke-linejoin="round"/>
<polyline points="597.5,132.0 597.0,144.0 592.5,167.0" fill="none" stroke="#fff" stroke-width="1.3" stroke-opacity="1" stroke-linejoin="round"/>
<polyline points="660.0,139.5 659.5,151.0 657.0,174.5" fill="none" stroke="#fff" stroke-width="1.3" stroke-opacity="1" stroke-linejoin="round"/>
<polyline points="720.0,156.0 719.0,167.0 719.0,191.0" fill="none" stroke="#fff" stroke-width="1.3" stroke-opacity="1" stroke-linejoin="round"/>
<polyline points="777.0,181.0 775.0,191.0 775.5,219.5" fill="none" stroke="#fff" stroke-width="1.3" stroke-opacity="1" stroke-linejoin="round"/>
<polyline points="530.0,168.0 535.0,206.0 535.0,212.0 540.0,228.0" fill="none" stroke="#fff" stroke-width="1.3" stroke-opacity="1" stroke-linejoin="round"/>
<polyline points="592.5,167.0 589.5,204.5 589.5,210.0 585.0,229.5" fill="none" stroke="#fff" stroke-width="1.3" stroke-opacity="1" stroke-linejoin="round"/>
<polyline points="657.0,174.5 641.0,211.0 640.0,217.5" fill="none" stroke="#fff" stroke-width="1.3" stroke-opacity="1" stroke-linejoin="round"/>
<polyline points="719.0,191.0 690.0,226.0 689.0,232.5" fill="none" stroke="#fff" stroke-width="1.3" stroke-opacity="1" stroke-linejoin="round"/>
<polyline points="775.5,219.5 735.0,250.0 732.5,256.0" fill="none" stroke="#fff" stroke-width="1.3" stroke-opacity="1" stroke-linejoin="round"/>
<polyline points="486.5,235.0 540.0,228.0 585.0,229.5" fill="none" stroke="#fff" stroke-width="1.3" stroke-opacity="1" stroke-linejoin="round"/>
<polyline points="585.0,229.5 560.0,262.5" fill="none" stroke="#fff" stroke-width="1.3" stroke-opacity="1" stroke-linejoin="round"/>
<polyline points="640.0,217.5 636.0,243.0" fill="none" stroke="#fff" stroke-width="1.3" stroke-opacity="1" stroke-linejoin="round"/>
<polyline points="689.0,232.5 682.0,251.0 725.0,270.0 732.5,256.0" fill="none" stroke="#fff" stroke-width="1.3" stroke-opacity="1" stroke-linejoin="round"/>
<polyline points="486.5,236.0 520.0,272.0" fill="none" stroke="#fff" stroke-width="1.1" stroke-opacity="1" stroke-linejoin="round"/>
<polyline points="505.0,232.0 540.0,277.0" fill="none" stroke="#fff" stroke-width="1.1" stroke-opacity="1" stroke-linejoin="round"/>
<polyline points="540.0,228.0 553.0,278.0" fill="none" stroke="#fff" stroke-width="1.1" stroke-opacity="1" stroke-linejoin="round"/>
<polyline points="725.0,270.0 662.0,303.0" fill="none" stroke="#fff" stroke-width="1.1" stroke-opacity="1" stroke-linejoin="round"/>
<polyline points="767.0,282.5 705.0,311.0" fill="none" stroke="#fff" stroke-width="1.1" stroke-opacity="1" stroke-linejoin="round"/>
<polyline points="725.0,270.0 745.0,347.0" fill="none" stroke="#fff" stroke-width="1.1" stroke-opacity="1" stroke-linejoin="round"/>
<polyline points="682.0,251.0 665.0,286.0" fill="none" stroke="#fff" stroke-width="1.1" stroke-opacity="1" stroke-linejoin="round"/>
<polyline points="550.0,236.0 665.0,262.0 740.0,278.0" fill="none" stroke="#888" stroke-width="0.8" stroke-opacity="0.8" stroke-linejoin="round"/>
<polyline points="641.0,211.5 690.0,226.5" fill="none" stroke="#444" stroke-width="2.2" stroke-opacity="0.9" stroke-linejoin="round"/>
<polygon points="582.5,230.0 682.5,251.0 665.0,286.0 560.0,262.5" fill="#000" stroke="#fff" stroke-width="1"/>
<polygon points="560.0,262.5 665.0,286.0 661.0,301.0 555.5,276.5" fill="#000" stroke="#fff" stroke-width="0.9"/>
<polyline points="560.0,268.0 663.0,292.0" fill="none" stroke="#fff" stroke-width="1.0" stroke-opacity="0.8" stroke-linejoin="round"/>
<polygon points="539.5,225.0 546.1,226.2 546.1,244.2 539.5,243.0" fill="#e6e6e6" stroke="#fff" stroke-width="1.2"/><line x1="539.5" y1="228.6" x2="546.1" y2="229.8" stroke="#444" stroke-width="0.8"/><line x1="539.5" y1="232.2" x2="546.1" y2="233.4" stroke="#444" stroke-width="0.8"/><line x1="539.5" y1="235.8" x2="546.1" y2="237.0" stroke="#444" stroke-width="0.8"/><line x1="539.5" y1="239.4" x2="546.1" y2="240.6" stroke="#444" stroke-width="0.8"/>
<polygon points="551.0,228.0 557.6,229.6 557.6,246.6 551.0,245.0" fill="#e6e6e6" stroke="#fff" stroke-width="1.2"/><line x1="551.0" y1="231.4" x2="557.6" y2="233.0" stroke="#444" stroke-width="0.8"/><line x1="551.0" y1="234.8" x2="557.6" y2="236.4" stroke="#444" stroke-width="0.8"/><line x1="551.0" y1="238.2" x2="557.6" y2="239.8" stroke="#444" stroke-width="0.8"/><line x1="551.0" y1="241.6" x2="557.6" y2="243.2" stroke="#444" stroke-width="0.8"/>
<polygon points="663.0,252.5 669.8,253.9 669.8,271.4 663.0,270.0" fill="#e6e6e6" stroke="#fff" stroke-width="1.2"/><line x1="663.0" y1="256.0" x2="669.8" y2="257.4" stroke="#444" stroke-width="0.8"/><line x1="663.0" y1="259.5" x2="669.8" y2="260.9" stroke="#444" stroke-width="0.8"/><line x1="663.0" y1="263.0" x2="669.8" y2="264.4" stroke="#444" stroke-width="0.8"/><line x1="663.0" y1="266.5" x2="669.8" y2="267.9" stroke="#444" stroke-width="0.8"/>
<polygon points="675.5,256.0 682.3,257.6 682.3,276.1 675.5,274.5" fill="#e6e6e6" stroke="#fff" stroke-width="1.2"/><line x1="675.5" y1="259.7" x2="682.3" y2="261.3" stroke="#444" stroke-width="0.8"/><line x1="675.5" y1="263.4" x2="682.3" y2="265.0" stroke="#444" stroke-width="0.8"/><line x1="675.5" y1="267.1" x2="682.3" y2="268.7" stroke="#444" stroke-width="0.8"/><line x1="675.5" y1="270.8" x2="682.3" y2="272.4" stroke="#444" stroke-width="0.8"/>
<polygon points="531.5,210.5 535.9,211.1 535.9,219.1 531.5,218.5" fill="#e6e6e6" stroke="#fff" stroke-width="1.2"/>
<polygon points="702.5,248.0 707.5,248.6 707.5,257.6 702.5,257.0" fill="#e6e6e6" stroke="#fff" stroke-width="1.2"/>
<polygon points="606.0,241.0 611.6,241.8 611.6,246.4 606.0,245.6" fill="#e6e6e6" stroke="#fff" stroke-width="1.2"/>
<polygon points="554.0,275.0 566.0,277.4 566.0,288.4 554.0,286.0" fill="#e6e6e6" stroke="#fff" stroke-width="1.2"/><line x1="554.0" y1="280.5" x2="566.0" y2="282.9" stroke="#444" stroke-width="0.8"/><line x1="560" y1="276" x2="560" y2="288.5" stroke="#fff" stroke-width=".8"/>
<polygon points="646.5,297.5 659.0,299.9 659.0,310.9 646.5,308.5" fill="#e6e6e6" stroke="#fff" stroke-width="1.2"/><line x1="646.5" y1="303.0" x2="659.0" y2="305.4" stroke="#444" stroke-width="0.8"/><line x1="652.8" y1="298.8" x2="652.8" y2="311" stroke="#fff" stroke-width=".8"/>
<rect x="561" y="270.5" width="3.6" height="2.2" fill="#ddd"/>
<rect x="583" y="275.5" width="3.6" height="2.2" fill="#ddd"/>
<rect x="606" y="281" width="3.6" height="2.2" fill="#ddd"/>
<rect x="629.5" y="286" width="3.6" height="2.2" fill="#ddd"/>
<rect x="653" y="291.5" width="3.6" height="2.2" fill="#ddd"/>
<line x1="426" y1="317" x2="445" y2="322" stroke="#b01818" stroke-width="1.6"/>
<line x1="694" y1="392" x2="729" y2="398.5" stroke="#b01818" stroke-width="1"/>
<line x1="572.4" y1="23" x2="572.4" y2="348" stroke="#2a6cd6" stroke-width="3"/>
</g></svg>
<div id="ui">
<div style="position:absolute;left:0.00px;top:0.00px;width:1424.00px;height:22.00px;background:#fdfdfd;"></div>
<div style="position:absolute;left:3.00px;top:22.00px;width:1421.00px;height:1.30px;background:#666;"></div>
<div style="position:absolute;left:0.00px;top:23.30px;width:138.00px;height:667.50px;background:#fcfcfc;"></div>
<span class="t" style="top:29.89px;font-size:11px;line-height:14px;color:#383838;left:8.00px;">Length: m</span>
<span class="t" style="top:47.69px;font-size:11px;line-height:14px;color:#383838;left:8.00px;">Weight: kg</span>
<span class="t" style="top:65.69px;font-size:11px;line-height:14px;color:#383838;left:8.00px;">Delay: ms</span>
<span class="t" style="top:83.69px;font-size:11px;line-height:14px;color:#383838;left:8.00px;">Scale: 1/1</span>
<span class="t" style="top:106.89px;font-size:11px;line-height:14px;color:#383838;left:8.00px;">Air absorp.: ON</span>
<span class="t" style="top:124.89px;font-size:11px;line-height:14px;color:#383838;left:8.00px;">20°C / 40%</span>
<span class="t" style="top:147.69px;font-size:11px;line-height:14px;color:#383838;left:8.00px;">1000 - 10000 Hz</span>
<span class="t" style="top:170.39px;font-size:11px;line-height:14px;color:#383838;left:8.00px;">dB SPL scale</span>
<div style="position:absolute;left:8.00px;top:187.00px;width:18.00px;height:498.00px;box-sizing:border-box;border:1px solid #555;background:linear-gradient(#fff 0,#fff 3.6%,#ff0000 3.7%,#ff0a00 6%,#ff3c00 19.5%,#ff8a00 35%,#ffd200 51%,#e6e000 57%,#7ee000 66.5%,#14e000 78%,#00d800 82%,#007c00 90%,#001a00 96.5%,#000 100%);"></div>
<span class="t" style="top:188.49px;font-size:11px;line-height:14px;color:#383838;left:31.00px;">&gt; 108</span>
<span class="t" style="top:274.49px;font-size:11px;line-height:14px;color:#383838;left:31.00px;">105</span>
<span class="t" style="top:351.79px;font-size:11px;line-height:14px;color:#383838;left:31.00px;">102</span>
<span class="t" style="top:428.99px;font-size:11px;line-height:14px;color:#383838;left:31.00px;">99</span>
<span class="t" style="top:505.99px;font-size:11px;line-height:14px;color:#383838;left:31.00px;">96</span>
<span class="t" style="top:583.89px;font-size:11px;line-height:14px;color:#383838;left:31.00px;">93</span>
<span class="t" style="top:669.79px;font-size:11px;line-height:14px;color:#383838;left:31.00px;">&lt; 90</span>
<div style="position:absolute;left:3.00px;top:690.60px;width:1003.00px;height:1.20px;background:#666;"></div>
<div style="position:absolute;left:138.00px;top:23.00px;width:1.40px;height:668.00px;background:#707070;"></div>
<div style="position:absolute;left:1005.20px;top:23.00px;width:1.20px;height:668.00px;background:#666;"></div>
<div style="position:absolute;left:1011.00px;top:22.00px;width:420.00px;height:270.00px;box-sizing:border-box;border:1px solid #6a6a6a;background:#fcfcfc;"></div><div style="position:absolute;left:1012.00px;top:23.30px;width:418.00px;height:17.80px;background:#ededed;"></div><div style="position:absolute;left:1011.00px;top:40.90px;width:420.00px;height:1.20px;background:#6a6a6a;"></div><span class="t" style="top:25.09px;font-size:11px;line-height:14px;color:#777;left:1018.00px;letter-spacing:.22px;">3D ROOM DATA</span>
<div style="position:absolute;left:1011.00px;top:72.30px;width:413.00px;height:1.20px;background:#6a6a6a;"></div>
<svg style="left:1020.00px;top:47.30px" width="15" height="19" viewBox="0 0 15 19"><path d="M0.9 0.9H9.6L14.1 5.4V18.1H0.9Z" fill="#fff" stroke="#555" stroke-width="1.6" stroke-linejoin="round"/><path d="M9.6 0.9V5.4H14.1" fill="none" stroke="#555" stroke-width="1.2"/></svg>
<svg style="left:1047.00px;top:47.30px" width="20" height="19" viewBox="0 0 20 19"><path d="M1 18V1.2H7.2L8.6 4H15V8" fill="#8a7752" stroke="#555" stroke-width="1.5" stroke-linejoin="round"/><path d="M1 18L4.2 7.2H19.2L15.8 18Z" fill="#fff" stroke="#555" stroke-width="1.6" stroke-linejoin="round"/></svg>
<svg style="left:1071.00px;top:54.20px" width="7" height="6" viewBox="0 0 7 6"><path d="M0 0H7L3.5 6Z" fill="#bdbdbd"/></svg>
<svg style="left:1088.00px;top:47.30px" width="20" height="19" viewBox="0 0 20 19"><path d="M1 1H19V18H3L1 16Z" fill="#7a7a7a" stroke="#555" stroke-width="1.4" stroke-linejoin="round"/><rect x="4.6" y="0.8" width="10.8" height="7.6" fill="#fff"/><rect x="4.4" y="11.6" width="11.4" height="5.8" fill="#fff"/><rect x="11.6" y="12.4" width="3.4" height="4.6" fill="#8a7752"/></svg>
<svg style="left:1112.50px;top:54.20px" width="7" height="6" viewBox="0 0 7 6"><path d="M0 0H7L3.5 6Z" fill="#bdbdbd"/></svg>
<div style="position:absolute;left:1126.00px;top:44.00px;width:1.30px;height:26.00px;background:#555;"></div>
<svg style="left:1134.00px;top:47.30px" width="20" height="19" viewBox="0 0 20 19"><path d="M1 18V1.2H7.2L8.6 4H15V8" fill="#8a7752" stroke="#555" stroke-width="1.5" stroke-linejoin="round"/><path d="M1.6 18L3.6 7.2H19.2L17.2 18Z" fill="#fff" stroke="#555" stroke-width="1.6" stroke-linejoin="round"/><path d="M10.6 9.2V15.6M7.8 13L10.6 15.8L13.4 13" fill="none" stroke="#2a86c8" stroke-width="1.7"/></svg>
<div style="position:absolute;left:1161.00px;top:44.00px;width:1.30px;height:26.00px;background:#555;"></div>
<svg style="left:1169.50px;top:48.50px" width="20" height="17" viewBox="0 0 20 17"><path d="M8.2 1.5L1.8 7.2L8.2 12.8M2.2 7.2H13.5Q18.2 7.2 18.2 12V16" fill="none" stroke="#8a6b36" stroke-width="2.3" stroke-linecap="round" stroke-linejoin="round"/></svg>
<svg style="left:1193.00px;top:54.20px" width="7" height="6" viewBox="0 0 7 6"><path d="M0 0H7L3.5 6Z" fill="#444"/></svg>
<svg style="left:1209.50px;top:48.50px" width="20" height="17" viewBox="0 0 20 17"><path d="M11.8 1.5L18.2 7.2L11.8 12.8M17.8 7.2H6.5Q1.8 7.2 1.8 12V16" fill="none" stroke="#ddd8ce" stroke-width="2.3" stroke-linecap="round" stroke-linejoin="round"/></svg>
<svg style="left:1233.80px;top:54.20px" width="7" height="6" viewBox="0 0 7 6"><path d="M0 0H7L3.5 6Z" fill="#bdbdbd"/></svg>
<div style="position:absolute;left:1248.00px;top:44.00px;width:1.30px;height:26.00px;background:#555;"></div>
<svg style="left:1255.50px;top:47.00px" width="20" height="20" viewBox="0 0 20 20"><circle cx="10.4" cy="9.6" r="9.4" fill="#444"/><path d="M3.2 14.5L0.6 19.6L8 18.2Z" fill="#444"/><text x="10.4" y="14.2" font-family="Liberation Sans" font-weight="bold" font-size="13" text-anchor="middle" fill="#fff">?</text></svg>
<div style="position:absolute;left:1017.00px;top:78.00px;width:199.00px;height:178.00px;box-sizing:border-box;border:1px solid #444;background:#fdfdfd;"></div>
<div class="hd" style="position:absolute;left:1017.00px;top:78.00px;width:199.00px;height:19.00px;box-sizing:border-box;border:1px solid #555;"></div>
<div style="position:absolute;left:1179.30px;top:79.00px;width:1.00px;height:18.00px;background:#5a5a5a;"></div>
<div style="position:absolute;left:1180.30px;top:79.00px;width:1.00px;height:18.00px;background:#9a9a9a;"></div>
<div style="position:absolute;left:1197.30px;top:79.00px;width:1.00px;height:18.00px;background:#5a5a5a;"></div>
<div style="position:absolute;left:1198.30px;top:79.00px;width:1.00px;height:18.00px;background:#9a9a9a;"></div>
<span class="t sh" style="top:80.97px;font-size:11.5px;line-height:14.5px;color:#fff;left:998.00px;width:200px;text-align:center;">Objects</span>
<span class="t sh" style="top:80.97px;font-size:11.5px;line-height:14.5px;color:#fff;left:1088.80px;width:200px;text-align:center;">D</span>
<span class="t sh" style="top:80.97px;font-size:11.5px;line-height:14.5px;color:#fff;left:1107.00px;width:200px;text-align:center;">H</span>
<div style="position:absolute;left:1025.60px;top:97.00px;width:1.30px;height:135.00px;background:#6a6a6a;"></div>
<div style="position:absolute;left:1026.00px;top:105.80px;width:10.50px;height:1.30px;background:#666;"></div>
<svg style="left:1040.00px;top:98.50px" width="10" height="15" viewBox="0 0 10 15"><path d="M5 0V2M5 13V15" stroke="#555" stroke-width="1"/><path d="M1 4.2V11.2A4 1.9 0 0 0 9 11.2V4.2" fill="#fff" stroke="#555" stroke-width="1.1"/><ellipse cx="5" cy="4.2" rx="4" ry="1.9" fill="#fff" stroke="#555" stroke-width="1.1"/></svg>
<span class="t" style="top:98.99px;font-size:11px;line-height:14px;color:#383838;left:1056.20px;">Floor</span>
<svg style="left:1183.20px;top:100.00px" width="12" height="12" viewBox="0 0 12 12"><defs><radialGradient id="dg" cx="40%" cy="35%" r="70%"><stop offset="0" stop-color="#868686"/><stop offset="1" stop-color="#4c4c4c"/></radialGradient></defs><circle cx="6" cy="6" r="5.5" fill="url(#dg)" stroke="#444" stroke-width="0.9"/></svg>
<svg style="left:1201.20px;top:100.00px" width="12" height="12" viewBox="0 0 12 12"><defs><radialGradient id="dg" cx="40%" cy="35%" r="70%"><stop offset="0" stop-color="#868686"/><stop offset="1" stop-color="#4c4c4c"/></radialGradient></defs><circle cx="6" cy="6" r="5.5" fill="url(#dg)" stroke="#444" stroke-width="0.9"/></svg>
<div style="position:absolute;left:1026.00px;top:123.80px;width:10.50px;height:1.30px;background:#666;"></div>
<svg style="left:1037.00px;top:118.00px" width="17" height="12" viewBox="0 0 17 12"><path d="M0.8 6.6L6.2 1.4Q11.5 0.2 15.8 1.6L13.6 9.4Q10.2 8.8 6.8 11.2Z" fill="#fff" stroke="#555" stroke-width="1.1" stroke-linejoin="round"/><path d="M3.6 4.2Q9 5.2 14.6 5.6M10.2 1V9" fill="none" stroke="#555" stroke-width="0.9"/></svg>
<span class="t" style="top:116.99px;font-size:11px;line-height:14px;color:#383838;left:1056.20px;">Stage</span>
<svg style="left:1183.20px;top:118.00px" width="12" height="12" viewBox="0 0 12 12"><defs><radialGradient id="dg" cx="40%" cy="35%" r="70%"><stop offset="0" stop-color="#868686"/><stop offset="1" stop-color="#4c4c4c"/></radialGradient></defs><circle cx="6" cy="6" r="5.5" fill="url(#dg)" stroke="#444" stroke-width="0.9"/></svg>
<svg style="left:1201.20px;top:118.00px" width="12" height="12" viewBox="0 0 12 12"><defs><radialGradient id="dg" cx="40%" cy="35%" r="70%"><stop offset="0" stop-color="#868686"/><stop offset="1" stop-color="#4c4c4c"/></radialGradient></defs><circle cx="6" cy="6" r="5.5" fill="url(#dg)" stroke="#444" stroke-width="0.9"/></svg>
<div style="position:absolute;left:1026.00px;top:141.80px;width:10.50px;height:1.30px;background:#666;"></div>
<svg style="left:1040.00px;top:134.50px" width="10" height="15" viewBox="0 0 10 15"><path d="M5 0V2M5 13V15" stroke="#555" stroke-width="1"/><path d="M1 4.2V11.2A4 1.9 0 0 0 9 11.2V4.2" fill="#fff" stroke="#555" stroke-width="1.1"/><ellipse cx="5" cy="4.2" rx="4" ry="1.9" fill="#fff" stroke="#555" stroke-width="1.1"/></svg>
<span class="t" style="top:134.99px;font-size:11px;line-height:14px;color:#383838;left:1056.20px;">Hera-Wall</span>
<svg style="left:1183.20px;top:136.00px" width="12" height="12" viewBox="0 0 12 12"><defs><radialGradient id="dg" cx="40%" cy="35%" r="70%"><stop offset="0" stop-color="#868686"/><stop offset="1" stop-color="#4c4c4c"/></radialGradient></defs><circle cx="6" cy="6" r="5.5" fill="url(#dg)" stroke="#444" stroke-width="0.9"/></svg>
<svg style="left:1201.20px;top:136.00px" width="12" height="12" viewBox="0 0 12 12"><defs><radialGradient id="dg" cx="40%" cy="35%" r="70%"><stop offset="0" stop-color="#868686"/><stop offset="1" stop-color="#4c4c4c"/></radialGradient></defs><circle cx="6" cy="6" r="5.5" fill="url(#dg)" stroke="#444" stroke-width="0.9"/></svg>
<div style="position:absolute;left:1026.00px;top:159.80px;width:10.50px;height:1.30px;background:#666;"></div>
<svg style="left:1040.00px;top:152.50px" width="10" height="15" viewBox="0 0 10 15"><path d="M5 0V2M5 13V15" stroke="#555" stroke-width="1"/><path d="M1 4.2V11.2A4 1.9 0 0 0 9 11.2V4.2" fill="#fff" stroke="#555" stroke-width="1.1"/><ellipse cx="5" cy="4.2" rx="4" ry="1.9" fill="#fff" stroke="#555" stroke-width="1.1"/></svg>
<span class="t" style="top:152.99px;font-size:11px;line-height:14px;color:#383838;left:1056.20px;">Tribune C,D,E,&amp; F</span>
<svg style="left:1183.20px;top:154.00px" width="12" height="12" viewBox="0 0 12 12"><defs><radialGradient id="dg" cx="40%" cy="35%" r="70%"><stop offset="0" stop-color="#868686"/><stop offset="1" stop-color="#4c4c4c"/></radialGradient></defs><circle cx="6" cy="6" r="5.5" fill="url(#dg)" stroke="#444" stroke-width="0.9"/></svg>
<svg style="left:1201.20px;top:154.00px" width="12" height="12" viewBox="0 0 12 12"><defs><radialGradient id="dg" cx="40%" cy="35%" r="70%"><stop offset="0" stop-color="#868686"/><stop offset="1" stop-color="#4c4c4c"/></radialGradient></defs><circle cx="6" cy="6" r="5.5" fill="url(#dg)" stroke="#444" stroke-width="0.9"/></svg>
<div style="position:absolute;left:1026.00px;top:177.80px;width:10.50px;height:1.30px;background:#666;"></div>
<svg style="left:1040.00px;top:170.50px" width="10" height="15" viewBox="0 0 10 15"><path d="M5 0V2M5 13V15" stroke="#555" stroke-width="1"/><path d="M1 4.2V11.2A4 1.9 0 0 0 9 11.2V4.2" fill="#fff" stroke="#555" stroke-width="1.1"/><ellipse cx="5" cy="4.2" rx="4" ry="1.9" fill="#fff" stroke="#555" stroke-width="1.1"/></svg>
<span class="t" style="top:170.99px;font-size:11px;line-height:14px;color:#383838;left:1056.20px;">Tribune K,L,M &amp; N</span>
<svg style="left:1183.20px;top:172.00px" width="12" height="12" viewBox="0 0 12 12"><defs><radialGradient id="dg" cx="40%" cy="35%" r="70%"><stop offset="0" stop-color="#868686"/><stop offset="1" stop-color="#4c4c4c"/></radialGradient></defs><circle cx="6" cy="6" r="5.5" fill="url(#dg)" stroke="#444" stroke-width="0.9"/></svg>
<svg style="left:1201.20px;top:172.00px" width="12" height="12" viewBox="0 0 12 12"><defs><radialGradient id="dg" cx="40%" cy="35%" r="70%"><stop offset="0" stop-color="#868686"/><stop offset="1" stop-color="#4c4c4c"/></radialGradient></defs><circle cx="6" cy="6" r="5.5" fill="url(#dg)" stroke="#444" stroke-width="0.9"/></svg>
<svg style="left:1021.00px;top:191.00px" width="10" height="10" viewBox="0 0 10 10"><rect x="0.5" y="0.5" width="9" height="9" fill="#fff" stroke="#666" stroke-width="1"/><path d="M2 5H8M5 2V8" stroke="#222" stroke-width="1.3"/></svg>
<div style="position:absolute;left:1031.00px;top:195.80px;width:5.50px;height:1.30px;background:#666;"></div>
<span class="t" style="top:188.99px;font-size:11px;line-height:14px;color:#383838;left:1038.00px;">Tribune G, H &amp; J</span>
<svg style="left:1183.20px;top:190.00px" width="12" height="12" viewBox="0 0 12 12"><defs><radialGradient id="dg" cx="40%" cy="35%" r="70%"><stop offset="0" stop-color="#868686"/><stop offset="1" stop-color="#4c4c4c"/></radialGradient></defs><circle cx="6" cy="6" r="5.5" fill="url(#dg)" stroke="#444" stroke-width="0.9"/></svg>
<svg style="left:1201.20px;top:190.00px" width="12" height="12" viewBox="0 0 12 12"><defs><radialGradient id="dg" cx="40%" cy="35%" r="70%"><stop offset="0" stop-color="#868686"/><stop offset="1" stop-color="#4c4c4c"/></radialGradient></defs><circle cx="6" cy="6" r="5.5" fill="url(#dg)" stroke="#444" stroke-width="0.9"/></svg>
<svg style="left:1021.00px;top:209.00px" width="10" height="10" viewBox="0 0 10 10"><rect x="0.5" y="0.5" width="9" height="9" fill="#fff" stroke="#666" stroke-width="1"/><path d="M2 5H8M5 2V8" stroke="#222" stroke-width="1.3"/></svg>
<div style="position:absolute;left:1031.00px;top:213.80px;width:5.50px;height:1.30px;background:#666;"></div>
<span class="t" style="top:206.99px;font-size:11px;line-height:14px;color:#383838;left:1038.00px;">Tribune A, B &amp; P</span>
<svg style="left:1183.20px;top:208.00px" width="12" height="12" viewBox="0 0 12 12"><defs><radialGradient id="dg" cx="40%" cy="35%" r="70%"><stop offset="0" stop-color="#868686"/><stop offset="1" stop-color="#4c4c4c"/></radialGradient></defs><circle cx="6" cy="6" r="5.5" fill="url(#dg)" stroke="#444" stroke-width="0.9"/></svg>
<svg style="left:1201.20px;top:208.00px" width="12" height="12" viewBox="0 0 12 12"><defs><radialGradient id="dg" cx="40%" cy="35%" r="70%"><stop offset="0" stop-color="#868686"/><stop offset="1" stop-color="#4c4c4c"/></radialGradient></defs><circle cx="6" cy="6" r="5.5" fill="url(#dg)" stroke="#444" stroke-width="0.9"/></svg>
<svg style="left:1021.00px;top:227.00px" width="10" height="10" viewBox="0 0 10 10"><rect x="0.5" y="0.5" width="9" height="9" fill="#fff" stroke="#666" stroke-width="1"/><path d="M2 5H8M5 2V8" stroke="#222" stroke-width="1.3"/></svg>
<div style="position:absolute;left:1031.00px;top:231.80px;width:5.50px;height:1.30px;background:#666;"></div>
<span class="t" style="top:224.99px;font-size:11px;line-height:14px;color:#383838;left:1038.00px;">Audience</span>
<svg style="left:1183.20px;top:226.00px" width="12" height="12" viewBox="0 0 12 12"><defs><radialGradient id="dg" cx="40%" cy="35%" r="70%"><stop offset="0" stop-color="#868686"/><stop offset="1" stop-color="#4c4c4c"/></radialGradient></defs><circle cx="6" cy="6" r="5.5" fill="url(#dg)" stroke="#444" stroke-width="0.9"/></svg>
<svg style="left:1201.20px;top:226.00px" width="12" height="12" viewBox="0 0 12 12"><defs><radialGradient id="dg" cx="40%" cy="35%" r="70%"><stop offset="0" stop-color="#868686"/><stop offset="1" stop-color="#4c4c4c"/></radialGradient></defs><circle cx="6" cy="6" r="5.5" fill="url(#dg)" stroke="#444" stroke-width="0.9"/></svg>
<div style="position:absolute;left:1221.00px;top:95.00px;width:210.00px;height:162.00px;box-sizing:border-box;border:1px solid #6a6a6a;border-bottom:none;background:#fcfcfc;"></div>
<div style="position:absolute;left:1286.00px;top:79.00px;width:72.00px;height:17.00px;box-sizing:border-box;border:1px solid #7a7a7a;background:#fafafa;"></div>
<div style="position:absolute;left:1221.00px;top:79.00px;width:66.00px;height:18.00px;box-sizing:border-box;border:1px solid #6a6a6a;border-bottom:none;background:#fcfcfc;"></div>
<span class="t" style="top:80.39px;font-size:11px;line-height:14px;color:#383838;left:1230.50px;letter-spacing:-0.15px;">Properties</span>
<span class="t" style="top:80.39px;font-size:11px;line-height:14px;color:#777;left:1295.50px;letter-spacing:-0.15px;">3D Position</span>
<span class="t" style="top:103.49px;font-size:11px;line-height:14px;color:#383838;left:1227.50px;">Discretization</span>
<span class="t" style="top:126.19px;font-size:11px;line-height:14px;color:#383838;left:1227.50px;">Described angle</span>
<span class="t" style="top:167.39px;font-size:11px;line-height:14px;color:#383838;left:1227.50px;">Perpendicular length (m)</span>
<span class="t" style="top:189.89px;font-size:11px;line-height:14px;color:#383838;left:1227.50px;">Number of points</span>
<svg style="left:1228.00px;top:147.00px" width="14" height="15" viewBox="0 0 14 15"><circle cx="6.2" cy="8.6" r="5.1" fill="#fff" stroke="#222" stroke-width="2.7"/><path d="M3.6 7.6L6.2 11.2L11.6 1.2" fill="none" stroke="#111" stroke-width="2.3" stroke-linecap="round" stroke-linejoin="round"/></svg>
<span class="t" style="top:150.10px;font-size:10.4px;line-height:13.4px;color:#383838;left:1246.30px;">Revolution</span>
<div style="position:absolute;left:1361.00px;top:101.00px;width:40.00px;height:18.00px;border:1px solid #555;box-sizing:border-box;background:#fefefe;"></div><span class="t" style="top:103.29px;font-size:11px;line-height:14px;color:#383838;left:1275.30px;width:200px;text-align:center;">24</span><div style="position:absolute;left:1388.20px;top:102.20px;width:11.40px;height:15.60px;background:linear-gradient(#8a8a8a,#5c5c5c 48%,#444 50%,#7a7a7a 52%,#555);"></div><div style="position:absolute;left:1393.20px;top:105.40px;width:1.40px;height:1.40px;background:#ccc;"></div><div style="position:absolute;left:1393.20px;top:113.60px;width:1.80px;height:1.00px;background:#ccc;"></div>
<div style="position:absolute;left:1361.00px;top:124.00px;width:40.00px;height:18.00px;border:1px solid #555;box-sizing:border-box;background:#fefefe;"></div><span class="t" style="top:126.49px;font-size:11px;line-height:14px;color:#383838;left:1280.80px;width:200px;text-align:center;">360</span>
<div style="position:absolute;left:1361.00px;top:165.00px;width:40.00px;height:18.00px;border:1px solid #999;box-sizing:border-box;background:#fefefe;"></div><span class="t" style="top:167.09px;font-size:11px;line-height:14px;color:#777;left:1280.80px;width:200px;text-align:center;">REV</span>
<div style="position:absolute;left:1361.00px;top:188.00px;width:40.00px;height:18.00px;border:1px solid #555;box-sizing:border-box;background:#fefefe;"></div><span class="t" style="top:190.29px;font-size:11px;line-height:14px;color:#383838;left:1275.30px;width:200px;text-align:center;">2</span><div style="position:absolute;left:1388.20px;top:189.20px;width:11.40px;height:15.60px;background:linear-gradient(#8a8a8a,#5c5c5c 48%,#444 50%,#7a7a7a 52%,#555);"></div><div style="position:absolute;left:1393.20px;top:192.40px;width:1.40px;height:1.40px;background:#ccc;"></div><div style="position:absolute;left:1393.20px;top:200.60px;width:1.80px;height:1.00px;background:#ccc;"></div>
<div style="position:absolute;left:1406.60px;top:101.00px;width:1.20px;height:105.00px;background:#666;"></div>
<span class="t" style="top:102.99px;font-size:11px;line-height:14px;color:#383838;left:1412.50px;">Co</span>
<span class="t" style="top:126.19px;font-size:11px;line-height:14px;color:#383838;left:1412.50px;">Ob</span>
<span class="t" style="top:142.99px;font-size:11px;line-height:14px;color:#383838;left:1412.50px;">Ob</span>
<div style="position:absolute;left:1227.00px;top:212.00px;width:204.00px;height:46.00px;box-sizing:border-box;border:1px solid #555;background:#fdfdfd;"></div>
<div class="hd" style="position:absolute;left:1227.00px;top:212.00px;width:204.00px;height:17.00px;box-sizing:border-box;border:1px solid #5a5a5a;"></div>
<div style="position:absolute;left:1336.00px;top:212.00px;width:1.10px;height:45.00px;background:#555;"></div>
<div style="position:absolute;left:1227.40px;top:246.20px;width:196.60px;height:1.10px;background:#555;"></div>
<span class="t sh" style="top:213.57px;font-size:11.5px;line-height:14.5px;color:#fff;left:1181.70px;width:200px;text-align:center;">Name</span>
<span class="t sh" style="top:213.57px;font-size:11.5px;line-height:14.5px;color:#fff;left:1290.00px;width:200px;text-align:center;">Depth</span>
<span class="t" style="top:231.19px;font-size:11px;line-height:14px;color:#383838;left:1181.70px;width:200px;text-align:center;">Point 1</span>
<span class="t" style="top:231.19px;font-size:11px;line-height:14px;color:#383838;left:1289.50px;width:200px;text-align:center;">0</span>
<span class="t" style="top:248.69px;font-size:11px;line-height:14px;color:#383838;left:1181.70px;width:200px;text-align:center;">Point 2</span>
<span class="t" style="top:248.69px;font-size:11px;line-height:14px;color:#383838;left:1289.50px;width:200px;text-align:center;">32.4</span>
<div style="position:absolute;left:1216.20px;top:256.40px;width:210.00px;height:5.60px;background:#fcfcfc;"></div>
<div style="position:absolute;left:1017.40px;top:262.20px;width:406.60px;height:1.20px;background:#6a6a6a;"></div>
<div class="btn" style="position:absolute;left:1017.00px;top:269.00px;width:400.00px;height:17.00px;box-sizing:border-box;border:1px solid #4a4a4a;"></div><span class="t sh" style="top:270.09px;font-size:11px;line-height:14px;color:#fff;left:966.90px;width:200px;text-align:center;">New surface</span><div style="position:absolute;left:1116.80px;top:269.60px;width:1.00px;height:15.00px;background:#444;"></div><div style="position:absolute;left:1117.80px;top:269.60px;width:1.00px;height:15.00px;background:#8c8c8c;"></div><span class="t sh" style="top:270.09px;font-size:11px;line-height:14px;color:#fff;left:1066.90px;width:200px;text-align:center;">New balcony</span><div style="position:absolute;left:1216.80px;top:269.60px;width:1.00px;height:15.00px;background:#444;"></div><div style="position:absolute;left:1217.80px;top:269.60px;width:1.00px;height:15.00px;background:#8c8c8c;"></div><span class="t sh" style="top:270.09px;font-size:11px;line-height:14px;color:#fff;left:1166.90px;width:200px;text-align:center;">New revolution</span><div style="position:absolute;left:1316.80px;top:269.60px;width:1.00px;height:15.00px;background:#444;"></div><div style="position:absolute;left:1317.80px;top:269.60px;width:1.00px;height:15.00px;background:#8c8c8c;"></div><span class="t sh" style="top:270.09px;font-size:11px;line-height:14px;color:#fff;left:1266.90px;width:200px;text-align:center;">New group</span>
<div style="position:absolute;left:1011.00px;top:297.00px;width:420.00px;height:395.00px;box-sizing:border-box;border:1px solid #6a6a6a;background:#fcfcfc;"></div><div style="position:absolute;left:1012.00px;top:298.30px;width:418.00px;height:17.80px;background:#ededed;"></div><div style="position:absolute;left:1011.00px;top:315.90px;width:420.00px;height:1.20px;background:#6a6a6a;"></div><span class="t" style="top:300.09px;font-size:11px;line-height:14px;color:#777;left:1018.00px;letter-spacing:.22px;">LOUDSPEAKER DATA</span>
<div style="position:absolute;left:1011.00px;top:347.30px;width:413.00px;height:1.20px;background:#6a6a6a;"></div>
<svg style="left:1020.00px;top:322.30px" width="15" height="19" viewBox="0 0 15 19"><path d="M0.9 0.9H9.6L14.1 5.4V18.1H0.9Z" fill="#fff" stroke="#555" stroke-width="1.6" stroke-linejoin="round"/><path d="M9.6 0.9V5.4H14.1" fill="none" stroke="#555" stroke-width="1.2"/></svg>
<svg style="left:1047.00px;top:322.30px" width="20" height="19" viewBox="0 0 20 19"><path d="M1 18V1.2H7.2L8.6 4H15V8" fill="#8a7752" stroke="#555" stroke-width="1.5" stroke-linejoin="round"/><path d="M1 18L4.2 7.2H19.2L15.8 18Z" fill="#fff" stroke="#555" stroke-width="1.6" stroke-linejoin="round"/></svg>
<svg style="left:1071.00px;top:329.20px" width="7" height="6" viewBox="0 0 7 6"><path d="M0 0H7L3.5 6Z" fill="#bdbdbd"/></svg>
<svg style="left:1088.00px;top:322.30px" width="20" height="19" viewBox="0 0 20 19"><path d="M1 1H19V18H3L1 16Z" fill="#7a7a7a" stroke="#555" stroke-width="1.4" stroke-linejoin="round"/><rect x="4.6" y="0.8" width="10.8" height="7.6" fill="#fff"/><rect x="4.4" y="11.6" width="11.4" height="5.8" fill="#fff"/><rect x="11.6" y="12.4" width="3.4" height="4.6" fill="#8a7752"/></svg>
<svg style="left:1112.50px;top:329.20px" width="7" height="6" viewBox="0 0 7 6"><path d="M0 0H7L3.5 6Z" fill="#bdbdbd"/></svg>
<div style="position:absolute;left:1126.00px;top:319.00px;width:1.30px;height:26.00px;background:#555;"></div>
<svg style="left:1134.50px;top:323.50px" width="20" height="17" viewBox="0 0 20 17"><path d="M8.2 1.5L1.8 7.2L8.2 12.8M2.2 7.2H13.5Q18.2 7.2 18.2 12V16" fill="none" stroke="#ddd8ce" stroke-width="2.3" stroke-linecap="round" stroke-linejoin="round"/></svg>
<svg style="left:1159.00px;top:329.20px" width="7" height="6" viewBox="0 0 7 6"><path d="M0 0H7L3.5 6Z" fill="#bdbdbd"/></svg>
<svg style="left:1174.50px;top:323.50px" width="20" height="17" viewBox="0 0 20 17"><path d="M11.8 1.5L18.2 7.2L11.8 12.8M17.8 7.2H6.5Q1.8 7.2 1.8 12V16" fill="none" stroke="#ddd8ce" stroke-width="2.3" stroke-linecap="round" stroke-linejoin="round"/></svg>
<svg style="left:1199.00px;top:329.20px" width="7" height="6" viewBox="0 0 7 6"><path d="M0 0H7L3.5 6Z" fill="#bdbdbd"/></svg>
<div style="position:absolute;left:1213.00px;top:319.00px;width:1.30px;height:26.00px;background:#555;"></div>
<div style="position:absolute;left:1218.00px;top:320.00px;width:38.00px;height:24.00px;box-sizing:border-box;border:1px solid #3c3c3c;background:linear-gradient(#787878,#5e5e5e 50%,#545454);"></div><span class="t" style="top:325.41px;font-size:10.5px;line-height:13.5px;color:#fff;left:1136.80px;width:200px;text-align:center;letter-spacing:-0.2px;">SOLO</span>
<div style="position:absolute;left:1260.00px;top:319.00px;width:1.30px;height:26.00px;background:#555;"></div>
<svg style="left:1267.50px;top:322.00px" width="20" height="20" viewBox="0 0 20 20"><circle cx="10.4" cy="9.6" r="9.4" fill="#444"/><path d="M3.2 14.5L0.6 19.6L8 18.2Z" fill="#444"/><text x="10.4" y="14.2" font-family="Liberation Sans" font-weight="bold" font-size="13" text-anchor="middle" fill="#fff">?</text></svg>
<div style="position:absolute;left:1017.00px;top:354.00px;width:140.00px;height:285.00px;box-sizing:border-box;border:1px solid #444;background:#fdfdfd;"></div>
<div class="hd" style="position:absolute;left:1017.00px;top:354.00px;width:140.00px;height:18.00px;box-sizing:border-box;border:1px solid #555;"></div>
<div style="position:absolute;left:1120.50px;top:354.00px;width:1.00px;height:18.00px;background:#5a5a5a;"></div>
<div style="position:absolute;left:1121.50px;top:354.00px;width:1.00px;height:18.00px;background:#9a9a9a;"></div>
<div style="position:absolute;left:1138.00px;top:354.00px;width:1.00px;height:18.00px;background:#5a5a5a;"></div>
<div style="position:absolute;left:1139.00px;top:354.00px;width:1.00px;height:18.00px;background:#9a9a9a;"></div>
<span class="t sh" style="top:355.97px;font-size:11.5px;line-height:14.5px;color:#fff;left:968.80px;width:200px;text-align:center;">Sources</span>
<span class="t sh" style="top:355.97px;font-size:11.5px;line-height:14.5px;color:#fff;left:1029.60px;width:200px;text-align:center;">M</span>
<span class="t sh" style="top:355.97px;font-size:11.5px;line-height:14.5px;color:#fff;left:1047.80px;width:200px;text-align:center;">H</span>
<div style="position:absolute;left:1036.20px;top:408.00px;width:120.20px;height:72.00px;background:#8e8e8e;"></div>
<div style="position:absolute;left:1025.60px;top:372.00px;width:1.30px;height:104.00px;background:#6a6a6a;"></div>
<svg style="left:1021.00px;top:376.00px" width="10" height="10" viewBox="0 0 10 10"><rect x="0.5" y="0.5" width="9" height="9" fill="#fff" stroke="#666" stroke-width="1"/><path d="M2 5H8M5 2V8" stroke="#222" stroke-width="1.3"/></svg>
<div style="position:absolute;left:1031.00px;top:380.70px;width:5.20px;height:1.30px;background:#666;"></div>
<span class="t" style="top:374.29px;font-size:11px;line-height:14px;color:#383838;left:1038.00px;">PA-L/R</span>
<svg style="left:1124.00px;top:374.90px" width="12" height="12" viewBox="0 0 12 12"><defs><radialGradient id="dg" cx="40%" cy="35%" r="70%"><stop offset="0" stop-color="#868686"/><stop offset="1" stop-color="#4c4c4c"/></radialGradient></defs><circle cx="6" cy="6" r="5.5" fill="url(#dg)" stroke="#444" stroke-width="0.9"/></svg>
<svg style="left:1142.00px;top:374.90px" width="12" height="12" viewBox="0 0 12 12"><defs><radialGradient id="dg" cx="40%" cy="35%" r="70%"><stop offset="0" stop-color="#868686"/><stop offset="1" stop-color="#4c4c4c"/></radialGradient></defs><circle cx="6" cy="6" r="5.5" fill="url(#dg)" stroke="#444" stroke-width="0.9"/></svg>
<svg style="left:1021.00px;top:394.00px" width="10" height="10" viewBox="0 0 10 10"><rect x="0.5" y="0.5" width="9" height="9" fill="#fff" stroke="#666" stroke-width="1"/><path d="M2 5H8M5 2V8" stroke="#222" stroke-width="1.3"/></svg>
<div style="position:absolute;left:1031.00px;top:398.70px;width:5.20px;height:1.30px;background:#666;"></div>
<span class="t" style="top:392.29px;font-size:11px;line-height:14px;color:#383838;left:1038.00px;">SIDE-PA</span>
<svg style="left:1124.00px;top:392.90px" width="12" height="12" viewBox="0 0 12 12"><defs><radialGradient id="dg" cx="40%" cy="35%" r="70%"><stop offset="0" stop-color="#868686"/><stop offset="1" stop-color="#4c4c4c"/></radialGradient></defs><circle cx="6" cy="6" r="5.5" fill="url(#dg)" stroke="#444" stroke-width="0.9"/></svg>
<svg style="left:1142.00px;top:392.90px" width="12" height="12" viewBox="0 0 12 12"><defs><radialGradient id="dg" cx="40%" cy="35%" r="70%"><stop offset="0" stop-color="#868686"/><stop offset="1" stop-color="#4c4c4c"/></radialGradient></defs><circle cx="6" cy="6" r="5.5" fill="url(#dg)" stroke="#444" stroke-width="0.9"/></svg>
<svg style="left:1021.00px;top:412.00px" width="10" height="10" viewBox="0 0 10 10"><rect x="0.5" y="0.5" width="9" height="9" fill="#fff" stroke="#666" stroke-width="1"/><path d="M2 5H8M5 2V8" stroke="#222" stroke-width="1.3"/></svg>
<div style="position:absolute;left:1031.00px;top:416.70px;width:5.20px;height:1.30px;background:#666;"></div>
<span class="t" style="top:410.29px;font-size:11px;line-height:14px;color:#383838;left:1038.00px;">Center</span>
<svg style="left:1124.00px;top:408.30px" width="14" height="15" viewBox="0 0 14 15"><circle cx="6.2" cy="8.6" r="5.6" fill="#222"/><path d="M3.4 7.8L6.2 11.4L11.4 1.4" fill="none" stroke="#fff" stroke-width="2.4" stroke-linecap="round" stroke-linejoin="round"/></svg>
<svg style="left:1142.00px;top:410.90px" width="12" height="12" viewBox="0 0 12 12"><defs><radialGradient id="dg" cx="40%" cy="35%" r="70%"><stop offset="0" stop-color="#868686"/><stop offset="1" stop-color="#4c4c4c"/></radialGradient></defs><circle cx="6" cy="6" r="5.5" fill="url(#dg)" stroke="#444" stroke-width="0.9"/></svg>
<svg style="left:1021.00px;top:430.00px" width="10" height="10" viewBox="0 0 10 10"><rect x="0.5" y="0.5" width="9" height="9" fill="#fff" stroke="#666" stroke-width="1"/><path d="M2 5H8M5 2V8" stroke="#222" stroke-width="1.3"/></svg>
<div style="position:absolute;left:1031.00px;top:434.70px;width:5.20px;height:1.30px;background:#666;"></div>
<span class="t" style="top:428.29px;font-size:11px;line-height:14px;color:#383838;left:1038.00px;">SUBS-Flown</span>
<svg style="left:1124.00px;top:426.30px" width="14" height="15" viewBox="0 0 14 15"><circle cx="6.2" cy="8.6" r="5.6" fill="#222"/><path d="M3.4 7.8L6.2 11.4L11.4 1.4" fill="none" stroke="#fff" stroke-width="2.4" stroke-linecap="round" stroke-linejoin="round"/></svg>
<svg style="left:1142.00px;top:428.90px" width="12" height="12" viewBox="0 0 12 12"><defs><radialGradient id="dg" cx="40%" cy="35%" r="70%"><stop offset="0" stop-color="#868686"/><stop offset="1" stop-color="#4c4c4c"/></radialGradient></defs><circle cx="6" cy="6" r="5.5" fill="url(#dg)" stroke="#444" stroke-width="0.9"/></svg>
<svg style="left:1021.00px;top:448.00px" width="10" height="10" viewBox="0 0 10 10"><rect x="0.5" y="0.5" width="9" height="9" fill="#fff" stroke="#666" stroke-width="1"/><path d="M2 5H8M5 2V8" stroke="#222" stroke-width="1.3"/></svg>
<div style="position:absolute;left:1031.00px;top:452.70px;width:5.20px;height:1.30px;background:#666;"></div>
<span class="t" style="top:446.29px;font-size:11px;line-height:14px;color:#383838;left:1038.00px;">SUBS stacked</span>
<svg style="left:1124.00px;top:444.30px" width="14" height="15" viewBox="0 0 14 15"><circle cx="6.2" cy="8.6" r="5.6" fill="#222"/><path d="M3.4 7.8L6.2 11.4L11.4 1.4" fill="none" stroke="#fff" stroke-width="2.4" stroke-linecap="round" stroke-linejoin="round"/></svg>
<svg style="left:1142.00px;top:446.90px" width="12" height="12" viewBox="0 0 12 12"><defs><radialGradient id="dg" cx="40%" cy="35%" r="70%"><stop offset="0" stop-color="#868686"/><stop offset="1" stop-color="#4c4c4c"/></radialGradient></defs><circle cx="6" cy="6" r="5.5" fill="url(#dg)" stroke="#444" stroke-width="0.9"/></svg>
<svg style="left:1021.00px;top:466.00px" width="10" height="10" viewBox="0 0 10 10"><rect x="0.5" y="0.5" width="9" height="9" fill="#fff" stroke="#666" stroke-width="1"/><path d="M2 5H8M5 2V8" stroke="#222" stroke-width="1.3"/></svg>
<div style="position:absolute;left:1031.00px;top:470.70px;width:5.20px;height:1.30px;background:#666;"></div>
<span class="t" style="top:464.29px;font-size:11px;line-height:14px;color:#383838;left:1038.00px;">Nearfills</span>
<svg style="left:1124.00px;top:462.30px" width="14" height="15" viewBox="0 0 14 15"><circle cx="6.2" cy="8.6" r="5.6" fill="#222"/><path d="M3.4 7.8L6.2 11.4L11.4 1.4" fill="none" stroke="#fff" stroke-width="2.4" stroke-linecap="round" stroke-linejoin="round"/></svg>
<svg style="left:1142.00px;top:464.90px" width="12" height="12" viewBox="0 0 12 12"><defs><radialGradient id="dg" cx="40%" cy="35%" r="70%"><stop offset="0" stop-color="#868686"/><stop offset="1" stop-color="#4c4c4c"/></radialGradient></defs><circle cx="6" cy="6" r="5.5" fill="url(#dg)" stroke="#444" stroke-width="0.9"/></svg>
<div style="position:absolute;left:1168.00px;top:362.00px;width:104.00px;height:268.00px;box-sizing:border-box;border:2px solid #555;border-bottom:none;border-radius:7px 7px 0 0;"></div><div style="position:absolute;left:1194.50px;top:360.00px;width:50.00px;height:6.00px;background:#fcfcfc;"></div><span class="t" style="top:356.99px;font-size:11px;line-height:14px;color:#383838;left:1119.50px;width:200px;text-align:center;">Position</span>
<div style="position:absolute;left:1277.00px;top:362.00px;width:115.00px;height:268.00px;box-sizing:border-box;border:2px solid #555;border-bottom:none;border-radius:7px 7px 0 0;"></div><div style="position:absolute;left:1293.00px;top:360.00px;width:83.00px;height:6.00px;background:#fcfcfc;"></div><span class="t" style="top:356.99px;font-size:11px;line-height:14px;color:#383838;left:1234.50px;width:200px;text-align:center;">Global settings</span>
<span class="t" style="top:377.99px;font-size:11px;line-height:14px;color:#c41c1c;left:1174.20px;">dX (m)</span>
<span class="t" style="top:394.89px;font-size:11px;line-height:14px;color:#1c9a1c;left:1174.20px;">dY (m)</span>
<span class="t" style="top:412.19px;font-size:11px;line-height:14px;color:#1464c4;left:1174.20px;">dZ (m)</span>
<span class="t" style="top:434.79px;font-size:11px;line-height:14px;color:#383838;left:1174.20px;">dSite</span>
<span class="t" style="top:451.79px;font-size:11px;line-height:14px;color:#383838;left:1174.20px;">dAzimuth</span>
<div style="position:absolute;left:1225.00px;top:376.00px;width:40.00px;height:18.00px;box-sizing:border-box;border:1px solid #555;background:#fefefe;"></div><span class="t" style="top:378.29px;font-size:11px;line-height:14px;color:#383838;left:1144.90px;width:200px;text-align:center;">0</span>
<div style="position:absolute;left:1225.00px;top:393.00px;width:40.00px;height:18.00px;box-sizing:border-box;border:1px solid #555;background:#fefefe;"></div><span class="t" style="top:395.39px;font-size:11px;line-height:14px;color:#383838;left:1144.90px;width:200px;text-align:center;">0</span>
<div style="position:absolute;left:1225.00px;top:410.00px;width:40.00px;height:18.00px;box-sizing:border-box;border:1px solid #555;background:#fefefe;"></div><span class="t" style="top:412.49px;font-size:11px;line-height:14px;color:#383838;left:1144.90px;width:200px;text-align:center;">0</span>
<div style="position:absolute;left:1225.00px;top:433.00px;width:40.00px;height:18.00px;box-sizing:border-box;border:1px solid #555;background:#fefefe;"></div><span class="t" style="top:435.29px;font-size:11px;line-height:14px;color:#383838;left:1144.90px;width:200px;text-align:center;">0</span>
<div style="position:absolute;left:1225.00px;top:450.00px;width:40.00px;height:18.00px;box-sizing:border-box;border:1px solid #555;background:#fefefe;"></div><span class="t" style="top:452.39px;font-size:11px;line-height:14px;color:#383838;left:1144.90px;width:200px;text-align:center;">0</span>
<div class="btn" style="position:absolute;left:1194.00px;top:473.00px;width:50.00px;height:18.00px;box-sizing:border-box;border:1px solid #444;"></div>
<span class="t sh" style="top:475.49px;font-size:11px;line-height:14px;color:#fff;left:1119.00px;width:200px;text-align:center;">Apply</span>
<span class="t" style="top:377.99px;font-size:11px;line-height:14px;color:#383838;left:1284.20px;">Gain (dB)</span>
<span class="t" style="top:394.99px;font-size:11px;line-height:14px;color:#383838;left:1284.20px;">Delay (ms)</span>
<div style="position:absolute;left:1345.00px;top:376.00px;width:40.00px;height:18.00px;box-sizing:border-box;border:1px solid #555;background:#fefefe;"></div><span class="t" style="top:378.29px;font-size:11px;line-height:14px;color:#383838;left:1265.30px;width:200px;text-align:center;">0</span>
<div style="position:absolute;left:1345.00px;top:393.00px;width:40.00px;height:18.00px;box-sizing:border-box;border:1px solid #555;background:#fefefe;"></div><span class="t" style="top:395.39px;font-size:11px;line-height:14px;color:#383838;left:1265.30px;width:200px;text-align:center;">2.82</span>
<span class="t" style="top:417.11px;font-size:10.5px;line-height:13.5px;color:#383838;left:1310.50px;">LF HF</span>
<div style="position:absolute;left:1308.00px;top:432.00px;width:33.00px;height:69.00px;box-sizing:border-box;border:1px solid #777;background:#fdfdfd;"></div>
<div style="position:absolute;left:1324.20px;top:432.00px;width:1.00px;height:68.50px;background:#777;"></div>
<div style="position:absolute;left:1310.00px;top:465.80px;width:13.20px;height:33.00px;background:#0a960a;"></div>
<div style="position:absolute;left:1326.20px;top:465.80px;width:13.20px;height:33.00px;background:#0a960a;"></div>
<div style="position:absolute;left:1342.60px;top:437.20px;width:3.40px;height:1.00px;background:#666;"></div>
<div style="position:absolute;left:1342.60px;top:441.32px;width:2.40px;height:1.00px;background:#666;"></div>
<div style="position:absolute;left:1342.60px;top:445.44px;width:2.40px;height:1.00px;background:#666;"></div>
<div style="position:absolute;left:1342.60px;top:449.56px;width:2.40px;height:1.00px;background:#666;"></div>
<div style="position:absolute;left:1342.60px;top:453.68px;width:2.40px;height:1.00px;background:#666;"></div>
<div style="position:absolute;left:1342.60px;top:457.80px;width:2.40px;height:1.00px;background:#666;"></div>
<div style="position:absolute;left:1342.60px;top:461.92px;width:2.40px;height:1.00px;background:#666;"></div>
<div style="position:absolute;left:1342.60px;top:466.04px;width:2.40px;height:1.00px;background:#666;"></div>
<div style="position:absolute;left:1342.60px;top:470.16px;width:3.40px;height:1.00px;background:#666;"></div>
<div style="position:absolute;left:1342.60px;top:474.28px;width:2.40px;height:1.00px;background:#666;"></div>
<div style="position:absolute;left:1342.60px;top:478.40px;width:2.40px;height:1.00px;background:#666;"></div>
<div style="position:absolute;left:1342.60px;top:482.52px;width:2.40px;height:1.00px;background:#666;"></div>
<div style="position:absolute;left:1342.60px;top:486.64px;width:3.40px;height:1.00px;background:#666;"></div>
<div style="position:absolute;left:1342.60px;top:490.76px;width:2.40px;height:1.00px;background:#666;"></div>
<div style="position:absolute;left:1342.60px;top:494.88px;width:2.40px;height:1.00px;background:#666;"></div>
<div style="position:absolute;left:1342.60px;top:499.00px;width:2.40px;height:1.00px;background:#666;"></div>
<span class="t" style="top:430.41px;font-size:10.5px;line-height:13.5px;color:#555;left:1347.50px;">15</span>
<span class="t" style="top:460.21px;font-size:10.5px;line-height:13.5px;color:#555;left:1347.50px;">8</span>
<span class="t" style="top:477.21px;font-size:10.5px;line-height:13.5px;color:#555;left:1347.50px;">4</span>
<div style="position:absolute;left:1163.00px;top:631.20px;width:268.00px;height:6.00px;background:#5a5a5a;border-top:1px solid #333;border-bottom:1px solid #333;box-sizing:border-box;"></div>
<div style="position:absolute;left:1017.40px;top:644.30px;width:406.60px;height:1.20px;background:#6a6a6a;"></div>
<div class="btn" style="position:absolute;left:1017.00px;top:650.00px;width:200.00px;height:18.00px;box-sizing:border-box;border:1px solid #4a4a4a;"></div><span class="t sh" style="top:651.69px;font-size:11px;line-height:14px;color:#fff;left:966.80px;width:200px;text-align:center;">New source</span><div style="position:absolute;left:1116.60px;top:651.20px;width:1.00px;height:15.40px;background:#444;"></div><div style="position:absolute;left:1117.60px;top:651.20px;width:1.00px;height:15.40px;background:#8c8c8c;"></div><span class="t sh" style="top:651.69px;font-size:11px;line-height:14px;color:#fff;left:1066.60px;width:200px;text-align:center;">New group</span>
<div style="position:absolute;left:1142.00px;top:673.40px;width:282.00px;height:1.10px;background:#6a6a6a;"></div>
<div style="position:absolute;left:1142.00px;top:673.00px;width:61.00px;height:18.00px;box-sizing:border-box;border:1px solid #6a6a6a;background:#fdfdfd;"></div>
<span class="t" style="top:675.19px;font-size:11px;line-height:14px;color:#444;left:1023.20px;letter-spacing:-0.1px;">LOUDSPEAKER DATA</span>
<span class="t" style="top:675.19px;font-size:11px;line-height:14px;color:#777;left:1150.60px;">REPORT</span>
<div style="position:absolute;left:3.00px;top:697.00px;width:834.00px;height:90.00px;box-sizing:border-box;border:1px solid #6a6a6a;background:#fcfcfc;"></div><div style="position:absolute;left:4.00px;top:697.80px;width:832.00px;height:17.80px;background:#ededed;"></div><div style="position:absolute;left:3.00px;top:715.40px;width:834.00px;height:1.20px;background:#6a6a6a;"></div><span class="t" style="top:699.59px;font-size:11px;line-height:14px;color:#777;left:10.00px;letter-spacing:.22px;">SOURCE CUTVIEW</span><div style="position:absolute;left:3.00px;top:747.20px;width:834.00px;height:1.20px;background:#6a6a6a;"></div><div style="position:absolute;left:782.00px;top:698.40px;width:17.80px;height:17.20px;background:#d2d2d2;"></div><div style="position:absolute;left:785.80px;top:710.20px;width:9.60px;height:2.60px;background:#222;"></div><div style="position:absolute;left:811.20px;top:701.60px;width:3.00px;height:10.40px;background:#4a4a4a;"></div><svg style="left:822.40px;top:701.80px" width="10" height="10" viewBox="0 0 10 10"><path d="M1 1L9 9M9 1L1 9" stroke="#333" stroke-width="1.9"/></svg>
<div style="position:absolute;left:842.00px;top:697.00px;width:417.00px;height:90.00px;box-sizing:border-box;border:1px solid #6a6a6a;background:#fcfcfc;"></div><div style="position:absolute;left:843.40px;top:697.80px;width:415.00px;height:17.80px;background:#ededed;"></div><div style="position:absolute;left:842.40px;top:715.40px;width:417.00px;height:1.20px;background:#6a6a6a;"></div><span class="t" style="top:699.59px;font-size:11px;line-height:14px;color:#777;left:849.40px;letter-spacing:.22px;">SPL TARGET</span><div style="position:absolute;left:842.40px;top:747.20px;width:417.00px;height:1.20px;background:#6a6a6a;"></div><div style="position:absolute;left:1204.40px;top:698.40px;width:17.80px;height:17.20px;background:#d2d2d2;"></div><div style="position:absolute;left:1208.20px;top:710.20px;width:9.60px;height:2.60px;background:#222;"></div><div style="position:absolute;left:1233.60px;top:701.60px;width:3.00px;height:10.40px;background:#4a4a4a;"></div><svg style="left:1244.80px;top:701.80px" width="10" height="10" viewBox="0 0 10 10"><path d="M1 1L9 9M9 1L1 9" stroke="#333" stroke-width="1.9"/></svg>
<div style="position:absolute;left:1266.00px;top:697.00px;width:170.00px;height:90.00px;box-sizing:border-box;border:1px solid #6a6a6a;background:#fcfcfc;"></div><div style="position:absolute;left:1266.80px;top:697.80px;width:168.00px;height:17.80px;background:#ededed;"></div><div style="position:absolute;left:1265.80px;top:715.40px;width:170.00px;height:1.20px;background:#6a6a6a;"></div><span class="t" style="top:699.59px;font-size:11px;line-height:14px;color:#777;left:1272.80px;letter-spacing:.22px;">PROFILE CUTVIEW</span><div style="position:absolute;left:1265.80px;top:747.20px;width:170.00px;height:1.20px;background:#6a6a6a;"></div>
<div style="position:absolute;left:5.00px;top:720.00px;width:25.00px;height:24.00px;border:2px solid #555;border-radius:3px;box-sizing:border-box;background:#fdfdfd;"></div><svg style="left:8.20px;top:722.40px" width="19" height="19" viewBox="0 0 19 19"><path d="M15.6 5.6A7.2 7.2 0 1 0 16.9 11.2" fill="none" stroke="#d9302a" stroke-width="2.6"/><path d="M11.2 1.2H17.6V7.8Z" fill="#d9302a"/></svg>
<div style="position:absolute;left:35.20px;top:718.00px;width:1.30px;height:28.00px;background:#555;"></div>
<svg style="left:41.00px;top:724.50px" width="14" height="15" viewBox="0 0 14 15"><circle cx="6.2" cy="8.6" r="5.1" fill="#fff" stroke="#222" stroke-width="2.7"/><path d="M3.6 7.6L6.2 11.2L11.6 1.2" fill="none" stroke="#111" stroke-width="2.3" stroke-linecap="round" stroke-linejoin="round"/></svg>
<span class="t" style="top:724.89px;font-size:11px;line-height:14px;color:#383838;left:60.00px;">Show the cutview</span>
<div style="position:absolute;left:152.00px;top:719.00px;width:87.00px;height:26.00px;box-sizing:border-box;border:1px solid #5c5c5c;background:linear-gradient(#929292,#707070 50%,#646464);"></div><span class="t" style="top:725.19px;font-size:11px;line-height:14px;color:#fff;left:158.30px;">Vertical</span><svg style="left:223.20px;top:725.00px" width="8" height="14" viewBox="0 0 8 14"><path d="M0 5.6L4 0L8 5.6ZM0 8.4L4 14L8 8.4Z" fill="#fff"/></svg>
<div style="position:absolute;left:243.00px;top:720.00px;width:43.00px;height:24.00px;box-sizing:border-box;border:1px solid #8a8a8a;background:linear-gradient(#9a9a9a,#a8a8a8 50%,#8e8e8e);"></div>
<span class="t" style="top:724.99px;font-size:11px;line-height:14px;color:#c8c8c8;left:250.00px;">1</span>
<div style="position:absolute;left:290.30px;top:718.00px;width:1.30px;height:28.00px;background:#555;"></div>
<div style="position:absolute;left:295.00px;top:720.00px;width:38.00px;height:24.00px;box-sizing:border-box;border:1px solid #3c3c3c;background:linear-gradient(#787878,#5e5e5e 50%,#545454);"></div><span class="t" style="top:725.61px;font-size:10.5px;line-height:13.5px;color:#fff;left:214.10px;width:200px;text-align:center;letter-spacing:-0.2px;">SOLO</span>
<div style="position:absolute;left:337.00px;top:718.00px;width:1.30px;height:28.00px;background:#555;"></div>
<svg style="left:343.60px;top:721.00px" width="22" height="22" viewBox="0 0 22 22"><path d="M2 5.5V2H5.5M16.5 2H20V5.5M20 16.5V20H16.5M5.5 20H2V16.5" fill="none" stroke="#555" stroke-width="1.7"/><path d="M11 2V20M2 11H20" stroke="#ccc" stroke-width="1.3"/><path d="M4 14.8L11.6 11.2L15.2 3.8" fill="none" stroke="#555" stroke-width="1"/><circle cx="4.2" cy="14.8" r="2.5" fill="#e03030"/><circle cx="11.6" cy="11.2" r="2.5" fill="#f09020"/><circle cx="15.4" cy="3.8" r="2.4" fill="#8cc63f"/></svg>
<div style="position:absolute;left:372.20px;top:718.00px;width:1.30px;height:28.00px;background:#555;"></div>
<svg style="left:380.00px;top:722.00px" width="20" height="20" viewBox="0 0 20 20"><path d="M8.1 0H11.9L12.7 5.2H7.3Z" transform="rotate(0 10 10)" fill="#444"/><path d="M8.1 0H11.9L12.7 5.2H7.3Z" transform="rotate(45 10 10)" fill="#444"/><path d="M8.1 0H11.9L12.7 5.2H7.3Z" transform="rotate(90 10 10)" fill="#444"/><path d="M8.1 0H11.9L12.7 5.2H7.3Z" transform="rotate(135 10 10)" fill="#444"/><path d="M8.1 0H11.9L12.7 5.2H7.3Z" transform="rotate(180 10 10)" fill="#444"/><path d="M8.1 0H11.9L12.7 5.2H7.3Z" transform="rotate(225 10 10)" fill="#444"/><path d="M8.1 0H11.9L12.7 5.2H7.3Z" transform="rotate(270 10 10)" fill="#444"/><path d="M8.1 0H11.9L12.7 5.2H7.3Z" transform="rotate(315 10 10)" fill="#444"/><circle cx="10" cy="10" r="5.5" fill="none" stroke="#444" stroke-width="2.9"/></svg>
<svg style="left:409.50px;top:722.00px" width="20" height="20" viewBox="0 0 20 20"><circle cx="10.4" cy="9.6" r="9.4" fill="#444"/><path d="M3.2 14.5L0.6 19.6L8 18.2Z" fill="#444"/><text x="10.4" y="14.2" font-family="Liberation Sans" font-weight="bold" font-size="13" text-anchor="middle" fill="#fff">?</text></svg>
<div style="position:absolute;left:845.00px;top:719.00px;width:99.00px;height:26.00px;box-sizing:border-box;border:1px solid #5c5c5c;background:linear-gradient(#929292,#707070 50%,#646464);"></div><span class="t" style="top:725.19px;font-size:11px;line-height:14px;color:#fff;left:851.20px;">3dB</span><svg style="left:928.10px;top:725.00px" width="8" height="14" viewBox="0 0 8 14"><path d="M0 5.6L4 0L8 5.6ZM0 8.4L4 14L8 8.4Z" fill="#fff"/></svg>
<div style="position:absolute;left:948.00px;top:718.00px;width:1.30px;height:28.00px;background:#555;"></div>
<span class="t" style="top:724.89px;font-size:11px;line-height:14px;color:#383838;left:953.40px;">+/- (dB)</span>
<div style="position:absolute;left:996.00px;top:719.00px;width:40.00px;height:25.00px;box-sizing:border-box;border:1px solid #555;background:#fefefe;"></div>
<span class="t" style="top:724.89px;font-size:11px;line-height:14px;color:#383838;left:916.00px;width:200px;text-align:center;">3</span>
<div style="position:absolute;left:1040.60px;top:718.00px;width:1.30px;height:28.00px;background:#555;"></div>
<svg style="left:1046.60px;top:721.00px" width="22" height="22" viewBox="0 0 22 22"><path d="M2 5.5V2H5.5M16.5 2H20V5.5M20 16.5V20H16.5M5.5 20H2V16.5" fill="none" stroke="#555" stroke-width="1.7"/><path d="M11 2V20M2 11H20" stroke="#ccc" stroke-width="1.3"/><path d="M4 14.8L11.6 11.2L15.2 3.8" fill="none" stroke="#555" stroke-width="1"/><circle cx="4.2" cy="14.8" r="2.5" fill="#e03030"/><circle cx="11.6" cy="11.2" r="2.5" fill="#f09020"/><circle cx="15.4" cy="3.8" r="2.4" fill="#8cc63f"/></svg>
<div style="position:absolute;left:1075.30px;top:718.00px;width:1.30px;height:28.00px;background:#555;"></div>
<svg style="left:1083.00px;top:722.00px" width="20" height="20" viewBox="0 0 20 20"><path d="M8.1 0H11.9L12.7 5.2H7.3Z" transform="rotate(0 10 10)" fill="#444"/><path d="M8.1 0H11.9L12.7 5.2H7.3Z" transform="rotate(45 10 10)" fill="#444"/><path d="M8.1 0H11.9L12.7 5.2H7.3Z" transform="rotate(90 10 10)" fill="#444"/><path d="M8.1 0H11.9L12.7 5.2H7.3Z" transform="rotate(135 10 10)" fill="#444"/><path d="M8.1 0H11.9L12.7 5.2H7.3Z" transform="rotate(180 10 10)" fill="#444"/><path d="M8.1 0H11.9L12.7 5.2H7.3Z" transform="rotate(225 10 10)" fill="#444"/><path d="M8.1 0H11.9L12.7 5.2H7.3Z" transform="rotate(270 10 10)" fill="#444"/><path d="M8.1 0H11.9L12.7 5.2H7.3Z" transform="rotate(315 10 10)" fill="#444"/><circle cx="10" cy="10" r="5.5" fill="none" stroke="#444" stroke-width="2.9"/></svg>
<svg style="left:1112.50px;top:722.00px" width="20" height="20" viewBox="0 0 20 20"><circle cx="10.4" cy="9.6" r="9.4" fill="#444"/><path d="M3.2 14.5L0.6 19.6L8 18.2Z" fill="#444"/><text x="10.4" y="14.2" font-family="Liberation Sans" font-weight="bold" font-size="13" text-anchor="middle" fill="#fff">?</text></svg>
<div style="position:absolute;left:1268.00px;top:720.00px;width:26.00px;height:24.00px;border:2px solid #555;border-radius:3px;box-sizing:border-box;background:#fdfdfd;"></div><svg style="left:1271.40px;top:722.40px" width="19" height="19" viewBox="0 0 19 19"><path d="M15.6 5.6A7.2 7.2 0 1 0 16.9 11.2" fill="none" stroke="#d9302a" stroke-width="2.6"/><path d="M11.2 1.2H17.6V7.8Z" fill="#d9302a"/></svg>
<div style="position:absolute;left:1298.50px;top:718.00px;width:1.30px;height:28.00px;background:#555;"></div>
<svg style="left:1305.00px;top:721.00px" width="22" height="22" viewBox="0 0 22 22"><path d="M2 5.5V2H5.5M16.5 2H20V5.5M20 16.5V20H16.5M5.5 20H2V16.5" fill="none" stroke="#555" stroke-width="1.7"/><path d="M11 2V20M2 11H20" stroke="#ccc" stroke-width="1.3"/><path d="M4 9H8.2L12.2 11.4L17 6" fill="none" stroke="#555" stroke-width="1"/><circle cx="4.2" cy="9" r="1.9" fill="#fff" stroke="#555" stroke-width="1.2"/><circle cx="10.4" cy="10.6" r="1.9" fill="#fff" stroke="#555" stroke-width="1.2"/><circle cx="16.8" cy="6" r="1.9" fill="#fff" stroke="#555" stroke-width="1.2"/></svg>
<div style="position:absolute;left:1333.20px;top:718.00px;width:1.30px;height:28.00px;background:#555;"></div>
<svg style="left:1341.00px;top:722.00px" width="20" height="20" viewBox="0 0 20 20"><path d="M8.1 0H11.9L12.7 5.2H7.3Z" transform="rotate(0 10 10)" fill="#444"/><path d="M8.1 0H11.9L12.7 5.2H7.3Z" transform="rotate(45 10 10)" fill="#444"/><path d="M8.1 0H11.9L12.7 5.2H7.3Z" transform="rotate(90 10 10)" fill="#444"/><path d="M8.1 0H11.9L12.7 5.2H7.3Z" transform="rotate(135 10 10)" fill="#444"/><path d="M8.1 0H11.9L12.7 5.2H7.3Z" transform="rotate(180 10 10)" fill="#444"/><path d="M8.1 0H11.9L12.7 5.2H7.3Z" transform="rotate(225 10 10)" fill="#444"/><path d="M8.1 0H11.9L12.7 5.2H7.3Z" transform="rotate(270 10 10)" fill="#444"/><path d="M8.1 0H11.9L12.7 5.2H7.3Z" transform="rotate(315 10 10)" fill="#444"/><circle cx="10" cy="10" r="5.5" fill="none" stroke="#444" stroke-width="2.9"/></svg>
<svg style="left:1370.40px;top:722.00px" width="20" height="20" viewBox="0 0 20 20"><circle cx="10.4" cy="9.6" r="9.4" fill="#444"/><path d="M3.2 14.5L0.6 19.6L8 18.2Z" fill="#444"/><text x="10.4" y="14.2" font-family="Liberation Sans" font-weight="bold" font-size="13" text-anchor="middle" fill="#fff">?</text></svg>
<svg style="left:10.40px;top:-2.20px" width="15" height="19" viewBox="0 0 15 19"><path d="M0.9 0.9H9.6L14.1 5.4V18.1H0.9Z" fill="#fff" stroke="#555" stroke-width="1.6" stroke-linejoin="round"/><path d="M9.6 0.9V5.4H14.1" fill="none" stroke="#555" stroke-width="1.2"/></svg>
<svg style="left:38.00px;top:-2.20px" width="20" height="19" viewBox="0 0 20 19"><path d="M1 18V1.2H7.2L8.6 4H15V8" fill="#8a7752" stroke="#555" stroke-width="1.5" stroke-linejoin="round"/><path d="M1 18L4.2 7.2H19.2L15.8 18Z" fill="#fff" stroke="#555" stroke-width="1.6" stroke-linejoin="round"/></svg>
<svg style="left:62.20px;top:4.20px" width="7" height="6" viewBox="0 0 7 6"><path d="M0 0H7L3.5 6Z" fill="#555"/></svg>
<svg style="left:79.20px;top:-2.20px" width="20" height="19" viewBox="0 0 20 19"><path d="M1 1H19V18H3L1 16Z" fill="#7a7a7a" stroke="#555" stroke-width="1.4" stroke-linejoin="round"/><rect x="4.6" y="0.8" width="10.8" height="7.6" fill="#fff"/><rect x="4.4" y="11.6" width="11.4" height="5.8" fill="#fff"/><rect x="11.6" y="12.4" width="3.4" height="4.6" fill="#8a7752"/></svg>
<svg style="left:103.00px;top:4.20px" width="7" height="6" viewBox="0 0 7 6"><path d="M0 0H7L3.5 6Z" fill="#555"/></svg>
<div style="position:absolute;left:117.00px;top:0.00px;width:1.30px;height:19.60px;background:#555;"></div>
<div style="position:absolute;left:122.00px;top:-6.00px;width:90.00px;height:25.00px;box-sizing:border-box;border:1px solid #5c5c5c;background:linear-gradient(#929292,#707070 50%,#646464);"></div>
<span class="t" style="top:-0.31px;font-size:11px;line-height:14px;color:#fff;left:128.00px;">Acoustics</span>
<svg style="left:197.00px;top:-0.40px" width="8" height="14" viewBox="0 0 8 14"><path d="M0 5.6L4 0L8 5.6ZM0 8.4L4 14L8 8.4Z" fill="#fff"/></svg>
<div style="position:absolute;left:217.00px;top:-6.00px;width:24.00px;height:26.00px;box-sizing:border-box;border:2px solid #5a5a5a;border-radius:3.5px;background:#fbfbfb;"></div>
<svg style="left:216.60px;top:-5px" width="26" height="26" viewBox="0 0 26 26"><circle cx="12" cy="11.6" r="9.6" fill="#8eaa3a" stroke="#5a5a2a" stroke-width="1"/><circle cx="12" cy="11.6" r="6.6" fill="#f0a22c"/><circle cx="12" cy="11.6" r="3.8" fill="#ee5a22"/><rect x="10.6" y="10.2" width="2.8" height="2.8" fill="#d81818"/></svg>
<svg style="left:247.00px;top:-5px" width="26" height="26" viewBox="0 0 26 26"><circle cx="12" cy="11.6" r="9.4" fill="#ece8cc" stroke="#5a5a4a" stroke-width="1.6"/><path d="M17.2 7.6L10.6 11.8L17.2 16Z" fill="#f6c8b8"/><path d="M17 9L12 11.8L17 14.6Z" fill="#f0a22c"/><path d="M14 10.4L11 11.8L14 13.2Z" fill="#e02818"/></svg>
<svg style="left:277.00px;top:-5px" width="26" height="26" viewBox="0 0 26 26"><path d="M12 1.4L21 5.6L12 10L3 5.6Z" fill="#a48656" stroke="#5a4a30" stroke-width=".8"/><path d="M3 5.6L12 10V21.4L3 16.4Z" fill="#6a6a6a" stroke="#444" stroke-width=".8"/><path d="M21 5.6L12 10V21.4L21 16.4Z" fill="#7e6a48" stroke="#4a4030" stroke-width=".8"/><path d="M4.4 11.6L10.6 14.8" stroke="#444" stroke-width=".9"/></svg>
<svg style="left:307.00px;top:-5px" width="26" height="26" viewBox="0 0 26 26"><circle cx="12" cy="11.4" r="9.8" fill="#3c4cdc" stroke="#5a5a6a" stroke-width="1"/><circle cx="12" cy="14.2" r="6.4" fill="#f6e63a"/><circle cx="12" cy="17.2" r="3.4" fill="#dc2a1c"/></svg>
<div style="position:absolute;left:335.80px;top:0.00px;width:1.30px;height:19.60px;background:#555;"></div>
<svg style="left:343.00px;top:-5px" width="26" height="26" viewBox="0 0 26 26"><path d="M5 3H18.4V17.6H5Z" fill="none" stroke="#555" stroke-width="1.6"/><path d="M11 11.6H21.4" stroke="#e02828" stroke-width="1.6"/><path d="M11 11.6V1" stroke="#2a86d8" stroke-width="1.4"/><path d="M11 11.6L16.4 3" stroke="#2a9a3a" stroke-width="1.4"/></svg>
<svg style="left:372.00px;top:-5px" width="26" height="26" viewBox="0 0 26 26"><path d="M2.6 15.4L9.6 9H22L15 15.4Z" fill="none" stroke="#555" stroke-width="1.6"/><path d="M11.4 12H22" stroke="#e02828" stroke-width="1.6"/><path d="M11.4 12V2" stroke="#2a86d8" stroke-width="1.4"/><path d="M11.4 12L17.4 4.6" stroke="#2a9a3a" stroke-width="1.4"/></svg>
<svg style="left:404.00px;top:-5px" width="26" height="26" viewBox="0 0 26 26"><path d="M6 8.6L13.4 1.6V14L6 21Z" fill="none" stroke="#555" stroke-width="1.6"/><path d="M10 11.4H20" stroke="#e02828" stroke-width="1.6"/><path d="M10 11.4V1" stroke="#2a86d8" stroke-width="1.4"/><path d="M10 11.4L15.6 3.4" stroke="#2a9a3a" stroke-width="1.4"/></svg>
<div style="position:absolute;left:431.00px;top:0.00px;width:1.30px;height:19.60px;background:#555;"></div>
<svg style="left:437.00px;top:-5px" width="26" height="26" viewBox="0 0 26 26"><circle cx="12" cy="12" r="10" fill="#1c90d8"/><circle cx="12" cy="6.6" r="1.9" fill="#fff"/><rect x="10.4" y="9.6" width="3.2" height="9" fill="#fff"/></svg>
<div style="position:absolute;left:466.00px;top:0.00px;width:1.30px;height:19.60px;background:#555;"></div>
<div style="position:absolute;left:471.00px;top:-6.00px;width:26.00px;height:26.00px;box-sizing:border-box;border:2px solid #5a5a5a;border-radius:3.5px;background:#fbfbfb;"></div>
<div style="position:absolute;left:501.00px;top:-6.00px;width:26.00px;height:26.00px;box-sizing:border-box;border:2px solid #5a5a5a;border-radius:3.5px;background:#fbfbfb;"></div>
<div style="position:absolute;left:531.00px;top:-6.00px;width:26.00px;height:26.00px;box-sizing:border-box;border:2px solid #5a5a5a;border-radius:3.5px;background:#fbfbfb;"></div>
<div style="position:absolute;left:561.00px;top:-6.00px;width:26.00px;height:26.00px;box-sizing:border-box;border:2px solid #5a5a5a;border-radius:3.5px;background:#fbfbfb;"></div>
<div style="position:absolute;left:591.00px;top:-6.00px;width:26.00px;height:26.00px;box-sizing:border-box;border:2px solid #5a5a5a;border-radius:3.5px;background:#fbfbfb;"></div>
<div style="position:absolute;left:621.00px;top:-6.00px;width:26.00px;height:26.00px;box-sizing:border-box;border:2px solid #5a5a5a;border-radius:3.5px;background:#fbfbfb;"></div>
<div style="position:absolute;left:651.00px;top:-6.00px;width:26.00px;height:26.00px;box-sizing:border-box;border:2px solid #5a5a5a;border-radius:3.5px;background:#fbfbfb;"></div>
<svg style="left:471.80px;top:-5px" width="26" height="26" viewBox="0 0 26 26"><rect x="3" y="1" width="19" height="20" fill="#8a8a8a"/><path d="M3 1L9.4 8.4H15.6L22 1Z" fill="#5e5e5e"/><path d="M3 21L9.4 12.8H15.6L22 21Z" fill="#8ec63a"/><path d="M3 1L9.4 8.4V12.8L3 21ZM22 1L15.6 8.4V12.8L22 21Z" fill="#7c7c7c"/><path d="M3 1L9.4 8.4M22 1L15.6 8.4M3 21L9.4 12.8M22 21L15.6 12.8" stroke="#555" stroke-width=".8"/><rect x="9.4" y="8.4" width="6.2" height="4.4" fill="#fff"/></svg>
<svg style="left:501.80px;top:-5px" width="26" height="26" viewBox="0 0 26 26"><path d="M7 4L14 1L20 3.4V18L13 21.4L7 19Z" fill="#7a6848" stroke="#4a4030" stroke-width=".8"/><path d="M7 4L13 6.4V21.4L7 19Z" fill="#6a6a6a" stroke="#444" stroke-width=".8"/><path d="M5 8H8.6V12H5Z" fill="#5a5a5a" stroke="#333" stroke-width=".7"/><path d="M5 14H8.6V18H5Z" fill="#5a5a5a" stroke="#333" stroke-width=".7"/><path d="M13 6.4L20 3.4" stroke="#4a4030" stroke-width=".8"/></svg>
<svg style="left:531.80px;top:-5px" width="26" height="26" viewBox="0 0 26 26"><path d="M4.4 1V17.6H22" fill="none" stroke="#c8c8c8" stroke-width="1.2"/><path d="M5 16.6Q8.4 15.6 9.6 12.4" fill="none" stroke="#555" stroke-width="1.2"/><path d="M9 12.8L10 9.2L17.6 1L20.4 3.4L12.6 11.6Z" fill="#f2dc3a" stroke="#5a5a3a" stroke-width=".9"/><path d="M17.6 1L19 -0.6L21.8 1.8L20.4 3.4Z" fill="#f0a0b8" stroke="#5a5a5a" stroke-width=".8"/></svg>
<svg style="left:561.80px;top:-5px" width="26" height="26" viewBox="0 0 26 26"><path d="M4 1V17M4 17L8 17.4" stroke="#555" stroke-width="1.4" fill="none"/><path d="M7.4 17.6L17 11M17 11L20.6 2.4M5 1.6L17 11" stroke="#555" stroke-width="1.2" fill="none"/><circle cx="7.4" cy="17.8" r="3" fill="#e02a2a"/><circle cx="17.2" cy="10.8" r="3.2" fill="#f09020"/><circle cx="21" cy="2.6" r="3" fill="#8cc63f"/></svg>
<svg style="left:591.80px;top:-5px" width="26" height="26" viewBox="0 0 26 26"><path d="M3 1.4L21 11.6M3 9.6L21 20" stroke="#444" stroke-width="1.8" stroke-dasharray="2 1.6"/><circle cx="6.6" cy="7.4" r="2.9" fill="#e02a2a"/><circle cx="12.6" cy="10.4" r="2.9" fill="#f09020"/><circle cx="19" cy="13.6" r="2.9" fill="#8cc63f"/></svg>
<svg style="left:621.80px;top:-5px" width="26" height="26" viewBox="0 0 26 26"><path d="M4.6 -2V16H22" fill="none" stroke="#8a7650" stroke-width="1.6"/><path d="M7.6 15V8Q7.6 3 13 3H22" fill="none" stroke="#9a8660" stroke-width="1.6"/><path d="M11 15V10Q11 6.4 15 6.4H22" fill="none" stroke="#2a86d8" stroke-width="1.6"/><path d="M14.4 15V12Q14.4 9.8 17 9.8H22" fill="none" stroke="#6aa84a" stroke-width="1.4"/></svg>
<svg style="left:651.80px;top:-5px" width="26" height="26" viewBox="0 0 26 26"><path d="M5.4 -2H16L19.6 1.6V17.6H5.4Z" fill="#f2ecd6" stroke="#5a5a4a" stroke-width="1.3"/><path d="M8 3.2H17M8 6.4H17M8 9.6H17M8 12.8H17" stroke="#8a7650" stroke-width="1.5"/><path d="M9 0H13" stroke="#8a7650" stroke-width="1.2"/></svg>
<div style="position:absolute;left:681.00px;top:0.00px;width:1.30px;height:19.60px;background:#555;"></div>
<svg style="left:687.00px;top:-5px" width="26" height="26" viewBox="0 0 26 26"><path d="M12 -2V22M0 11.6H24" stroke="#c8d0d0" stroke-width="1.6"/><path d="M12 -2V8" stroke="#2a9a3a" stroke-width="1.8"/><path d="M14 11.6H21.6" stroke="#e02828" stroke-width="1.8"/><g stroke="#444" stroke-width="1.5" fill="none"><path d="M8 8L2.6 2.6M2.6 6.6V2.6H6.6"/><path d="M16 8L21.4 2.6M17.4 2.6H21.4V6.6"/><path d="M8 15.6L2.6 21M2.6 17V21H6.6"/><path d="M16 15.6L21.4 21M21.4 17V21H17.4"/></g></svg>
<svg style="left:717.00px;top:-5px" width="26" height="26" viewBox="0 0 26 26"><g stroke="#4a4a4a" stroke-width="1.7" fill="none"><path d="M2.6 8.6H21.6V21H2.6Z"/><path d="M2.6 14.8H21.6M8.9 8.6V21M15.3 8.6V21M15.3 -2V8.6M21.6 -2V8.6"/></g><path d="M8.9 -2V8" stroke="#c8d0d0" stroke-width="1.6"/><path d="M9.6 8.2H15.6" stroke="#e02828" stroke-width="1.8"/><path d="M2.6 8.4H8" stroke="#c8d0d0" stroke-width="1.6"/></svg>
<svg style="left:743.40px;top:4.20px" width="7" height="6" viewBox="0 0 7 6"><path d="M0 0H7L3.5 6Z" fill="#555"/></svg>
<div style="position:absolute;left:757.20px;top:0.00px;width:1.30px;height:19.60px;background:#555;"></div>
<svg style="left:764.80px;top:-2.60px" width="20" height="20" viewBox="0 0 20 20"><path d="M8.1 0H11.9L12.7 5.2H7.3Z" transform="rotate(0 10 10)" fill="#444"/><path d="M8.1 0H11.9L12.7 5.2H7.3Z" transform="rotate(45 10 10)" fill="#444"/><path d="M8.1 0H11.9L12.7 5.2H7.3Z" transform="rotate(90 10 10)" fill="#444"/><path d="M8.1 0H11.9L12.7 5.2H7.3Z" transform="rotate(135 10 10)" fill="#444"/><path d="M8.1 0H11.9L12.7 5.2H7.3Z" transform="rotate(180 10 10)" fill="#444"/><path d="M8.1 0H11.9L12.7 5.2H7.3Z" transform="rotate(225 10 10)" fill="#444"/><path d="M8.1 0H11.9L12.7 5.2H7.3Z" transform="rotate(270 10 10)" fill="#444"/><path d="M8.1 0H11.9L12.7 5.2H7.3Z" transform="rotate(315 10 10)" fill="#444"/><circle cx="10" cy="10" r="5.5" fill="none" stroke="#444" stroke-width="2.9"/></svg>
<svg style="left:795.00px;top:-3.00px" width="20" height="20" viewBox="0 0 20 20"><circle cx="10.4" cy="9.6" r="9.4" fill="#444"/><path d="M3.2 14.5L0.6 19.6L8 18.2Z" fill="#444"/><text x="10.4" y="14.2" font-family="Liberation Sans" font-weight="bold" font-size="13" text-anchor="middle" fill="#fff">?</text></svg>
<svg style="left:823.00px;top:-5px" width="26" height="26" viewBox="0 0 26 26"><circle cx="12" cy="7" r="7.2" fill="#eaf4fc" stroke="#2a8ad8" stroke-width="1.5"/><path d="M12 -0.2V14.2M4.8 7H19.2M6 3H18M6 11H18" stroke="#2a8ad8" stroke-width="1.1" fill="none"/><ellipse cx="12" cy="7" rx="3.6" ry="7.2" fill="none" stroke="#2a8ad8" stroke-width="1.1"/><path d="M12 13V19" stroke="#2a8ad8" stroke-width="2.4"/><path d="M7.8 17L12 21.6L16.2 17Z" fill="#2a8ad8"/></svg>
</div>
</div>
</body></html>
